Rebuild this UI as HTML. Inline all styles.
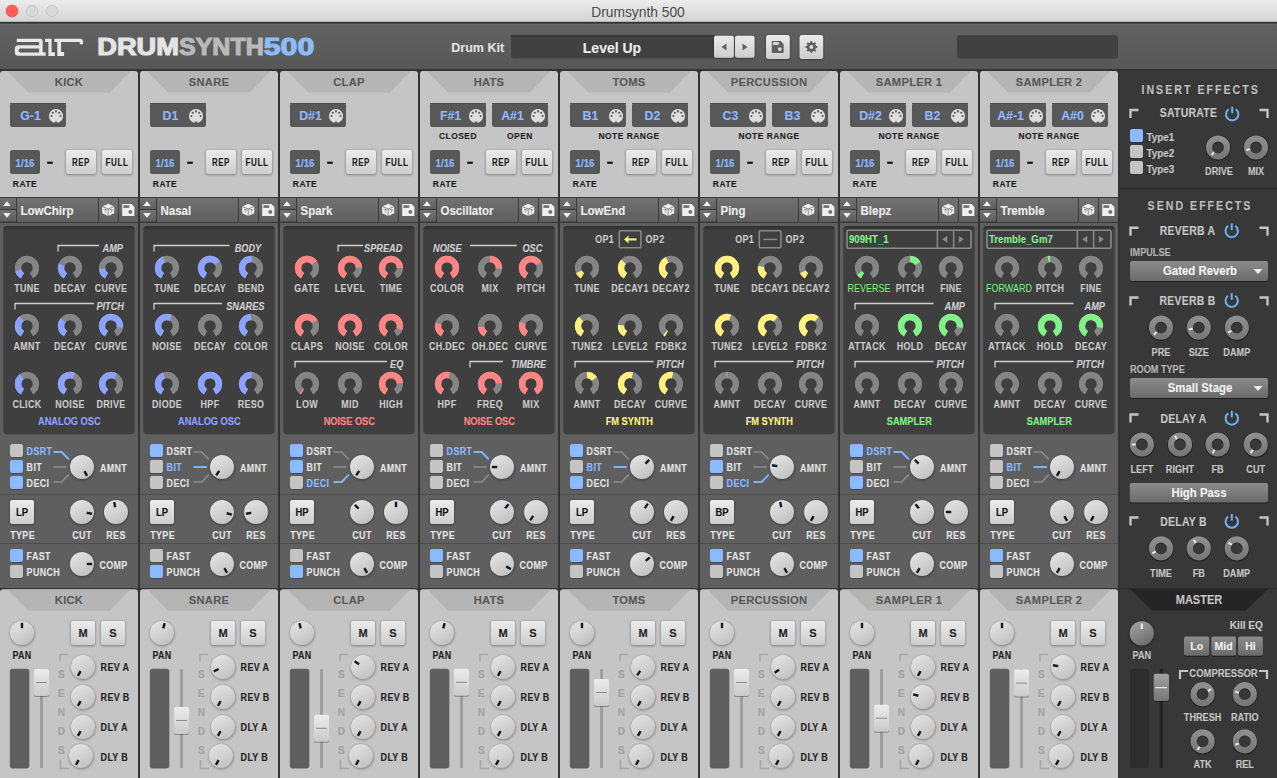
<!DOCTYPE html><html><head><meta charset="utf-8"><style>html,body{margin:0;padding:0;background:#333;overflow:hidden}svg{display:block}text{font-family:"Liberation Sans", sans-serif}</style></head><body>
<svg width="1277" height="778" viewBox="0 0 1277 778">
<defs>
<linearGradient id="title" x1="0" y1="0" x2="0" y2="1"><stop offset="0" stop-color="#ececec"/><stop offset="1" stop-color="#d4d4d4"/></linearGradient>
<linearGradient id="hdr" x1="0" y1="0" x2="0" y2="1"><stop offset="0" stop-color="#626262"/><stop offset="1" stop-color="#575757"/></linearGradient>
<linearGradient id="lbtn" x1="0" y1="0" x2="0" y2="1"><stop offset="0" stop-color="#ebebeb"/><stop offset="1" stop-color="#cdcdcd"/></linearGradient>
<linearGradient id="gbtn" x1="0" y1="0" x2="0" y2="1"><stop offset="0" stop-color="#8c8c8c"/><stop offset="1" stop-color="#6a6a6a"/></linearGradient>
<linearGradient id="pbar" x1="0" y1="0" x2="0" y2="1"><stop offset="0" stop-color="#727272"/><stop offset="1" stop-color="#5e5e5e"/></linearGradient>
<linearGradient id="wknob" x1="0.2" y1="0" x2="0.8" y2="1"><stop offset="0" stop-color="#e4e4e4"/><stop offset="1" stop-color="#c0c0c0"/></linearGradient>
<linearGradient id="dknob" x1="0" y1="0" x2="0" y2="1"><stop offset="0" stop-color="#8e8e8e"/><stop offset="1" stop-color="#787878"/></linearGradient>
<linearGradient id="gknob" x1="0.2" y1="0" x2="0.8" y2="1"><stop offset="0" stop-color="#a0a0a0"/><stop offset="1" stop-color="#6a6a6a"/></linearGradient>
<linearGradient id="fcap" x1="0" y1="0" x2="0" y2="1"><stop offset="0" stop-color="#ececec"/><stop offset="1" stop-color="#cacaca"/></linearGradient>
<linearGradient id="mcap" x1="0" y1="0" x2="0" y2="1"><stop offset="0" stop-color="#a2a2a2"/><stop offset="1" stop-color="#767676"/></linearGradient>
<linearGradient id="ishadow" x1="0" y1="0" x2="0" y2="1"><stop offset="0" stop-color="#000" stop-opacity="0.25"/><stop offset="1" stop-color="#000" stop-opacity="0"/></linearGradient>
<filter id="blur1" x="-50%" y="-50%" width="200%" height="200%"><feGaussianBlur stdDeviation="0.9"/></filter>
<filter id="blur05" x="-50%" y="-50%" width="200%" height="200%"><feGaussianBlur stdDeviation="0.6"/></filter>
</defs>
<rect x="0.00" y="0.00" width="1277.00" height="778.00" fill="#333"/>
<rect x="0.00" y="0.00" width="1277.00" height="22.00" fill="url(#title)"/>
<rect x="0.00" y="21.80" width="1277.00" height="2.00" fill="#333"/>
<circle cx="12" cy="11" r="6" fill="#fd5e56" stroke="#e2463f" stroke-width="0.6"/>
<circle cx="32" cy="11" r="5.7" fill="#d9d9d9" stroke="#c2c2c2" stroke-width="0.8"/>
<circle cx="52" cy="11" r="5.7" fill="#d9d9d9" stroke="#c2c2c2" stroke-width="0.8"/>
<text x="638.00" y="16.83" font-size="13.8" fill="#4b4b4b" font-weight="normal" text-anchor="middle">Drumsynth 500</text>
<rect x="0.00" y="23.80" width="1277.00" height="45.20" fill="url(#hdr)"/>
<rect x="0.00" y="23.80" width="1277.00" height="1.00" fill="#696969"/>
<rect x="0.00" y="69.00" width="1277.00" height="2.00" fill="#343434"/>
<path fill="#e8e8e8" fill-rule="evenodd" d="M16.7,38.7 H40.2 Q42.7,38.7 42.7,41.2 V52.2 H45.7 V55.7 H18.3 Q14.8,55.7 14.8,52.2 V48.7 Q14.8,45.2 18.3,45.2 H39.1 V42 H16.7 Z M20.5,48.4 H39.1 V52.5 H20.5 Q18.5,52.5 18.5,50.45 Q18.5,48.4 20.5,48.4 Z"/>
<path fill="#e8e8e8" d="M45.1,38.8 H51.6 V52.3 H54.9 V55.9 H48.4 V41.9 H45.1 Z"/>
<path fill="#e8e8e8" d="M54.4,38.8 H80 Q83,38.8 83,41.8 V44.2 H79.8 V42.1 H61.1 V51.9 H64.1 V55.9 H57.3 V42.1 H54.4 Z"/>
<text x="97.20" y="55.36" font-size="23.2" fill="#e4e4e4" font-weight="bold" text-anchor="start" stroke="#e4e4e4" stroke-width="1.1" textLength="81.8" lengthAdjust="spacingAndGlyphs">DRUM</text>
<text x="179.00" y="55.36" font-size="23.2" fill="#b9b9b9" font-weight="bold" text-anchor="start" stroke="#b9b9b9" stroke-width="1.1" textLength="84.8" lengthAdjust="spacingAndGlyphs">SYNTH</text>
<text x="263.80" y="55.36" font-size="23.2" fill="#8cbcfa" font-weight="bold" text-anchor="start" stroke="#8cbcfa" stroke-width="1.1" textLength="50.4" lengthAdjust="spacingAndGlyphs">500</text>
<text x="451.30" y="51.56" font-size="12.5" fill="#e2e2e2" font-weight="bold" text-anchor="start" stroke="#e2e2e2" stroke-width="0.12">Drum Kit</text>
<rect x="511.00" y="35.00" width="203.00" height="23.50" fill="#414141" rx="3"/>
<rect x="511.00" y="35.00" width="203.00" height="1.50" fill="#353535"/>
<text x="612.00" y="53.10" font-size="14" fill="#ececec" font-weight="bold" text-anchor="middle" stroke="#ececec" stroke-width="0.12">Level Up</text>
<rect x="713.70" y="36.10" width="20.60" height="22.60" fill="#000" rx="2" opacity="0.35" filter="url(#blur1)"/>
<rect x="714.00" y="35.80" width="20.00" height="22.00" fill="url(#lbtn)" rx="2"/>
<rect x="734.70" y="36.10" width="20.20" height="22.60" fill="#000" rx="2" opacity="0.35" filter="url(#blur1)"/>
<rect x="735.00" y="35.80" width="19.60" height="22.00" fill="url(#lbtn)" rx="2"/>
<path d="M721.5,47 L726.5,43.5 V50.5 Z" fill="#606060"/>
<path d="M747.5,47 L742.5,43.5 V50.5 Z" fill="#606060"/>
<rect x="765.70" y="35.30" width="24.40" height="24.50" fill="#000" rx="2.5" opacity="0.35" filter="url(#blur1)"/>
<rect x="766.00" y="35.00" width="23.80" height="23.90" fill="url(#lbtn)" rx="2.5"/>
<rect x="799.20" y="35.30" width="24.30" height="24.50" fill="#000" rx="2.5" opacity="0.35" filter="url(#blur1)"/>
<rect x="799.50" y="35.00" width="23.70" height="23.90" fill="url(#lbtn)" rx="2.5"/>
<path d="M771.8,41.6 Q771.8,41 772.4,41 H780.9 L783.7,44.4 V52.3 Q783.7,52.9 783.1,52.9 H772.4 Q771.8,52.9 771.8,52.3 Z" fill="#606060"/>
<rect x="772.90" y="42.10" width="5.90" height="2.80" fill="#dcdcdc"/>
<circle cx="779.8" cy="49.1" r="1.9" fill="#dcdcdc"/>
<polygon points="810.67,41.04 812.13,41.04 812.60,42.66 813.62,43.08 815.09,42.27 816.13,43.31 815.32,44.78 815.74,45.80 817.36,46.27 817.36,47.73 815.74,48.20 815.32,49.22 816.13,50.69 815.09,51.73 813.62,50.92 812.60,51.34 812.13,52.96 810.67,52.96 810.20,51.34 809.18,50.92 807.71,51.73 806.67,50.69 807.48,49.22 807.06,48.20 805.44,47.73 805.44,46.27 807.06,45.80 807.48,44.78 806.67,43.31 807.71,42.27 809.18,43.08 810.20,42.66" fill="#606060"/>
<circle cx="811.4" cy="47" r="1.9" fill="#dcdcdc"/>
<rect x="957.00" y="35.20" width="161.00" height="23.50" fill="#414141" rx="3"/>
<path d="M0,197 V74 Q0,71 3,71 H135 Q138,71 138,74 V197 Z" fill="#c5c5c5"/>
<polygon points="7,71 130.5,71 110,92.5 28.3,92.5" fill="#b5b5b5"/>
<text transform="translate(69.00,85.89) scale(0.97,1)" font-size="11.5" fill="#585858" font-weight="bold" text-anchor="middle" letter-spacing="0.3" stroke="#585858" stroke-width="0.12">KICK</text>
<rect x="10.00" y="103.00" width="56.00" height="24.00" fill="#585858" rx="2.5"/>
<rect x="10.00" y="103.00" width="56.00" height="1.00" fill="#4a4a4a"/>
<text transform="translate(30.50,119.94) scale(0.95,1)" font-size="13" fill="#8cb8ff" font-weight="bold" text-anchor="middle" stroke="#8cb8ff" stroke-width="0.12">G-1</text>
<circle cx="56" cy="116" r="7.1" fill="#dedede"/>
<rect x="54.8" cy="0" y="121.6" width="2.4" height="2" fill="#555"/>
<circle cx="51.40" cy="116.00" r="1.05" fill="#555"/>
<circle cx="52.75" cy="112.75" r="1.05" fill="#555"/>
<circle cx="56.00" cy="111.40" r="1.05" fill="#555"/>
<circle cx="59.25" cy="112.75" r="1.05" fill="#555"/>
<circle cx="60.60" cy="116.00" r="1.05" fill="#555"/>
<rect x="10.00" y="150.00" width="30.00" height="24.00" fill="#585858" rx="2.5"/>
<text transform="translate(25.00,167.22) scale(0.95,1)" font-size="10.2" fill="#8cb8ff" font-weight="bold" text-anchor="middle" stroke="#8cb8ff" stroke-width="0.12">1/16</text>
<rect x="47.20" y="161.60" width="5.60" height="2.40" fill="#202020"/>
<rect x="65.70" y="150.30" width="30.60" height="24.60" fill="#000" rx="2" opacity="0.35" filter="url(#blur1)"/>
<rect x="66.00" y="150.00" width="30.00" height="24.00" fill="url(#lbtn)" rx="2"/>
<rect x="101.70" y="150.30" width="30.60" height="24.60" fill="#000" rx="2" opacity="0.35" filter="url(#blur1)"/>
<rect x="102.00" y="150.00" width="30.00" height="24.00" fill="url(#lbtn)" rx="2"/>
<text transform="translate(81.00,165.65) scale(0.79,1)" font-size="10" fill="#1e1e1e" font-weight="bold" text-anchor="middle" letter-spacing="0.7" stroke="#1e1e1e" stroke-width="0.12">REP</text>
<text transform="translate(117.00,165.65) scale(0.81,1)" font-size="10" fill="#1e1e1e" font-weight="bold" text-anchor="middle" letter-spacing="0.7" stroke="#1e1e1e" stroke-width="0.12">FULL</text>
<text transform="translate(25.00,187.11) scale(0.85,1)" font-size="9.9" fill="#202020" font-weight="bold" text-anchor="middle" letter-spacing="0.6" stroke="#202020" stroke-width="0.12">RATE</text>
<rect x="0.00" y="197.00" width="138.00" height="26.00" fill="#3a3a3a"/>
<rect x="0.00" y="198.00" width="16.00" height="11.00" fill="url(#pbar)"/>
<rect x="0.00" y="210.00" width="16.00" height="11.50" fill="url(#pbar)"/>
<rect x="17.00" y="198.00" width="81.00" height="24.00" fill="url(#pbar)"/>
<rect x="99.00" y="198.00" width="19.00" height="24.00" fill="url(#pbar)"/>
<rect x="119.00" y="198.00" width="19.00" height="24.00" fill="url(#pbar)"/>
<polygon points="3.1,206 10.8,206 6.95,201.2" fill="#f0f0f0"/>
<polygon points="3.1,213 10.8,213 6.95,217.8" fill="#f0f0f0"/>
<text transform="translate(20.50,214.57) scale(0.96,1)" font-size="12" fill="#ececec" font-weight="bold" text-anchor="start" stroke="#ececec" stroke-width="0.12">LowChirp</text>
<path d="M102.2,206.5 L108.2,203.7 L114.2,206.5 V213.3 L108.2,216 L102.2,213.3 Z" fill="#f0f0f0"/>
<path d="M102.2,206.5 L108.2,209 L114.2,206.5 M108.2,209 V216" fill="none" stroke="#6a6a6a" stroke-width="0.8"/>
<text x="105.2" y="213.2" font-size="5.5" font-weight="bold" fill="#777" text-anchor="middle">?</text>
<text x="111.2" y="213.2" font-size="5.5" font-weight="bold" fill="#777" text-anchor="middle">?</text>
<path d="M122.2,204.6 Q122.2,204 122.8,204 H131.5 L134.4,207 V215.4 Q134.4,216 133.8,216 H122.8 Q122.2,216 122.2,215.4 Z" fill="#f0f0f0"/>
<rect x="123.40" y="205.30" width="5.80" height="2.60" fill="#6e6e6e"/>
<circle cx="130.3" cy="211.9" r="1.9" fill="#6e6e6e"/>
<rect x="0.00" y="223.00" width="138.00" height="365.00" fill="#5f5f5f"/>
<rect x="3.20" y="226.00" width="131.50" height="208.20" fill="#3f3f3f" rx="4"/>
<rect x="3.20" y="226.00" width="131.50" height="5.00" fill="url(#ishadow)" rx="4"/>
<circle cx="27.00" cy="268.00" r="12.4" fill="none" stroke="#2e2e2e" stroke-width="0.8" stroke-dasharray="64.93 100" transform="rotate(120 27.00 268.00)" opacity="0.6"/>
<path d="M22.50,275.79 A9,9 0 1 1 31.50,275.79" fill="none" stroke="#858585" stroke-width="6.4"/>
<path d="M22.50,275.79 A9,9 0 0 1 18.31,270.33" fill="none" stroke="#8ca2ff" stroke-width="6.4"/>
<text transform="translate(27.00,291.83) scale(0.85,1)" font-size="10.5" fill="#cacaca" font-weight="bold" text-anchor="middle" letter-spacing="0.4" stroke="#cacaca" stroke-width="0.12">TUNE</text>
<circle cx="70.00" cy="268.00" r="12.4" fill="none" stroke="#2e2e2e" stroke-width="0.8" stroke-dasharray="64.93 100" transform="rotate(120 70.00 268.00)" opacity="0.6"/>
<path d="M65.50,275.79 A9,9 0 1 1 74.50,275.79" fill="none" stroke="#858585" stroke-width="6.4"/>
<path d="M65.50,275.79 A9,9 0 0 1 61.54,264.92" fill="none" stroke="#8ca2ff" stroke-width="6.4"/>
<text transform="translate(70.00,291.83) scale(0.85,1)" font-size="10.5" fill="#cacaca" font-weight="bold" text-anchor="middle" letter-spacing="0.4" stroke="#cacaca" stroke-width="0.12">DECAY</text>
<circle cx="111.00" cy="268.00" r="12.4" fill="none" stroke="#2e2e2e" stroke-width="0.8" stroke-dasharray="64.93 100" transform="rotate(120 111.00 268.00)" opacity="0.6"/>
<path d="M106.50,275.79 A9,9 0 1 1 115.50,275.79" fill="none" stroke="#858585" stroke-width="6.4"/>
<path d="M106.50,275.79 A9,9 0 0 1 102.03,268.78" fill="none" stroke="#8ca2ff" stroke-width="6.4"/>
<text transform="translate(111.00,291.83) scale(0.85,1)" font-size="10.5" fill="#cacaca" font-weight="bold" text-anchor="middle" letter-spacing="0.4" stroke="#cacaca" stroke-width="0.12">CURVE</text>
<circle cx="27.00" cy="326.00" r="12.4" fill="none" stroke="#2e2e2e" stroke-width="0.8" stroke-dasharray="64.93 100" transform="rotate(120 27.00 326.00)" opacity="0.6"/>
<path d="M22.50,333.79 A9,9 0 1 1 31.50,333.79" fill="none" stroke="#858585" stroke-width="6.4"/>
<path d="M22.50,333.79 A9,9 0 0 1 21.84,318.63" fill="none" stroke="#8ca2ff" stroke-width="6.4"/>
<text transform="translate(27.00,349.83) scale(0.85,1)" font-size="10.5" fill="#cacaca" font-weight="bold" text-anchor="middle" letter-spacing="0.4" stroke="#cacaca" stroke-width="0.12">AMNT</text>
<circle cx="70.00" cy="326.00" r="12.4" fill="none" stroke="#2e2e2e" stroke-width="0.8" stroke-dasharray="64.93 100" transform="rotate(120 70.00 326.00)" opacity="0.6"/>
<path d="M65.50,333.79 A9,9 0 1 1 74.50,333.79" fill="none" stroke="#858585" stroke-width="6.4"/>
<path d="M65.50,333.79 A9,9 0 0 1 63.11,320.21" fill="none" stroke="#8ca2ff" stroke-width="6.4"/>
<text transform="translate(70.00,349.83) scale(0.85,1)" font-size="10.5" fill="#cacaca" font-weight="bold" text-anchor="middle" letter-spacing="0.4" stroke="#cacaca" stroke-width="0.12">DECAY</text>
<circle cx="111.00" cy="326.00" r="12.4" fill="none" stroke="#2e2e2e" stroke-width="0.8" stroke-dasharray="64.93 100" transform="rotate(120 111.00 326.00)" opacity="0.6"/>
<path d="M106.50,333.79 A9,9 0 1 1 115.50,333.79" fill="none" stroke="#858585" stroke-width="6.4"/>
<path d="M106.50,333.79 A9,9 0 1 1 119.86,327.56" fill="none" stroke="#8ca2ff" stroke-width="6.4"/>
<text transform="translate(111.00,349.83) scale(0.85,1)" font-size="10.5" fill="#cacaca" font-weight="bold" text-anchor="middle" letter-spacing="0.4" stroke="#cacaca" stroke-width="0.12">CURVE</text>
<circle cx="27.00" cy="384.00" r="12.4" fill="none" stroke="#2e2e2e" stroke-width="0.8" stroke-dasharray="64.93 100" transform="rotate(120 27.00 384.00)" opacity="0.6"/>
<path d="M22.50,391.79 A9,9 0 1 1 31.50,391.79" fill="none" stroke="#858585" stroke-width="6.4"/>
<path d="M22.50,391.79 A9,9 0 0 1 21.84,376.63" fill="none" stroke="#8ca2ff" stroke-width="6.4"/>
<text transform="translate(27.00,407.83) scale(0.85,1)" font-size="10.5" fill="#cacaca" font-weight="bold" text-anchor="middle" letter-spacing="0.4" stroke="#cacaca" stroke-width="0.12">CLICK</text>
<circle cx="70.00" cy="384.00" r="12.4" fill="none" stroke="#2e2e2e" stroke-width="0.8" stroke-dasharray="64.93 100" transform="rotate(120 70.00 384.00)" opacity="0.6"/>
<path d="M65.50,391.79 A9,9 0 1 1 74.50,391.79" fill="none" stroke="#858585" stroke-width="6.4"/>
<path d="M65.50,391.79 A9,9 0 0 1 73.80,375.84" fill="none" stroke="#8ca2ff" stroke-width="6.4"/>
<text transform="translate(70.00,407.83) scale(0.85,1)" font-size="10.5" fill="#cacaca" font-weight="bold" text-anchor="middle" letter-spacing="0.4" stroke="#cacaca" stroke-width="0.12">NOISE</text>
<circle cx="111.00" cy="384.00" r="12.4" fill="none" stroke="#2e2e2e" stroke-width="0.8" stroke-dasharray="64.93 100" transform="rotate(120 111.00 384.00)" opacity="0.6"/>
<path d="M106.50,391.79 A9,9 0 1 1 115.50,391.79" fill="none" stroke="#858585" stroke-width="6.4"/>
<path d="M106.50,391.79 A9,9 0 0 1 115.50,376.21" fill="none" stroke="#8ca2ff" stroke-width="6.4"/>
<text transform="translate(111.00,407.83) scale(0.85,1)" font-size="10.5" fill="#cacaca" font-weight="bold" text-anchor="middle" letter-spacing="0.4" stroke="#cacaca" stroke-width="0.12">DRIVE</text>
<path d="M58,251.5 V245.5 H99" fill="none" stroke="#cfcfcf" stroke-width="1.3"/>
<text transform="translate(123.00,251.95) scale(0.92,1)" font-size="10" fill="#cfcfcf" font-weight="bold" text-anchor="end" font-style="italic" stroke="#cfcfcf" stroke-width="0.12">AMP</text>
<path d="M15,309.5 V303.5 H94" fill="none" stroke="#cfcfcf" stroke-width="1.3"/>
<text transform="translate(124.00,309.94) scale(0.92,1)" font-size="10" fill="#cfcfcf" font-weight="bold" text-anchor="end" font-style="italic" stroke="#cfcfcf" stroke-width="0.12">PITCH</text>
<text transform="translate(69.30,424.83) scale(0.88,1)" font-size="10.5" fill="#8ca2ff" font-weight="bold" text-anchor="middle" stroke="#8ca2ff" stroke-width="0.12">ANALOG OSC</text>
<rect x="0.00" y="494.00" width="138.00" height="1.00" fill="#4d4d4d"/>
<rect x="0.00" y="543.00" width="138.00" height="1.00" fill="#4d4d4d"/>
<rect x="10.20" y="444.80" width="13.00" height="13.00" fill="#2a2a2a" rx="2" opacity="0.45" filter="url(#blur05)"/>
<rect x="10.00" y="444.00" width="13.00" height="13.00" fill="#c4c4c4" rx="2"/>
<text transform="translate(26.60,455.23) scale(0.85,1)" font-size="10.5" fill="#8cbaff" font-weight="bold" text-anchor="start" letter-spacing="0.4" stroke="#8cbaff" stroke-width="0.12">DSRT</text>
<rect x="10.20" y="460.80" width="13.00" height="13.00" fill="#2a2a2a" rx="2" opacity="0.45" filter="url(#blur05)"/>
<rect x="10.00" y="460.00" width="13.00" height="13.00" fill="#8cbaff" rx="2"/>
<text transform="translate(26.60,471.23) scale(0.85,1)" font-size="10.5" fill="#e2e2e2" font-weight="bold" text-anchor="start" letter-spacing="0.4" stroke="#e2e2e2" stroke-width="0.12">BIT</text>
<rect x="10.20" y="476.80" width="13.00" height="13.00" fill="#2a2a2a" rx="2" opacity="0.45" filter="url(#blur05)"/>
<rect x="10.00" y="476.00" width="13.00" height="13.00" fill="#8cbaff" rx="2"/>
<text transform="translate(26.60,487.23) scale(0.85,1)" font-size="10.5" fill="#e2e2e2" font-weight="bold" text-anchor="start" letter-spacing="0.4" stroke="#e2e2e2" stroke-width="0.12">DECI</text>
<path d="M53.5,467 H66.8" fill="none" stroke="#8c8c8c" stroke-width="1.6"/>
<path d="M53.5,482 H61.6 L68.8,474.6" fill="none" stroke="#8c8c8c" stroke-width="1.6"/>
<path d="M53.5,452 H61.6 L68.8,459.3" fill="none" stroke="#7fb4ff" stroke-width="2"/>
<circle cx="82.30" cy="467.80" r="12.6" fill="#000" opacity="0.28" filter="url(#blur1)"/>
<circle cx="82.00" cy="467.00" r="12" fill="url(#wknob)"/>
<line x1="84.40" y1="471.16" x2="87.10" y2="475.83" stroke="#0c1a2c" stroke-width="2.4"/>
<text transform="translate(99.90,471.83) scale(0.85,1)" font-size="10.5" fill="#e4e4e4" font-weight="bold" text-anchor="start" letter-spacing="0.4" stroke="#e4e4e4" stroke-width="0.12">AMNT</text>
<rect x="9.70" y="500.30" width="24.60" height="24.60" fill="#000" rx="2" opacity="0.35" filter="url(#blur1)"/>
<rect x="10.00" y="500.00" width="24.00" height="24.00" fill="url(#lbtn)" rx="2"/>
<text transform="translate(22.00,515.83) scale(0.9,1)" font-size="10.5" fill="#111" font-weight="bold" text-anchor="middle" stroke="#111" stroke-width="0.12">LP</text>
<circle cx="82.30" cy="512.80" r="12.6" fill="#000" opacity="0.28" filter="url(#blur1)"/>
<circle cx="82.00" cy="512.00" r="12" fill="url(#wknob)"/>
<line x1="86.73" y1="512.83" x2="92.05" y2="513.77" stroke="#0c1a2c" stroke-width="2.4"/>
<circle cx="116.30" cy="512.80" r="12.6" fill="#000" opacity="0.28" filter="url(#blur1)"/>
<circle cx="116.00" cy="512.00" r="12" fill="url(#wknob)"/>
<line x1="115.17" y1="507.27" x2="114.23" y2="501.95" stroke="#0c1a2c" stroke-width="2.4"/>
<text transform="translate(22.60,538.83) scale(0.85,1)" font-size="10.5" fill="#e4e4e4" font-weight="bold" text-anchor="middle" letter-spacing="0.4" stroke="#e4e4e4" stroke-width="0.12">TYPE</text>
<text transform="translate(82.00,538.83) scale(0.85,1)" font-size="10.5" fill="#e4e4e4" font-weight="bold" text-anchor="middle" letter-spacing="0.4" stroke="#e4e4e4" stroke-width="0.12">CUT</text>
<text transform="translate(116.00,538.83) scale(0.85,1)" font-size="10.5" fill="#e4e4e4" font-weight="bold" text-anchor="middle" letter-spacing="0.4" stroke="#e4e4e4" stroke-width="0.12">RES</text>
<rect x="10.20" y="549.80" width="13.00" height="13.00" fill="#2a2a2a" rx="2" opacity="0.45" filter="url(#blur05)"/>
<rect x="10.00" y="549.00" width="13.00" height="13.00" fill="#8cbaff" rx="2"/>
<rect x="10.20" y="565.80" width="13.00" height="13.00" fill="#2a2a2a" rx="2" opacity="0.45" filter="url(#blur05)"/>
<rect x="10.00" y="565.00" width="13.00" height="13.00" fill="#c4c4c4" rx="2"/>
<text transform="translate(26.60,560.43) scale(0.85,1)" font-size="10.5" fill="#e4e4e4" font-weight="bold" text-anchor="start" letter-spacing="0.4" stroke="#e4e4e4" stroke-width="0.12">FAST</text>
<text transform="translate(26.60,576.43) scale(0.85,1)" font-size="10.5" fill="#e4e4e4" font-weight="bold" text-anchor="start" letter-spacing="0.4" stroke="#e4e4e4" stroke-width="0.12">PUNCH</text>
<circle cx="82.30" cy="564.80" r="12.6" fill="#000" opacity="0.28" filter="url(#blur1)"/>
<circle cx="82.00" cy="564.00" r="12" fill="url(#wknob)"/>
<line x1="86.80" y1="564.00" x2="92.20" y2="564.00" stroke="#0c1a2c" stroke-width="2.4"/>
<text transform="translate(99.40,568.83) scale(0.85,1)" font-size="10.5" fill="#e4e4e4" font-weight="bold" text-anchor="start" letter-spacing="0.4" stroke="#e4e4e4" stroke-width="0.12">COMP</text>
<path d="M0,778 V592.3 Q0,589.3 3,589.3 H135 Q138,589.3 138,592.3 V778 Z" fill="#c5c5c5"/>
<polygon points="7,589.3 130.5,589.3 110,610.7 28.3,610.7" fill="#b5b5b5"/>
<text transform="translate(69.00,603.99) scale(0.97,1)" font-size="11.5" fill="#585858" font-weight="bold" text-anchor="middle" letter-spacing="0.3" stroke="#585858" stroke-width="0.12">KICK</text>
<circle cx="22.30" cy="633.80" r="12.6" fill="#000" opacity="0.28" filter="url(#blur1)"/>
<circle cx="22.00" cy="633.00" r="12" fill="url(#wknob)"/>
<line x1="22.00" y1="628.20" x2="22.00" y2="622.80" stroke="#0c1a2c" stroke-width="2.4"/>
<text transform="translate(22.00,658.83) scale(0.85,1)" font-size="10.5" fill="#1e1e1e" font-weight="bold" text-anchor="middle" letter-spacing="0.4" stroke="#1e1e1e" stroke-width="0.12">PAN</text>
<rect x="70.70" y="621.30" width="24.60" height="24.60" fill="#000" rx="2" opacity="0.35" filter="url(#blur1)"/>
<rect x="71.00" y="621.00" width="24.00" height="24.00" fill="url(#lbtn)" rx="2"/>
<rect x="100.70" y="621.30" width="24.60" height="24.60" fill="#000" rx="2" opacity="0.35" filter="url(#blur1)"/>
<rect x="101.00" y="621.00" width="24.00" height="24.00" fill="url(#lbtn)" rx="2"/>
<text x="83.00" y="637.01" font-size="11" fill="#222" font-weight="bold" text-anchor="middle" stroke="#222" stroke-width="0.12">M</text>
<text x="113.00" y="637.01" font-size="11" fill="#222" font-weight="bold" text-anchor="middle" stroke="#222" stroke-width="0.12">S</text>
<path d="M60,661.5 V654.5 H68" fill="none" stroke="#a8a8a8" stroke-width="1.6"/>
<path d="M60.5,760 V768.5 H69" fill="none" stroke="#a8a8a8" stroke-width="1.6"/>
<text x="61.30" y="678.04" font-size="10" fill="#a2a2a2" font-weight="bold" text-anchor="middle" stroke="#a2a2a2" stroke-width="0.12">S</text>
<text x="61.30" y="697.09" font-size="10" fill="#a2a2a2" font-weight="bold" text-anchor="middle" stroke="#a2a2a2" stroke-width="0.12">E</text>
<text x="61.30" y="716.14" font-size="10" fill="#a2a2a2" font-weight="bold" text-anchor="middle" stroke="#a2a2a2" stroke-width="0.12">N</text>
<text x="61.30" y="735.19" font-size="10" fill="#a2a2a2" font-weight="bold" text-anchor="middle" stroke="#a2a2a2" stroke-width="0.12">D</text>
<text x="61.30" y="754.25" font-size="10" fill="#a2a2a2" font-weight="bold" text-anchor="middle" stroke="#a2a2a2" stroke-width="0.12">S</text>
<circle cx="83.30" cy="667.80" r="12.6" fill="#000" opacity="0.28" filter="url(#blur1)"/>
<circle cx="83.00" cy="667.00" r="12" fill="url(#wknob)"/>
<line x1="80.60" y1="671.16" x2="77.90" y2="675.83" stroke="#0c1a2c" stroke-width="2.4"/>
<text transform="translate(100.60,670.83) scale(0.85,1)" font-size="10.5" fill="#1e1e1e" font-weight="bold" text-anchor="start" letter-spacing="0.4" stroke="#1e1e1e" stroke-width="0.12">REV A</text>
<circle cx="83.30" cy="697.80" r="12.6" fill="#000" opacity="0.28" filter="url(#blur1)"/>
<circle cx="83.00" cy="697.00" r="12" fill="url(#wknob)"/>
<line x1="80.60" y1="701.16" x2="77.90" y2="705.83" stroke="#0c1a2c" stroke-width="2.4"/>
<text transform="translate(100.60,700.83) scale(0.85,1)" font-size="10.5" fill="#1e1e1e" font-weight="bold" text-anchor="start" letter-spacing="0.4" stroke="#1e1e1e" stroke-width="0.12">REV B</text>
<circle cx="83.30" cy="727.80" r="12.6" fill="#000" opacity="0.28" filter="url(#blur1)"/>
<circle cx="83.00" cy="727.00" r="12" fill="url(#wknob)"/>
<line x1="80.60" y1="731.16" x2="77.90" y2="735.83" stroke="#0c1a2c" stroke-width="2.4"/>
<text transform="translate(100.60,730.83) scale(0.85,1)" font-size="10.5" fill="#1e1e1e" font-weight="bold" text-anchor="start" letter-spacing="0.4" stroke="#1e1e1e" stroke-width="0.12">DLY A</text>
<circle cx="81.30" cy="756.80" r="12.6" fill="#000" opacity="0.28" filter="url(#blur1)"/>
<circle cx="81.00" cy="756.00" r="12" fill="url(#wknob)"/>
<line x1="78.60" y1="760.16" x2="75.90" y2="764.83" stroke="#0c1a2c" stroke-width="2.4"/>
<text transform="translate(100.60,760.83) scale(0.85,1)" font-size="10.5" fill="#1e1e1e" font-weight="bold" text-anchor="start" letter-spacing="0.4" stroke="#1e1e1e" stroke-width="0.12">DLY B</text>
<rect x="10.30" y="669.20" width="18.60" height="98.80" fill="#5e5e5e" rx="2" stroke="#555" stroke-width="0.8"/>
<rect x="40.00" y="669.20" width="3.00" height="98.80" fill="#9e9e9e"/>
<rect x="34.00" y="670.00" width="15.00" height="27.00" fill="#000" rx="2" opacity="0.3" filter="url(#blur05)"/>
<rect x="34.00" y="669.00" width="15.00" height="27.00" fill="url(#fcap)" rx="2"/>
<rect x="36.00" y="682.00" width="11.00" height="1.00" fill="#8a8a8a"/>
<path d="M140,197 V74 Q140,71 143,71 H275 Q278,71 278,74 V197 Z" fill="#c5c5c5"/>
<polygon points="147,71 270.5,71 250,92.5 168.3,92.5" fill="#b5b5b5"/>
<text transform="translate(209.00,85.89) scale(0.97,1)" font-size="11.5" fill="#585858" font-weight="bold" text-anchor="middle" letter-spacing="0.3" stroke="#585858" stroke-width="0.12">SNARE</text>
<rect x="150.00" y="103.00" width="56.00" height="24.00" fill="#585858" rx="2.5"/>
<rect x="150.00" y="103.00" width="56.00" height="1.00" fill="#4a4a4a"/>
<text transform="translate(170.50,119.94) scale(0.95,1)" font-size="13" fill="#8cb8ff" font-weight="bold" text-anchor="middle" stroke="#8cb8ff" stroke-width="0.12">D1</text>
<circle cx="196" cy="116" r="7.1" fill="#dedede"/>
<rect x="194.8" cy="0" y="121.6" width="2.4" height="2" fill="#555"/>
<circle cx="191.40" cy="116.00" r="1.05" fill="#555"/>
<circle cx="192.75" cy="112.75" r="1.05" fill="#555"/>
<circle cx="196.00" cy="111.40" r="1.05" fill="#555"/>
<circle cx="199.25" cy="112.75" r="1.05" fill="#555"/>
<circle cx="200.60" cy="116.00" r="1.05" fill="#555"/>
<rect x="150.00" y="150.00" width="30.00" height="24.00" fill="#585858" rx="2.5"/>
<text transform="translate(165.00,167.22) scale(0.95,1)" font-size="10.2" fill="#8cb8ff" font-weight="bold" text-anchor="middle" stroke="#8cb8ff" stroke-width="0.12">1/16</text>
<rect x="187.20" y="161.60" width="5.60" height="2.40" fill="#202020"/>
<rect x="205.70" y="150.30" width="30.60" height="24.60" fill="#000" rx="2" opacity="0.35" filter="url(#blur1)"/>
<rect x="206.00" y="150.00" width="30.00" height="24.00" fill="url(#lbtn)" rx="2"/>
<rect x="241.70" y="150.30" width="30.60" height="24.60" fill="#000" rx="2" opacity="0.35" filter="url(#blur1)"/>
<rect x="242.00" y="150.00" width="30.00" height="24.00" fill="url(#lbtn)" rx="2"/>
<text transform="translate(221.00,165.65) scale(0.79,1)" font-size="10" fill="#1e1e1e" font-weight="bold" text-anchor="middle" letter-spacing="0.7" stroke="#1e1e1e" stroke-width="0.12">REP</text>
<text transform="translate(257.00,165.65) scale(0.81,1)" font-size="10" fill="#1e1e1e" font-weight="bold" text-anchor="middle" letter-spacing="0.7" stroke="#1e1e1e" stroke-width="0.12">FULL</text>
<text transform="translate(165.00,187.11) scale(0.85,1)" font-size="9.9" fill="#202020" font-weight="bold" text-anchor="middle" letter-spacing="0.6" stroke="#202020" stroke-width="0.12">RATE</text>
<rect x="140.00" y="197.00" width="138.00" height="26.00" fill="#3a3a3a"/>
<rect x="140.00" y="198.00" width="16.00" height="11.00" fill="url(#pbar)"/>
<rect x="140.00" y="210.00" width="16.00" height="11.50" fill="url(#pbar)"/>
<rect x="157.00" y="198.00" width="81.00" height="24.00" fill="url(#pbar)"/>
<rect x="239.00" y="198.00" width="19.00" height="24.00" fill="url(#pbar)"/>
<rect x="259.00" y="198.00" width="19.00" height="24.00" fill="url(#pbar)"/>
<polygon points="143.1,206 150.8,206 146.95,201.2" fill="#f0f0f0"/>
<polygon points="143.1,213 150.8,213 146.95,217.8" fill="#f0f0f0"/>
<text transform="translate(160.50,214.57) scale(0.96,1)" font-size="12" fill="#ececec" font-weight="bold" text-anchor="start" stroke="#ececec" stroke-width="0.12">Nasal</text>
<path d="M242.2,206.5 L248.2,203.7 L254.2,206.5 V213.3 L248.2,216 L242.2,213.3 Z" fill="#f0f0f0"/>
<path d="M242.2,206.5 L248.2,209 L254.2,206.5 M248.2,209 V216" fill="none" stroke="#6a6a6a" stroke-width="0.8"/>
<text x="245.2" y="213.2" font-size="5.5" font-weight="bold" fill="#777" text-anchor="middle">?</text>
<text x="251.2" y="213.2" font-size="5.5" font-weight="bold" fill="#777" text-anchor="middle">?</text>
<path d="M262.2,204.6 Q262.2,204 262.8,204 H271.5 L274.4,207 V215.4 Q274.4,216 273.8,216 H262.8 Q262.2,216 262.2,215.4 Z" fill="#f0f0f0"/>
<rect x="263.40" y="205.30" width="5.80" height="2.60" fill="#6e6e6e"/>
<circle cx="270.3" cy="211.9" r="1.9" fill="#6e6e6e"/>
<rect x="140.00" y="223.00" width="138.00" height="365.00" fill="#5f5f5f"/>
<rect x="143.20" y="226.00" width="131.50" height="208.20" fill="#3f3f3f" rx="4"/>
<rect x="143.20" y="226.00" width="131.50" height="5.00" fill="url(#ishadow)" rx="4"/>
<circle cx="167.00" cy="268.00" r="12.4" fill="none" stroke="#2e2e2e" stroke-width="0.8" stroke-dasharray="64.93 100" transform="rotate(120 167.00 268.00)" opacity="0.6"/>
<path d="M162.50,275.79 A9,9 0 1 1 171.50,275.79" fill="none" stroke="#858585" stroke-width="6.4"/>
<path d="M162.50,275.79 A9,9 0 0 1 163.92,259.54" fill="none" stroke="#8ca2ff" stroke-width="6.4"/>
<text transform="translate(167.00,291.83) scale(0.85,1)" font-size="10.5" fill="#cacaca" font-weight="bold" text-anchor="middle" letter-spacing="0.4" stroke="#cacaca" stroke-width="0.12">TUNE</text>
<circle cx="210.00" cy="268.00" r="12.4" fill="none" stroke="#2e2e2e" stroke-width="0.8" stroke-dasharray="64.93 100" transform="rotate(120 210.00 268.00)" opacity="0.6"/>
<path d="M205.50,275.79 A9,9 0 1 1 214.50,275.79" fill="none" stroke="#858585" stroke-width="6.4"/>
<path d="M205.50,275.79 A9,9 0 1 1 217.37,262.84" fill="none" stroke="#8ca2ff" stroke-width="6.4"/>
<text transform="translate(210.00,291.83) scale(0.85,1)" font-size="10.5" fill="#cacaca" font-weight="bold" text-anchor="middle" letter-spacing="0.4" stroke="#cacaca" stroke-width="0.12">DECAY</text>
<circle cx="251.00" cy="268.00" r="12.4" fill="none" stroke="#2e2e2e" stroke-width="0.8" stroke-dasharray="64.93 100" transform="rotate(120 251.00 268.00)" opacity="0.6"/>
<path d="M246.50,275.79 A9,9 0 1 1 255.50,275.79" fill="none" stroke="#858585" stroke-width="6.4"/>
<path d="M246.50,275.79 A9,9 0 0 1 251.78,259.03" fill="none" stroke="#8ca2ff" stroke-width="6.4"/>
<text transform="translate(251.00,291.83) scale(0.85,1)" font-size="10.5" fill="#cacaca" font-weight="bold" text-anchor="middle" letter-spacing="0.4" stroke="#cacaca" stroke-width="0.12">BEND</text>
<circle cx="167.00" cy="326.00" r="12.4" fill="none" stroke="#2e2e2e" stroke-width="0.8" stroke-dasharray="64.93 100" transform="rotate(120 167.00 326.00)" opacity="0.6"/>
<path d="M162.50,333.79 A9,9 0 1 1 171.50,333.79" fill="none" stroke="#858585" stroke-width="6.4"/>
<path d="M162.50,333.79 A9,9 0 0 1 170.80,317.84" fill="none" stroke="#8ca2ff" stroke-width="6.4"/>
<text transform="translate(167.00,349.83) scale(0.85,1)" font-size="10.5" fill="#cacaca" font-weight="bold" text-anchor="middle" letter-spacing="0.4" stroke="#cacaca" stroke-width="0.12">NOISE</text>
<circle cx="210.00" cy="326.00" r="12.4" fill="none" stroke="#2e2e2e" stroke-width="0.8" stroke-dasharray="64.93 100" transform="rotate(120 210.00 326.00)" opacity="0.6"/>
<path d="M205.50,333.79 A9,9 0 1 1 214.50,333.79" fill="none" stroke="#858585" stroke-width="6.4"/>
<path d="M205.50,333.79 A9,9 0 0 1 205.23,333.63" fill="none" stroke="#8ca2ff" stroke-width="6.4"/>
<text transform="translate(210.00,349.83) scale(0.85,1)" font-size="10.5" fill="#cacaca" font-weight="bold" text-anchor="middle" letter-spacing="0.4" stroke="#cacaca" stroke-width="0.12">DECAY</text>
<circle cx="251.00" cy="326.00" r="12.4" fill="none" stroke="#2e2e2e" stroke-width="0.8" stroke-dasharray="64.93 100" transform="rotate(120 251.00 326.00)" opacity="0.6"/>
<path d="M246.50,333.79 A9,9 0 1 1 255.50,333.79" fill="none" stroke="#858585" stroke-width="6.4"/>
<path d="M246.50,333.79 A9,9 0 0 1 251.00,317.00" fill="none" stroke="#8ca2ff" stroke-width="6.4"/>
<text transform="translate(251.00,349.83) scale(0.85,1)" font-size="10.5" fill="#cacaca" font-weight="bold" text-anchor="middle" letter-spacing="0.4" stroke="#cacaca" stroke-width="0.12">COLOR</text>
<circle cx="167.00" cy="384.00" r="12.4" fill="none" stroke="#2e2e2e" stroke-width="0.8" stroke-dasharray="64.93 100" transform="rotate(120 167.00 384.00)" opacity="0.6"/>
<path d="M162.50,391.79 A9,9 0 1 1 171.50,391.79" fill="none" stroke="#858585" stroke-width="6.4"/>
<path d="M162.50,391.79 A9,9 0 0 1 163.92,375.54" fill="none" stroke="#8ca2ff" stroke-width="6.4"/>
<text transform="translate(167.00,407.83) scale(0.85,1)" font-size="10.5" fill="#cacaca" font-weight="bold" text-anchor="middle" letter-spacing="0.4" stroke="#cacaca" stroke-width="0.12">DIODE</text>
<circle cx="210.00" cy="384.00" r="12.4" fill="none" stroke="#2e2e2e" stroke-width="0.8" stroke-dasharray="64.93 100" transform="rotate(120 210.00 384.00)" opacity="0.6"/>
<path d="M205.50,391.79 A9,9 0 1 1 214.50,391.79" fill="none" stroke="#858585" stroke-width="6.4"/>
<path d="M205.50,391.79 A9,9 0 1 1 214.50,391.79" fill="none" stroke="#8ca2ff" stroke-width="6.4"/>
<text transform="translate(210.00,407.83) scale(0.85,1)" font-size="10.5" fill="#cacaca" font-weight="bold" text-anchor="middle" letter-spacing="0.4" stroke="#cacaca" stroke-width="0.12">HPF</text>
<circle cx="251.00" cy="384.00" r="12.4" fill="none" stroke="#2e2e2e" stroke-width="0.8" stroke-dasharray="64.93 100" transform="rotate(120 251.00 384.00)" opacity="0.6"/>
<path d="M246.50,391.79 A9,9 0 1 1 255.50,391.79" fill="none" stroke="#858585" stroke-width="6.4"/>
<path d="M246.50,391.79 A9,9 0 0 1 251.78,375.03" fill="none" stroke="#8ca2ff" stroke-width="6.4"/>
<text transform="translate(251.00,407.83) scale(0.85,1)" font-size="10.5" fill="#cacaca" font-weight="bold" text-anchor="middle" letter-spacing="0.4" stroke="#cacaca" stroke-width="0.12">RESO</text>
<path d="M154,251.5 V245.5 H229.5" fill="none" stroke="#cfcfcf" stroke-width="1.3"/>
<text transform="translate(261.20,251.95) scale(0.92,1)" font-size="10" fill="#cfcfcf" font-weight="bold" text-anchor="end" font-style="italic" stroke="#cfcfcf" stroke-width="0.12">BODY</text>
<path d="M154,309.5 V303.5 H222" fill="none" stroke="#cfcfcf" stroke-width="1.3"/>
<text transform="translate(264.50,309.94) scale(0.92,1)" font-size="10" fill="#cfcfcf" font-weight="bold" text-anchor="end" font-style="italic" stroke="#cfcfcf" stroke-width="0.12">SNARES</text>
<text transform="translate(209.30,424.83) scale(0.88,1)" font-size="10.5" fill="#8ca2ff" font-weight="bold" text-anchor="middle" stroke="#8ca2ff" stroke-width="0.12">ANALOG OSC</text>
<rect x="140.00" y="494.00" width="138.00" height="1.00" fill="#4d4d4d"/>
<rect x="140.00" y="543.00" width="138.00" height="1.00" fill="#4d4d4d"/>
<rect x="150.20" y="444.80" width="13.00" height="13.00" fill="#2a2a2a" rx="2" opacity="0.45" filter="url(#blur05)"/>
<rect x="150.00" y="444.00" width="13.00" height="13.00" fill="#8cbaff" rx="2"/>
<text transform="translate(166.60,455.23) scale(0.85,1)" font-size="10.5" fill="#e2e2e2" font-weight="bold" text-anchor="start" letter-spacing="0.4" stroke="#e2e2e2" stroke-width="0.12">DSRT</text>
<rect x="150.20" y="460.80" width="13.00" height="13.00" fill="#2a2a2a" rx="2" opacity="0.45" filter="url(#blur05)"/>
<rect x="150.00" y="460.00" width="13.00" height="13.00" fill="#c4c4c4" rx="2"/>
<text transform="translate(166.60,471.23) scale(0.85,1)" font-size="10.5" fill="#8cbaff" font-weight="bold" text-anchor="start" letter-spacing="0.4" stroke="#8cbaff" stroke-width="0.12">BIT</text>
<rect x="150.20" y="476.80" width="13.00" height="13.00" fill="#2a2a2a" rx="2" opacity="0.45" filter="url(#blur05)"/>
<rect x="150.00" y="476.00" width="13.00" height="13.00" fill="#c4c4c4" rx="2"/>
<text transform="translate(166.60,487.23) scale(0.85,1)" font-size="10.5" fill="#e2e2e2" font-weight="bold" text-anchor="start" letter-spacing="0.4" stroke="#e2e2e2" stroke-width="0.12">DECI</text>
<path d="M193.5,452 H201.6 L208.8,459.3" fill="none" stroke="#8c8c8c" stroke-width="1.6"/>
<path d="M193.5,482 H201.6 L208.8,474.6" fill="none" stroke="#8c8c8c" stroke-width="1.6"/>
<path d="M193.5,467 H206.8" fill="none" stroke="#7fb4ff" stroke-width="2"/>
<circle cx="222.30" cy="467.80" r="12.6" fill="#000" opacity="0.28" filter="url(#blur1)"/>
<circle cx="222.00" cy="467.00" r="12" fill="url(#wknob)"/>
<line x1="219.25" y1="470.93" x2="216.15" y2="475.36" stroke="#0c1a2c" stroke-width="2.4"/>
<text transform="translate(239.90,471.83) scale(0.85,1)" font-size="10.5" fill="#e4e4e4" font-weight="bold" text-anchor="start" letter-spacing="0.4" stroke="#e4e4e4" stroke-width="0.12">AMNT</text>
<rect x="149.70" y="500.30" width="24.60" height="24.60" fill="#000" rx="2" opacity="0.35" filter="url(#blur1)"/>
<rect x="150.00" y="500.00" width="24.00" height="24.00" fill="url(#lbtn)" rx="2"/>
<text transform="translate(162.00,515.83) scale(0.9,1)" font-size="10.5" fill="#111" font-weight="bold" text-anchor="middle" stroke="#111" stroke-width="0.12">LP</text>
<circle cx="222.30" cy="512.80" r="12.6" fill="#000" opacity="0.28" filter="url(#blur1)"/>
<circle cx="222.00" cy="512.00" r="12" fill="url(#wknob)"/>
<line x1="226.64" y1="513.24" x2="231.85" y2="514.64" stroke="#0c1a2c" stroke-width="2.4"/>
<circle cx="256.30" cy="512.80" r="12.6" fill="#000" opacity="0.28" filter="url(#blur1)"/>
<circle cx="256.00" cy="512.00" r="12" fill="url(#wknob)"/>
<line x1="251.27" y1="512.83" x2="245.95" y2="513.77" stroke="#0c1a2c" stroke-width="2.4"/>
<text transform="translate(162.60,538.83) scale(0.85,1)" font-size="10.5" fill="#e4e4e4" font-weight="bold" text-anchor="middle" letter-spacing="0.4" stroke="#e4e4e4" stroke-width="0.12">TYPE</text>
<text transform="translate(222.00,538.83) scale(0.85,1)" font-size="10.5" fill="#e4e4e4" font-weight="bold" text-anchor="middle" letter-spacing="0.4" stroke="#e4e4e4" stroke-width="0.12">CUT</text>
<text transform="translate(256.00,538.83) scale(0.85,1)" font-size="10.5" fill="#e4e4e4" font-weight="bold" text-anchor="middle" letter-spacing="0.4" stroke="#e4e4e4" stroke-width="0.12">RES</text>
<rect x="150.20" y="549.80" width="13.00" height="13.00" fill="#2a2a2a" rx="2" opacity="0.45" filter="url(#blur05)"/>
<rect x="150.00" y="549.00" width="13.00" height="13.00" fill="#c4c4c4" rx="2"/>
<rect x="150.20" y="565.80" width="13.00" height="13.00" fill="#2a2a2a" rx="2" opacity="0.45" filter="url(#blur05)"/>
<rect x="150.00" y="565.00" width="13.00" height="13.00" fill="#8cbaff" rx="2"/>
<text transform="translate(166.60,560.43) scale(0.85,1)" font-size="10.5" fill="#e4e4e4" font-weight="bold" text-anchor="start" letter-spacing="0.4" stroke="#e4e4e4" stroke-width="0.12">FAST</text>
<text transform="translate(166.60,576.43) scale(0.85,1)" font-size="10.5" fill="#e4e4e4" font-weight="bold" text-anchor="start" letter-spacing="0.4" stroke="#e4e4e4" stroke-width="0.12">PUNCH</text>
<circle cx="222.30" cy="564.80" r="12.6" fill="#000" opacity="0.28" filter="url(#blur1)"/>
<circle cx="222.00" cy="564.00" r="12" fill="url(#wknob)"/>
<line x1="224.40" y1="568.16" x2="227.10" y2="572.83" stroke="#0c1a2c" stroke-width="2.4"/>
<text transform="translate(239.40,568.83) scale(0.85,1)" font-size="10.5" fill="#e4e4e4" font-weight="bold" text-anchor="start" letter-spacing="0.4" stroke="#e4e4e4" stroke-width="0.12">COMP</text>
<path d="M140,778 V592.3 Q140,589.3 143,589.3 H275 Q278,589.3 278,592.3 V778 Z" fill="#c5c5c5"/>
<polygon points="147,589.3 270.5,589.3 250,610.7 168.3,610.7" fill="#b5b5b5"/>
<text transform="translate(209.00,603.99) scale(0.97,1)" font-size="11.5" fill="#585858" font-weight="bold" text-anchor="middle" letter-spacing="0.3" stroke="#585858" stroke-width="0.12">SNARE</text>
<circle cx="162.30" cy="633.80" r="12.6" fill="#000" opacity="0.28" filter="url(#blur1)"/>
<circle cx="162.00" cy="633.00" r="12" fill="url(#wknob)"/>
<line x1="163.24" y1="628.36" x2="164.64" y2="623.15" stroke="#0c1a2c" stroke-width="2.4"/>
<text transform="translate(162.00,658.83) scale(0.85,1)" font-size="10.5" fill="#1e1e1e" font-weight="bold" text-anchor="middle" letter-spacing="0.4" stroke="#1e1e1e" stroke-width="0.12">PAN</text>
<rect x="210.70" y="621.30" width="24.60" height="24.60" fill="#000" rx="2" opacity="0.35" filter="url(#blur1)"/>
<rect x="211.00" y="621.00" width="24.00" height="24.00" fill="url(#lbtn)" rx="2"/>
<rect x="240.70" y="621.30" width="24.60" height="24.60" fill="#000" rx="2" opacity="0.35" filter="url(#blur1)"/>
<rect x="241.00" y="621.00" width="24.00" height="24.00" fill="url(#lbtn)" rx="2"/>
<text x="223.00" y="637.01" font-size="11" fill="#222" font-weight="bold" text-anchor="middle" stroke="#222" stroke-width="0.12">M</text>
<text x="253.00" y="637.01" font-size="11" fill="#222" font-weight="bold" text-anchor="middle" stroke="#222" stroke-width="0.12">S</text>
<path d="M200,661.5 V654.5 H208" fill="none" stroke="#a8a8a8" stroke-width="1.6"/>
<path d="M200.5,760 V768.5 H209" fill="none" stroke="#a8a8a8" stroke-width="1.6"/>
<text x="201.30" y="678.04" font-size="10" fill="#a2a2a2" font-weight="bold" text-anchor="middle" stroke="#a2a2a2" stroke-width="0.12">S</text>
<text x="201.30" y="697.09" font-size="10" fill="#a2a2a2" font-weight="bold" text-anchor="middle" stroke="#a2a2a2" stroke-width="0.12">E</text>
<text x="201.30" y="716.14" font-size="10" fill="#a2a2a2" font-weight="bold" text-anchor="middle" stroke="#a2a2a2" stroke-width="0.12">N</text>
<text x="201.30" y="735.19" font-size="10" fill="#a2a2a2" font-weight="bold" text-anchor="middle" stroke="#a2a2a2" stroke-width="0.12">D</text>
<text x="201.30" y="754.25" font-size="10" fill="#a2a2a2" font-weight="bold" text-anchor="middle" stroke="#a2a2a2" stroke-width="0.12">S</text>
<circle cx="223.30" cy="667.80" r="12.6" fill="#000" opacity="0.28" filter="url(#blur1)"/>
<circle cx="223.00" cy="667.00" r="12" fill="url(#wknob)"/>
<line x1="218.65" y1="669.03" x2="213.76" y2="671.31" stroke="#0c1a2c" stroke-width="2.4"/>
<text transform="translate(240.60,670.83) scale(0.85,1)" font-size="10.5" fill="#1e1e1e" font-weight="bold" text-anchor="start" letter-spacing="0.4" stroke="#1e1e1e" stroke-width="0.12">REV A</text>
<circle cx="223.30" cy="697.80" r="12.6" fill="#000" opacity="0.28" filter="url(#blur1)"/>
<circle cx="223.00" cy="697.00" r="12" fill="url(#wknob)"/>
<line x1="220.60" y1="701.16" x2="217.90" y2="705.83" stroke="#0c1a2c" stroke-width="2.4"/>
<text transform="translate(240.60,700.83) scale(0.85,1)" font-size="10.5" fill="#1e1e1e" font-weight="bold" text-anchor="start" letter-spacing="0.4" stroke="#1e1e1e" stroke-width="0.12">REV B</text>
<circle cx="223.30" cy="727.80" r="12.6" fill="#000" opacity="0.28" filter="url(#blur1)"/>
<circle cx="223.00" cy="727.00" r="12" fill="url(#wknob)"/>
<line x1="220.60" y1="731.16" x2="217.90" y2="735.83" stroke="#0c1a2c" stroke-width="2.4"/>
<text transform="translate(240.60,730.83) scale(0.85,1)" font-size="10.5" fill="#1e1e1e" font-weight="bold" text-anchor="start" letter-spacing="0.4" stroke="#1e1e1e" stroke-width="0.12">DLY A</text>
<circle cx="221.30" cy="756.80" r="12.6" fill="#000" opacity="0.28" filter="url(#blur1)"/>
<circle cx="221.00" cy="756.00" r="12" fill="url(#wknob)"/>
<line x1="218.60" y1="760.16" x2="215.90" y2="764.83" stroke="#0c1a2c" stroke-width="2.4"/>
<text transform="translate(240.60,760.83) scale(0.85,1)" font-size="10.5" fill="#1e1e1e" font-weight="bold" text-anchor="start" letter-spacing="0.4" stroke="#1e1e1e" stroke-width="0.12">DLY B</text>
<rect x="150.30" y="669.20" width="18.60" height="98.80" fill="#5e5e5e" rx="2" stroke="#555" stroke-width="0.8"/>
<rect x="180.00" y="669.20" width="3.00" height="98.80" fill="#9e9e9e"/>
<rect x="174.00" y="708.00" width="15.00" height="27.00" fill="#000" rx="2" opacity="0.3" filter="url(#blur05)"/>
<rect x="174.00" y="707.00" width="15.00" height="27.00" fill="url(#fcap)" rx="2"/>
<rect x="176.00" y="720.00" width="11.00" height="1.00" fill="#8a8a8a"/>
<path d="M280,197 V74 Q280,71 283,71 H415 Q418,71 418,74 V197 Z" fill="#c5c5c5"/>
<polygon points="287,71 410.5,71 390,92.5 308.3,92.5" fill="#b5b5b5"/>
<text transform="translate(349.00,85.89) scale(0.97,1)" font-size="11.5" fill="#585858" font-weight="bold" text-anchor="middle" letter-spacing="0.3" stroke="#585858" stroke-width="0.12">CLAP</text>
<rect x="290.00" y="103.00" width="56.00" height="24.00" fill="#585858" rx="2.5"/>
<rect x="290.00" y="103.00" width="56.00" height="1.00" fill="#4a4a4a"/>
<text transform="translate(310.50,119.94) scale(0.95,1)" font-size="13" fill="#8cb8ff" font-weight="bold" text-anchor="middle" stroke="#8cb8ff" stroke-width="0.12">D#1</text>
<circle cx="336" cy="116" r="7.1" fill="#dedede"/>
<rect x="334.8" cy="0" y="121.6" width="2.4" height="2" fill="#555"/>
<circle cx="331.40" cy="116.00" r="1.05" fill="#555"/>
<circle cx="332.75" cy="112.75" r="1.05" fill="#555"/>
<circle cx="336.00" cy="111.40" r="1.05" fill="#555"/>
<circle cx="339.25" cy="112.75" r="1.05" fill="#555"/>
<circle cx="340.60" cy="116.00" r="1.05" fill="#555"/>
<rect x="290.00" y="150.00" width="30.00" height="24.00" fill="#585858" rx="2.5"/>
<text transform="translate(305.00,167.22) scale(0.95,1)" font-size="10.2" fill="#8cb8ff" font-weight="bold" text-anchor="middle" stroke="#8cb8ff" stroke-width="0.12">1/16</text>
<rect x="327.20" y="161.60" width="5.60" height="2.40" fill="#202020"/>
<rect x="345.70" y="150.30" width="30.60" height="24.60" fill="#000" rx="2" opacity="0.35" filter="url(#blur1)"/>
<rect x="346.00" y="150.00" width="30.00" height="24.00" fill="url(#lbtn)" rx="2"/>
<rect x="381.70" y="150.30" width="30.60" height="24.60" fill="#000" rx="2" opacity="0.35" filter="url(#blur1)"/>
<rect x="382.00" y="150.00" width="30.00" height="24.00" fill="url(#lbtn)" rx="2"/>
<text transform="translate(361.00,165.65) scale(0.79,1)" font-size="10" fill="#1e1e1e" font-weight="bold" text-anchor="middle" letter-spacing="0.7" stroke="#1e1e1e" stroke-width="0.12">REP</text>
<text transform="translate(397.00,165.65) scale(0.81,1)" font-size="10" fill="#1e1e1e" font-weight="bold" text-anchor="middle" letter-spacing="0.7" stroke="#1e1e1e" stroke-width="0.12">FULL</text>
<text transform="translate(305.00,187.11) scale(0.85,1)" font-size="9.9" fill="#202020" font-weight="bold" text-anchor="middle" letter-spacing="0.6" stroke="#202020" stroke-width="0.12">RATE</text>
<rect x="280.00" y="197.00" width="138.00" height="26.00" fill="#3a3a3a"/>
<rect x="280.00" y="198.00" width="16.00" height="11.00" fill="url(#pbar)"/>
<rect x="280.00" y="210.00" width="16.00" height="11.50" fill="url(#pbar)"/>
<rect x="297.00" y="198.00" width="81.00" height="24.00" fill="url(#pbar)"/>
<rect x="379.00" y="198.00" width="19.00" height="24.00" fill="url(#pbar)"/>
<rect x="399.00" y="198.00" width="19.00" height="24.00" fill="url(#pbar)"/>
<polygon points="283.1,206 290.8,206 286.95,201.2" fill="#f0f0f0"/>
<polygon points="283.1,213 290.8,213 286.95,217.8" fill="#f0f0f0"/>
<text transform="translate(300.50,214.57) scale(0.96,1)" font-size="12" fill="#ececec" font-weight="bold" text-anchor="start" stroke="#ececec" stroke-width="0.12">Spark</text>
<path d="M382.2,206.5 L388.2,203.7 L394.2,206.5 V213.3 L388.2,216 L382.2,213.3 Z" fill="#f0f0f0"/>
<path d="M382.2,206.5 L388.2,209 L394.2,206.5 M388.2,209 V216" fill="none" stroke="#6a6a6a" stroke-width="0.8"/>
<text x="385.2" y="213.2" font-size="5.5" font-weight="bold" fill="#777" text-anchor="middle">?</text>
<text x="391.2" y="213.2" font-size="5.5" font-weight="bold" fill="#777" text-anchor="middle">?</text>
<path d="M402.2,204.6 Q402.2,204 402.8,204 H411.5 L414.4,207 V215.4 Q414.4,216 413.8,216 H402.8 Q402.2,216 402.2,215.4 Z" fill="#f0f0f0"/>
<rect x="403.40" y="205.30" width="5.80" height="2.60" fill="#6e6e6e"/>
<circle cx="410.3" cy="211.9" r="1.9" fill="#6e6e6e"/>
<rect x="280.00" y="223.00" width="138.00" height="365.00" fill="#5f5f5f"/>
<rect x="283.20" y="226.00" width="131.50" height="208.20" fill="#3f3f3f" rx="4"/>
<rect x="283.20" y="226.00" width="131.50" height="5.00" fill="url(#ishadow)" rx="4"/>
<circle cx="307.00" cy="268.00" r="12.4" fill="none" stroke="#2e2e2e" stroke-width="0.8" stroke-dasharray="64.93 100" transform="rotate(120 307.00 268.00)" opacity="0.6"/>
<path d="M302.50,275.79 A9,9 0 1 1 311.50,275.79" fill="none" stroke="#858585" stroke-width="6.4"/>
<path d="M302.50,275.79 A9,9 0 1 1 314.37,262.84" fill="none" stroke="#ff8484" stroke-width="6.4"/>
<text transform="translate(307.00,291.83) scale(0.85,1)" font-size="10.5" fill="#cacaca" font-weight="bold" text-anchor="middle" letter-spacing="0.4" stroke="#cacaca" stroke-width="0.12">GATE</text>
<circle cx="350.00" cy="268.00" r="12.4" fill="none" stroke="#2e2e2e" stroke-width="0.8" stroke-dasharray="64.93 100" transform="rotate(120 350.00 268.00)" opacity="0.6"/>
<path d="M345.50,275.79 A9,9 0 1 1 354.50,275.79" fill="none" stroke="#858585" stroke-width="6.4"/>
<path d="M345.50,275.79 A9,9 0 1 1 359.00,268.00" fill="none" stroke="#ff8484" stroke-width="6.4"/>
<text transform="translate(350.00,291.83) scale(0.85,1)" font-size="10.5" fill="#cacaca" font-weight="bold" text-anchor="middle" letter-spacing="0.4" stroke="#cacaca" stroke-width="0.12">LEVEL</text>
<circle cx="391.00" cy="268.00" r="12.4" fill="none" stroke="#2e2e2e" stroke-width="0.8" stroke-dasharray="64.93 100" transform="rotate(120 391.00 268.00)" opacity="0.6"/>
<path d="M386.50,275.79 A9,9 0 1 1 395.50,275.79" fill="none" stroke="#858585" stroke-width="6.4"/>
<path d="M386.50,275.79 A9,9 0 1 1 400.00,268.00" fill="none" stroke="#ff8484" stroke-width="6.4"/>
<text transform="translate(391.00,291.83) scale(0.85,1)" font-size="10.5" fill="#cacaca" font-weight="bold" text-anchor="middle" letter-spacing="0.4" stroke="#cacaca" stroke-width="0.12">TIME</text>
<circle cx="307.00" cy="326.00" r="12.4" fill="none" stroke="#2e2e2e" stroke-width="0.8" stroke-dasharray="64.93 100" transform="rotate(120 307.00 326.00)" opacity="0.6"/>
<path d="M302.50,333.79 A9,9 0 1 1 311.50,333.79" fill="none" stroke="#858585" stroke-width="6.4"/>
<path d="M302.50,333.79 A9,9 0 1 1 314.79,321.50" fill="none" stroke="#ff8484" stroke-width="6.4"/>
<text transform="translate(307.00,349.83) scale(0.85,1)" font-size="10.5" fill="#cacaca" font-weight="bold" text-anchor="middle" letter-spacing="0.4" stroke="#cacaca" stroke-width="0.12">CLAPS</text>
<circle cx="350.00" cy="326.00" r="12.4" fill="none" stroke="#2e2e2e" stroke-width="0.8" stroke-dasharray="64.93 100" transform="rotate(120 350.00 326.00)" opacity="0.6"/>
<path d="M345.50,333.79 A9,9 0 1 1 354.50,333.79" fill="none" stroke="#858585" stroke-width="6.4"/>
<path d="M345.50,333.79 A9,9 0 1 1 354.50,333.79" fill="none" stroke="#ff8484" stroke-width="6.4"/>
<text transform="translate(350.00,349.83) scale(0.85,1)" font-size="10.5" fill="#cacaca" font-weight="bold" text-anchor="middle" letter-spacing="0.4" stroke="#cacaca" stroke-width="0.12">NOISE</text>
<circle cx="391.00" cy="326.00" r="12.4" fill="none" stroke="#2e2e2e" stroke-width="0.8" stroke-dasharray="64.93 100" transform="rotate(120 391.00 326.00)" opacity="0.6"/>
<path d="M386.50,333.79 A9,9 0 1 1 395.50,333.79" fill="none" stroke="#858585" stroke-width="6.4"/>
<path d="M386.50,333.79 A9,9 0 1 1 399.46,329.08" fill="none" stroke="#ff8484" stroke-width="6.4"/>
<text transform="translate(391.00,349.83) scale(0.85,1)" font-size="10.5" fill="#cacaca" font-weight="bold" text-anchor="middle" letter-spacing="0.4" stroke="#cacaca" stroke-width="0.12">COLOR</text>
<circle cx="307.00" cy="384.00" r="12.4" fill="none" stroke="#2e2e2e" stroke-width="0.8" stroke-dasharray="64.93 100" transform="rotate(120 307.00 384.00)" opacity="0.6"/>
<path d="M302.50,391.79 A9,9 0 1 1 311.50,391.79" fill="none" stroke="#858585" stroke-width="6.4"/>
<path d="M302.50,391.79 A9,9 0 0 1 301.46,391.09" fill="none" stroke="#ff8484" stroke-width="6.4"/>
<text transform="translate(307.00,407.83) scale(0.85,1)" font-size="10.5" fill="#cacaca" font-weight="bold" text-anchor="middle" letter-spacing="0.4" stroke="#cacaca" stroke-width="0.12">LOW</text>
<circle cx="350.00" cy="384.00" r="12.4" fill="none" stroke="#2e2e2e" stroke-width="0.8" stroke-dasharray="64.93 100" transform="rotate(120 350.00 384.00)" opacity="0.6"/>
<path d="M345.50,391.79 A9,9 0 1 1 354.50,391.79" fill="none" stroke="#858585" stroke-width="6.4"/>
<text transform="translate(350.00,407.83) scale(0.85,1)" font-size="10.5" fill="#cacaca" font-weight="bold" text-anchor="middle" letter-spacing="0.4" stroke="#cacaca" stroke-width="0.12">MID</text>
<circle cx="391.00" cy="384.00" r="12.4" fill="none" stroke="#2e2e2e" stroke-width="0.8" stroke-dasharray="64.93 100" transform="rotate(120 391.00 384.00)" opacity="0.6"/>
<path d="M386.50,391.79 A9,9 0 1 1 395.50,391.79" fill="none" stroke="#858585" stroke-width="6.4"/>
<path d="M386.50,391.79 A9,9 0 1 1 399.97,383.22" fill="none" stroke="#ff8484" stroke-width="6.4"/>
<text transform="translate(391.00,407.83) scale(0.85,1)" font-size="10.5" fill="#cacaca" font-weight="bold" text-anchor="middle" letter-spacing="0.4" stroke="#cacaca" stroke-width="0.12">HIGH</text>
<path d="M338,251.5 V245.5 H363" fill="none" stroke="#cfcfcf" stroke-width="1.3"/>
<text transform="translate(402.30,251.95) scale(0.92,1)" font-size="10" fill="#cfcfcf" font-weight="bold" text-anchor="end" font-style="italic" stroke="#cfcfcf" stroke-width="0.12">SPREAD</text>
<path d="M295,367.5 V361.5 H387" fill="none" stroke="#cfcfcf" stroke-width="1.3"/>
<text transform="translate(403.40,367.94) scale(0.92,1)" font-size="10" fill="#cfcfcf" font-weight="bold" text-anchor="end" font-style="italic" stroke="#cfcfcf" stroke-width="0.12">EQ</text>
<text transform="translate(349.30,424.83) scale(0.88,1)" font-size="10.5" fill="#ff8484" font-weight="bold" text-anchor="middle" stroke="#ff8484" stroke-width="0.12">NOISE OSC</text>
<rect x="280.00" y="494.00" width="138.00" height="1.00" fill="#4d4d4d"/>
<rect x="280.00" y="543.00" width="138.00" height="1.00" fill="#4d4d4d"/>
<rect x="290.20" y="444.80" width="13.00" height="13.00" fill="#2a2a2a" rx="2" opacity="0.45" filter="url(#blur05)"/>
<rect x="290.00" y="444.00" width="13.00" height="13.00" fill="#8cbaff" rx="2"/>
<text transform="translate(306.60,455.23) scale(0.85,1)" font-size="10.5" fill="#e2e2e2" font-weight="bold" text-anchor="start" letter-spacing="0.4" stroke="#e2e2e2" stroke-width="0.12">DSRT</text>
<rect x="290.20" y="460.80" width="13.00" height="13.00" fill="#2a2a2a" rx="2" opacity="0.45" filter="url(#blur05)"/>
<rect x="290.00" y="460.00" width="13.00" height="13.00" fill="#8cbaff" rx="2"/>
<text transform="translate(306.60,471.23) scale(0.85,1)" font-size="10.5" fill="#e2e2e2" font-weight="bold" text-anchor="start" letter-spacing="0.4" stroke="#e2e2e2" stroke-width="0.12">BIT</text>
<rect x="290.20" y="476.80" width="13.00" height="13.00" fill="#2a2a2a" rx="2" opacity="0.45" filter="url(#blur05)"/>
<rect x="290.00" y="476.00" width="13.00" height="13.00" fill="#c4c4c4" rx="2"/>
<text transform="translate(306.60,487.23) scale(0.85,1)" font-size="10.5" fill="#8cbaff" font-weight="bold" text-anchor="start" letter-spacing="0.4" stroke="#8cbaff" stroke-width="0.12">DECI</text>
<path d="M333.5,452 H341.6 L348.8,459.3" fill="none" stroke="#8c8c8c" stroke-width="1.6"/>
<path d="M333.5,467 H346.8" fill="none" stroke="#8c8c8c" stroke-width="1.6"/>
<path d="M333.5,482 H341.6 L348.8,474.6" fill="none" stroke="#7fb4ff" stroke-width="2"/>
<circle cx="362.30" cy="467.80" r="12.6" fill="#000" opacity="0.28" filter="url(#blur1)"/>
<circle cx="362.00" cy="467.00" r="12" fill="url(#wknob)"/>
<line x1="359.25" y1="470.93" x2="356.15" y2="475.36" stroke="#0c1a2c" stroke-width="2.4"/>
<text transform="translate(379.90,471.83) scale(0.85,1)" font-size="10.5" fill="#e4e4e4" font-weight="bold" text-anchor="start" letter-spacing="0.4" stroke="#e4e4e4" stroke-width="0.12">AMNT</text>
<rect x="289.70" y="500.30" width="24.60" height="24.60" fill="#000" rx="2" opacity="0.35" filter="url(#blur1)"/>
<rect x="290.00" y="500.00" width="24.00" height="24.00" fill="url(#lbtn)" rx="2"/>
<text transform="translate(302.00,515.83) scale(0.9,1)" font-size="10.5" fill="#111" font-weight="bold" text-anchor="middle" stroke="#111" stroke-width="0.12">HP</text>
<circle cx="362.30" cy="512.80" r="12.6" fill="#000" opacity="0.28" filter="url(#blur1)"/>
<circle cx="362.00" cy="512.00" r="12" fill="url(#wknob)"/>
<line x1="358.61" y1="508.61" x2="354.79" y2="504.79" stroke="#0c1a2c" stroke-width="2.4"/>
<circle cx="396.30" cy="512.80" r="12.6" fill="#000" opacity="0.28" filter="url(#blur1)"/>
<circle cx="396.00" cy="512.00" r="12" fill="url(#wknob)"/>
<line x1="396.00" y1="507.20" x2="396.00" y2="501.80" stroke="#0c1a2c" stroke-width="2.4"/>
<text transform="translate(302.60,538.83) scale(0.85,1)" font-size="10.5" fill="#e4e4e4" font-weight="bold" text-anchor="middle" letter-spacing="0.4" stroke="#e4e4e4" stroke-width="0.12">TYPE</text>
<text transform="translate(362.00,538.83) scale(0.85,1)" font-size="10.5" fill="#e4e4e4" font-weight="bold" text-anchor="middle" letter-spacing="0.4" stroke="#e4e4e4" stroke-width="0.12">CUT</text>
<text transform="translate(396.00,538.83) scale(0.85,1)" font-size="10.5" fill="#e4e4e4" font-weight="bold" text-anchor="middle" letter-spacing="0.4" stroke="#e4e4e4" stroke-width="0.12">RES</text>
<rect x="290.20" y="549.80" width="13.00" height="13.00" fill="#2a2a2a" rx="2" opacity="0.45" filter="url(#blur05)"/>
<rect x="290.00" y="549.00" width="13.00" height="13.00" fill="#c4c4c4" rx="2"/>
<rect x="290.20" y="565.80" width="13.00" height="13.00" fill="#2a2a2a" rx="2" opacity="0.45" filter="url(#blur05)"/>
<rect x="290.00" y="565.00" width="13.00" height="13.00" fill="#8cbaff" rx="2"/>
<text transform="translate(306.60,560.43) scale(0.85,1)" font-size="10.5" fill="#e4e4e4" font-weight="bold" text-anchor="start" letter-spacing="0.4" stroke="#e4e4e4" stroke-width="0.12">FAST</text>
<text transform="translate(306.60,576.43) scale(0.85,1)" font-size="10.5" fill="#e4e4e4" font-weight="bold" text-anchor="start" letter-spacing="0.4" stroke="#e4e4e4" stroke-width="0.12">PUNCH</text>
<circle cx="362.30" cy="564.80" r="12.6" fill="#000" opacity="0.28" filter="url(#blur1)"/>
<circle cx="362.00" cy="564.00" r="12" fill="url(#wknob)"/>
<line x1="364.40" y1="568.16" x2="367.10" y2="572.83" stroke="#0c1a2c" stroke-width="2.4"/>
<text transform="translate(379.40,568.83) scale(0.85,1)" font-size="10.5" fill="#e4e4e4" font-weight="bold" text-anchor="start" letter-spacing="0.4" stroke="#e4e4e4" stroke-width="0.12">COMP</text>
<path d="M280,778 V592.3 Q280,589.3 283,589.3 H415 Q418,589.3 418,592.3 V778 Z" fill="#c5c5c5"/>
<polygon points="287,589.3 410.5,589.3 390,610.7 308.3,610.7" fill="#b5b5b5"/>
<text transform="translate(349.00,603.99) scale(0.97,1)" font-size="11.5" fill="#585858" font-weight="bold" text-anchor="middle" letter-spacing="0.3" stroke="#585858" stroke-width="0.12">CLAP</text>
<circle cx="302.30" cy="633.80" r="12.6" fill="#000" opacity="0.28" filter="url(#blur1)"/>
<circle cx="302.00" cy="633.00" r="12" fill="url(#wknob)"/>
<line x1="300.76" y1="628.36" x2="299.36" y2="623.15" stroke="#0c1a2c" stroke-width="2.4"/>
<text transform="translate(302.00,658.83) scale(0.85,1)" font-size="10.5" fill="#1e1e1e" font-weight="bold" text-anchor="middle" letter-spacing="0.4" stroke="#1e1e1e" stroke-width="0.12">PAN</text>
<rect x="350.70" y="621.30" width="24.60" height="24.60" fill="#000" rx="2" opacity="0.35" filter="url(#blur1)"/>
<rect x="351.00" y="621.00" width="24.00" height="24.00" fill="url(#lbtn)" rx="2"/>
<rect x="380.70" y="621.30" width="24.60" height="24.60" fill="#000" rx="2" opacity="0.35" filter="url(#blur1)"/>
<rect x="381.00" y="621.00" width="24.00" height="24.00" fill="url(#lbtn)" rx="2"/>
<text x="363.00" y="637.01" font-size="11" fill="#222" font-weight="bold" text-anchor="middle" stroke="#222" stroke-width="0.12">M</text>
<text x="393.00" y="637.01" font-size="11" fill="#222" font-weight="bold" text-anchor="middle" stroke="#222" stroke-width="0.12">S</text>
<path d="M340,661.5 V654.5 H348" fill="none" stroke="#a8a8a8" stroke-width="1.6"/>
<path d="M340.5,760 V768.5 H349" fill="none" stroke="#a8a8a8" stroke-width="1.6"/>
<text x="341.30" y="678.04" font-size="10" fill="#a2a2a2" font-weight="bold" text-anchor="middle" stroke="#a2a2a2" stroke-width="0.12">S</text>
<text x="341.30" y="697.09" font-size="10" fill="#a2a2a2" font-weight="bold" text-anchor="middle" stroke="#a2a2a2" stroke-width="0.12">E</text>
<text x="341.30" y="716.14" font-size="10" fill="#a2a2a2" font-weight="bold" text-anchor="middle" stroke="#a2a2a2" stroke-width="0.12">N</text>
<text x="341.30" y="735.19" font-size="10" fill="#a2a2a2" font-weight="bold" text-anchor="middle" stroke="#a2a2a2" stroke-width="0.12">D</text>
<text x="341.30" y="754.25" font-size="10" fill="#a2a2a2" font-weight="bold" text-anchor="middle" stroke="#a2a2a2" stroke-width="0.12">S</text>
<circle cx="363.30" cy="667.80" r="12.6" fill="#000" opacity="0.28" filter="url(#blur1)"/>
<circle cx="363.00" cy="667.00" r="12" fill="url(#wknob)"/>
<line x1="359.07" y1="664.25" x2="354.64" y2="661.15" stroke="#0c1a2c" stroke-width="2.4"/>
<text transform="translate(380.60,670.83) scale(0.85,1)" font-size="10.5" fill="#1e1e1e" font-weight="bold" text-anchor="start" letter-spacing="0.4" stroke="#1e1e1e" stroke-width="0.12">REV A</text>
<circle cx="363.30" cy="697.80" r="12.6" fill="#000" opacity="0.28" filter="url(#blur1)"/>
<circle cx="363.00" cy="697.00" r="12" fill="url(#wknob)"/>
<line x1="360.60" y1="701.16" x2="357.90" y2="705.83" stroke="#0c1a2c" stroke-width="2.4"/>
<text transform="translate(380.60,700.83) scale(0.85,1)" font-size="10.5" fill="#1e1e1e" font-weight="bold" text-anchor="start" letter-spacing="0.4" stroke="#1e1e1e" stroke-width="0.12">REV B</text>
<circle cx="363.30" cy="727.80" r="12.6" fill="#000" opacity="0.28" filter="url(#blur1)"/>
<circle cx="363.00" cy="727.00" r="12" fill="url(#wknob)"/>
<line x1="360.60" y1="731.16" x2="357.90" y2="735.83" stroke="#0c1a2c" stroke-width="2.4"/>
<text transform="translate(380.60,730.83) scale(0.85,1)" font-size="10.5" fill="#1e1e1e" font-weight="bold" text-anchor="start" letter-spacing="0.4" stroke="#1e1e1e" stroke-width="0.12">DLY A</text>
<circle cx="361.30" cy="756.80" r="12.6" fill="#000" opacity="0.28" filter="url(#blur1)"/>
<circle cx="361.00" cy="756.00" r="12" fill="url(#wknob)"/>
<line x1="358.60" y1="760.16" x2="355.90" y2="764.83" stroke="#0c1a2c" stroke-width="2.4"/>
<text transform="translate(380.60,760.83) scale(0.85,1)" font-size="10.5" fill="#1e1e1e" font-weight="bold" text-anchor="start" letter-spacing="0.4" stroke="#1e1e1e" stroke-width="0.12">DLY B</text>
<rect x="290.30" y="669.20" width="18.60" height="98.80" fill="#5e5e5e" rx="2" stroke="#555" stroke-width="0.8"/>
<rect x="320.00" y="669.20" width="3.00" height="98.80" fill="#9e9e9e"/>
<rect x="314.00" y="715.80" width="15.00" height="27.00" fill="#000" rx="2" opacity="0.3" filter="url(#blur05)"/>
<rect x="314.00" y="714.80" width="15.00" height="27.00" fill="url(#fcap)" rx="2"/>
<rect x="316.00" y="727.80" width="11.00" height="1.00" fill="#8a8a8a"/>
<path d="M420,197 V74 Q420,71 423,71 H555 Q558,71 558,74 V197 Z" fill="#c5c5c5"/>
<polygon points="427,71 550.5,71 530,92.5 448.3,92.5" fill="#b5b5b5"/>
<text transform="translate(489.00,85.89) scale(0.97,1)" font-size="11.5" fill="#585858" font-weight="bold" text-anchor="middle" letter-spacing="0.3" stroke="#585858" stroke-width="0.12">HATS</text>
<rect x="430.00" y="103.00" width="56.00" height="24.00" fill="#585858" rx="2.5"/>
<rect x="430.00" y="103.00" width="56.00" height="1.00" fill="#4a4a4a"/>
<text transform="translate(450.50,119.94) scale(0.95,1)" font-size="13" fill="#8cb8ff" font-weight="bold" text-anchor="middle" stroke="#8cb8ff" stroke-width="0.12">F#1</text>
<circle cx="476" cy="116" r="7.1" fill="#dedede"/>
<rect x="474.8" cy="0" y="121.6" width="2.4" height="2" fill="#555"/>
<circle cx="471.40" cy="116.00" r="1.05" fill="#555"/>
<circle cx="472.75" cy="112.75" r="1.05" fill="#555"/>
<circle cx="476.00" cy="111.40" r="1.05" fill="#555"/>
<circle cx="479.25" cy="112.75" r="1.05" fill="#555"/>
<circle cx="480.60" cy="116.00" r="1.05" fill="#555"/>
<rect x="492.00" y="103.00" width="56.00" height="24.00" fill="#585858" rx="2.5"/>
<rect x="492.00" y="103.00" width="56.00" height="1.00" fill="#4a4a4a"/>
<text transform="translate(512.50,119.94) scale(0.95,1)" font-size="13" fill="#8cb8ff" font-weight="bold" text-anchor="middle" stroke="#8cb8ff" stroke-width="0.12">A#1</text>
<circle cx="538" cy="116" r="7.1" fill="#dedede"/>
<rect x="536.8" cy="0" y="121.6" width="2.4" height="2" fill="#555"/>
<circle cx="533.40" cy="116.00" r="1.05" fill="#555"/>
<circle cx="534.75" cy="112.75" r="1.05" fill="#555"/>
<circle cx="538.00" cy="111.40" r="1.05" fill="#555"/>
<circle cx="541.25" cy="112.75" r="1.05" fill="#555"/>
<circle cx="542.60" cy="116.00" r="1.05" fill="#555"/>
<text transform="translate(458.00,139.01) scale(0.85,1)" font-size="9.9" fill="#202020" font-weight="bold" text-anchor="middle" letter-spacing="0.6" stroke="#202020" stroke-width="0.12">CLOSED</text>
<text transform="translate(520.00,139.01) scale(0.85,1)" font-size="9.9" fill="#202020" font-weight="bold" text-anchor="middle" letter-spacing="0.6" stroke="#202020" stroke-width="0.12">OPEN</text>
<rect x="430.00" y="150.00" width="30.00" height="24.00" fill="#585858" rx="2.5"/>
<text transform="translate(445.00,167.22) scale(0.95,1)" font-size="10.2" fill="#8cb8ff" font-weight="bold" text-anchor="middle" stroke="#8cb8ff" stroke-width="0.12">1/16</text>
<rect x="467.20" y="161.60" width="5.60" height="2.40" fill="#202020"/>
<rect x="485.70" y="150.30" width="30.60" height="24.60" fill="#000" rx="2" opacity="0.35" filter="url(#blur1)"/>
<rect x="486.00" y="150.00" width="30.00" height="24.00" fill="url(#lbtn)" rx="2"/>
<rect x="521.70" y="150.30" width="30.60" height="24.60" fill="#000" rx="2" opacity="0.35" filter="url(#blur1)"/>
<rect x="522.00" y="150.00" width="30.00" height="24.00" fill="url(#lbtn)" rx="2"/>
<text transform="translate(501.00,165.65) scale(0.79,1)" font-size="10" fill="#1e1e1e" font-weight="bold" text-anchor="middle" letter-spacing="0.7" stroke="#1e1e1e" stroke-width="0.12">REP</text>
<text transform="translate(537.00,165.65) scale(0.81,1)" font-size="10" fill="#1e1e1e" font-weight="bold" text-anchor="middle" letter-spacing="0.7" stroke="#1e1e1e" stroke-width="0.12">FULL</text>
<text transform="translate(445.00,187.11) scale(0.85,1)" font-size="9.9" fill="#202020" font-weight="bold" text-anchor="middle" letter-spacing="0.6" stroke="#202020" stroke-width="0.12">RATE</text>
<rect x="420.00" y="197.00" width="138.00" height="26.00" fill="#3a3a3a"/>
<rect x="420.00" y="198.00" width="16.00" height="11.00" fill="url(#pbar)"/>
<rect x="420.00" y="210.00" width="16.00" height="11.50" fill="url(#pbar)"/>
<rect x="437.00" y="198.00" width="81.00" height="24.00" fill="url(#pbar)"/>
<rect x="519.00" y="198.00" width="19.00" height="24.00" fill="url(#pbar)"/>
<rect x="539.00" y="198.00" width="19.00" height="24.00" fill="url(#pbar)"/>
<polygon points="423.1,206 430.8,206 426.95,201.2" fill="#f0f0f0"/>
<polygon points="423.1,213 430.8,213 426.95,217.8" fill="#f0f0f0"/>
<text transform="translate(440.50,214.57) scale(0.96,1)" font-size="12" fill="#ececec" font-weight="bold" text-anchor="start" stroke="#ececec" stroke-width="0.12">Oscillator</text>
<path d="M522.2,206.5 L528.2,203.7 L534.2,206.5 V213.3 L528.2,216 L522.2,213.3 Z" fill="#f0f0f0"/>
<path d="M522.2,206.5 L528.2,209 L534.2,206.5 M528.2,209 V216" fill="none" stroke="#6a6a6a" stroke-width="0.8"/>
<text x="525.2" y="213.2" font-size="5.5" font-weight="bold" fill="#777" text-anchor="middle">?</text>
<text x="531.2" y="213.2" font-size="5.5" font-weight="bold" fill="#777" text-anchor="middle">?</text>
<path d="M542.2,204.6 Q542.2,204 542.8000000000001,204 H551.5 L554.4000000000001,207 V215.4 Q554.4000000000001,216 553.8000000000001,216 H542.8000000000001 Q542.2,216 542.2,215.4 Z" fill="#f0f0f0"/>
<rect x="543.40" y="205.30" width="5.80" height="2.60" fill="#6e6e6e"/>
<circle cx="550.3000000000001" cy="211.9" r="1.9" fill="#6e6e6e"/>
<rect x="420.00" y="223.00" width="138.00" height="365.00" fill="#5f5f5f"/>
<rect x="423.20" y="226.00" width="131.50" height="208.20" fill="#3f3f3f" rx="4"/>
<rect x="423.20" y="226.00" width="131.50" height="5.00" fill="url(#ishadow)" rx="4"/>
<circle cx="447.00" cy="268.00" r="12.4" fill="none" stroke="#2e2e2e" stroke-width="0.8" stroke-dasharray="64.93 100" transform="rotate(120 447.00 268.00)" opacity="0.6"/>
<path d="M442.50,275.79 A9,9 0 1 1 451.50,275.79" fill="none" stroke="#858585" stroke-width="6.4"/>
<path d="M442.50,275.79 A9,9 0 1 1 451.50,275.79" fill="none" stroke="#ff8484" stroke-width="6.4"/>
<text transform="translate(447.00,291.83) scale(0.85,1)" font-size="10.5" fill="#cacaca" font-weight="bold" text-anchor="middle" letter-spacing="0.4" stroke="#cacaca" stroke-width="0.12">COLOR</text>
<circle cx="490.00" cy="268.00" r="12.4" fill="none" stroke="#2e2e2e" stroke-width="0.8" stroke-dasharray="64.93 100" transform="rotate(120 490.00 268.00)" opacity="0.6"/>
<path d="M485.50,275.79 A9,9 0 1 1 494.50,275.79" fill="none" stroke="#858585" stroke-width="6.4"/>
<path d="M490.00,259.00 A9,9 0 0 1 498.97,268.78" fill="none" stroke="#ff8484" stroke-width="6.4"/>
<text transform="translate(490.00,291.83) scale(0.85,1)" font-size="10.5" fill="#cacaca" font-weight="bold" text-anchor="middle" letter-spacing="0.4" stroke="#cacaca" stroke-width="0.12">MIX</text>
<circle cx="531.00" cy="268.00" r="12.4" fill="none" stroke="#2e2e2e" stroke-width="0.8" stroke-dasharray="64.93 100" transform="rotate(120 531.00 268.00)" opacity="0.6"/>
<path d="M526.50,275.79 A9,9 0 1 1 535.50,275.79" fill="none" stroke="#858585" stroke-width="6.4"/>
<path d="M526.50,275.79 A9,9 0 1 1 538.79,263.50" fill="none" stroke="#ff8484" stroke-width="6.4"/>
<text transform="translate(531.00,291.83) scale(0.85,1)" font-size="10.5" fill="#cacaca" font-weight="bold" text-anchor="middle" letter-spacing="0.4" stroke="#cacaca" stroke-width="0.12">PITCH</text>
<circle cx="447.00" cy="326.00" r="12.4" fill="none" stroke="#2e2e2e" stroke-width="0.8" stroke-dasharray="64.93 100" transform="rotate(120 447.00 326.00)" opacity="0.6"/>
<path d="M442.50,333.79 A9,9 0 1 1 451.50,333.79" fill="none" stroke="#858585" stroke-width="6.4"/>
<path d="M442.50,333.79 A9,9 0 0 1 438.31,323.67" fill="none" stroke="#ff8484" stroke-width="6.4"/>
<text transform="translate(447.00,349.83) scale(0.85,1)" font-size="10.5" fill="#cacaca" font-weight="bold" text-anchor="middle" letter-spacing="0.4" stroke="#cacaca" stroke-width="0.12">CH.DEC</text>
<circle cx="490.00" cy="326.00" r="12.4" fill="none" stroke="#2e2e2e" stroke-width="0.8" stroke-dasharray="64.93 100" transform="rotate(120 490.00 326.00)" opacity="0.6"/>
<path d="M485.50,333.79 A9,9 0 1 1 494.50,333.79" fill="none" stroke="#858585" stroke-width="6.4"/>
<path d="M485.50,333.79 A9,9 0 0 1 481.03,326.78" fill="none" stroke="#ff8484" stroke-width="6.4"/>
<text transform="translate(490.00,349.83) scale(0.85,1)" font-size="10.5" fill="#cacaca" font-weight="bold" text-anchor="middle" letter-spacing="0.4" stroke="#cacaca" stroke-width="0.12">OH.DEC</text>
<circle cx="531.00" cy="326.00" r="12.4" fill="none" stroke="#2e2e2e" stroke-width="0.8" stroke-dasharray="64.93 100" transform="rotate(120 531.00 326.00)" opacity="0.6"/>
<path d="M526.50,333.79 A9,9 0 1 1 535.50,333.79" fill="none" stroke="#858585" stroke-width="6.4"/>
<path d="M526.50,333.79 A9,9 0 0 1 522.54,322.92" fill="none" stroke="#ff8484" stroke-width="6.4"/>
<text transform="translate(531.00,349.83) scale(0.85,1)" font-size="10.5" fill="#cacaca" font-weight="bold" text-anchor="middle" letter-spacing="0.4" stroke="#cacaca" stroke-width="0.12">CURVE</text>
<circle cx="447.00" cy="384.00" r="12.4" fill="none" stroke="#2e2e2e" stroke-width="0.8" stroke-dasharray="64.93 100" transform="rotate(120 447.00 384.00)" opacity="0.6"/>
<path d="M442.50,391.79 A9,9 0 1 1 451.50,391.79" fill="none" stroke="#858585" stroke-width="6.4"/>
<path d="M442.50,391.79 A9,9 0 0 1 449.33,375.31" fill="none" stroke="#ff8484" stroke-width="6.4"/>
<text transform="translate(447.00,407.83) scale(0.85,1)" font-size="10.5" fill="#cacaca" font-weight="bold" text-anchor="middle" letter-spacing="0.4" stroke="#cacaca" stroke-width="0.12">HPF</text>
<circle cx="490.00" cy="384.00" r="12.4" fill="none" stroke="#2e2e2e" stroke-width="0.8" stroke-dasharray="64.93 100" transform="rotate(120 490.00 384.00)" opacity="0.6"/>
<path d="M485.50,391.79 A9,9 0 1 1 494.50,391.79" fill="none" stroke="#858585" stroke-width="6.4"/>
<path d="M485.50,391.79 A9,9 0 1 1 498.97,383.22" fill="none" stroke="#ff8484" stroke-width="6.4"/>
<text transform="translate(490.00,407.83) scale(0.85,1)" font-size="10.5" fill="#cacaca" font-weight="bold" text-anchor="middle" letter-spacing="0.4" stroke="#cacaca" stroke-width="0.12">FREQ</text>
<circle cx="531.00" cy="384.00" r="12.4" fill="none" stroke="#2e2e2e" stroke-width="0.8" stroke-dasharray="64.93 100" transform="rotate(120 531.00 384.00)" opacity="0.6"/>
<path d="M526.50,391.79 A9,9 0 1 1 535.50,391.79" fill="none" stroke="#858585" stroke-width="6.4"/>
<path d="M526.50,391.79 A9,9 0 1 1 535.50,391.79" fill="none" stroke="#ff8484" stroke-width="6.4"/>
<text transform="translate(531.00,407.83) scale(0.85,1)" font-size="10.5" fill="#cacaca" font-weight="bold" text-anchor="middle" letter-spacing="0.4" stroke="#cacaca" stroke-width="0.12">MIX</text>
<text transform="translate(433.00,251.95) scale(0.92,1)" font-size="10" fill="#cfcfcf" font-weight="bold" text-anchor="start" font-style="italic" stroke="#cfcfcf" stroke-width="0.12">NOISE</text>
<path d="M470,245.5 H516.7" fill="none" stroke="#cfcfcf" stroke-width="1.3"/>
<text transform="translate(542.30,251.95) scale(0.92,1)" font-size="10" fill="#cfcfcf" font-weight="bold" text-anchor="end" font-style="italic" stroke="#cfcfcf" stroke-width="0.12">OSC</text>
<path d="M470,367.5 V361.5 H503" fill="none" stroke="#cfcfcf" stroke-width="1.3"/>
<text transform="translate(546.20,367.94) scale(0.92,1)" font-size="10" fill="#cfcfcf" font-weight="bold" text-anchor="end" font-style="italic" stroke="#cfcfcf" stroke-width="0.12">TIMBRE</text>
<text transform="translate(489.30,424.83) scale(0.88,1)" font-size="10.5" fill="#ff8484" font-weight="bold" text-anchor="middle" stroke="#ff8484" stroke-width="0.12">NOISE OSC</text>
<rect x="420.00" y="494.00" width="138.00" height="1.00" fill="#4d4d4d"/>
<rect x="420.00" y="543.00" width="138.00" height="1.00" fill="#4d4d4d"/>
<rect x="430.20" y="444.80" width="13.00" height="13.00" fill="#2a2a2a" rx="2" opacity="0.45" filter="url(#blur05)"/>
<rect x="430.00" y="444.00" width="13.00" height="13.00" fill="#c4c4c4" rx="2"/>
<text transform="translate(446.60,455.23) scale(0.85,1)" font-size="10.5" fill="#8cbaff" font-weight="bold" text-anchor="start" letter-spacing="0.4" stroke="#8cbaff" stroke-width="0.12">DSRT</text>
<rect x="430.20" y="460.80" width="13.00" height="13.00" fill="#2a2a2a" rx="2" opacity="0.45" filter="url(#blur05)"/>
<rect x="430.00" y="460.00" width="13.00" height="13.00" fill="#c4c4c4" rx="2"/>
<text transform="translate(446.60,471.23) scale(0.85,1)" font-size="10.5" fill="#e2e2e2" font-weight="bold" text-anchor="start" letter-spacing="0.4" stroke="#e2e2e2" stroke-width="0.12">BIT</text>
<rect x="430.20" y="476.80" width="13.00" height="13.00" fill="#2a2a2a" rx="2" opacity="0.45" filter="url(#blur05)"/>
<rect x="430.00" y="476.00" width="13.00" height="13.00" fill="#c4c4c4" rx="2"/>
<text transform="translate(446.60,487.23) scale(0.85,1)" font-size="10.5" fill="#e2e2e2" font-weight="bold" text-anchor="start" letter-spacing="0.4" stroke="#e2e2e2" stroke-width="0.12">DECI</text>
<path d="M473.5,467 H486.8" fill="none" stroke="#8c8c8c" stroke-width="1.6"/>
<path d="M473.5,482 H481.6 L488.8,474.6" fill="none" stroke="#8c8c8c" stroke-width="1.6"/>
<path d="M473.5,452 H481.6 L488.8,459.3" fill="none" stroke="#7fb4ff" stroke-width="2"/>
<circle cx="502.30" cy="467.80" r="12.6" fill="#000" opacity="0.28" filter="url(#blur1)"/>
<circle cx="502.00" cy="467.00" r="12" fill="url(#wknob)"/>
<line x1="497.20" y1="467.00" x2="491.80" y2="467.00" stroke="#0c1a2c" stroke-width="2.4"/>
<text transform="translate(519.90,471.83) scale(0.85,1)" font-size="10.5" fill="#e4e4e4" font-weight="bold" text-anchor="start" letter-spacing="0.4" stroke="#e4e4e4" stroke-width="0.12">AMNT</text>
<rect x="429.70" y="500.30" width="24.60" height="24.60" fill="#000" rx="2" opacity="0.35" filter="url(#blur1)"/>
<rect x="430.00" y="500.00" width="24.00" height="24.00" fill="url(#lbtn)" rx="2"/>
<text transform="translate(442.00,515.83) scale(0.9,1)" font-size="10.5" fill="#111" font-weight="bold" text-anchor="middle" stroke="#111" stroke-width="0.12">HP</text>
<circle cx="502.30" cy="512.80" r="12.6" fill="#000" opacity="0.28" filter="url(#blur1)"/>
<circle cx="502.00" cy="512.00" r="12" fill="url(#wknob)"/>
<line x1="505.09" y1="508.32" x2="508.56" y2="504.19" stroke="#0c1a2c" stroke-width="2.4"/>
<circle cx="536.30" cy="512.80" r="12.6" fill="#000" opacity="0.28" filter="url(#blur1)"/>
<circle cx="536.00" cy="512.00" r="12" fill="url(#wknob)"/>
<line x1="533.25" y1="515.93" x2="530.15" y2="520.36" stroke="#0c1a2c" stroke-width="2.4"/>
<text transform="translate(442.60,538.83) scale(0.85,1)" font-size="10.5" fill="#e4e4e4" font-weight="bold" text-anchor="middle" letter-spacing="0.4" stroke="#e4e4e4" stroke-width="0.12">TYPE</text>
<text transform="translate(502.00,538.83) scale(0.85,1)" font-size="10.5" fill="#e4e4e4" font-weight="bold" text-anchor="middle" letter-spacing="0.4" stroke="#e4e4e4" stroke-width="0.12">CUT</text>
<text transform="translate(536.00,538.83) scale(0.85,1)" font-size="10.5" fill="#e4e4e4" font-weight="bold" text-anchor="middle" letter-spacing="0.4" stroke="#e4e4e4" stroke-width="0.12">RES</text>
<rect x="430.20" y="549.80" width="13.00" height="13.00" fill="#2a2a2a" rx="2" opacity="0.45" filter="url(#blur05)"/>
<rect x="430.00" y="549.00" width="13.00" height="13.00" fill="#8cbaff" rx="2"/>
<rect x="430.20" y="565.80" width="13.00" height="13.00" fill="#2a2a2a" rx="2" opacity="0.45" filter="url(#blur05)"/>
<rect x="430.00" y="565.00" width="13.00" height="13.00" fill="#c4c4c4" rx="2"/>
<text transform="translate(446.60,560.43) scale(0.85,1)" font-size="10.5" fill="#e4e4e4" font-weight="bold" text-anchor="start" letter-spacing="0.4" stroke="#e4e4e4" stroke-width="0.12">FAST</text>
<text transform="translate(446.60,576.43) scale(0.85,1)" font-size="10.5" fill="#e4e4e4" font-weight="bold" text-anchor="start" letter-spacing="0.4" stroke="#e4e4e4" stroke-width="0.12">PUNCH</text>
<circle cx="502.30" cy="564.80" r="12.6" fill="#000" opacity="0.28" filter="url(#blur1)"/>
<circle cx="502.00" cy="564.00" r="12" fill="url(#wknob)"/>
<line x1="506.16" y1="566.40" x2="510.83" y2="569.10" stroke="#0c1a2c" stroke-width="2.4"/>
<text transform="translate(519.40,568.83) scale(0.85,1)" font-size="10.5" fill="#e4e4e4" font-weight="bold" text-anchor="start" letter-spacing="0.4" stroke="#e4e4e4" stroke-width="0.12">COMP</text>
<path d="M420,778 V592.3 Q420,589.3 423,589.3 H555 Q558,589.3 558,592.3 V778 Z" fill="#c5c5c5"/>
<polygon points="427,589.3 550.5,589.3 530,610.7 448.3,610.7" fill="#b5b5b5"/>
<text transform="translate(489.00,603.99) scale(0.97,1)" font-size="11.5" fill="#585858" font-weight="bold" text-anchor="middle" letter-spacing="0.3" stroke="#585858" stroke-width="0.12">HATS</text>
<circle cx="442.30" cy="633.80" r="12.6" fill="#000" opacity="0.28" filter="url(#blur1)"/>
<circle cx="442.00" cy="633.00" r="12" fill="url(#wknob)"/>
<line x1="443.24" y1="628.36" x2="444.64" y2="623.15" stroke="#0c1a2c" stroke-width="2.4"/>
<text transform="translate(442.00,658.83) scale(0.85,1)" font-size="10.5" fill="#1e1e1e" font-weight="bold" text-anchor="middle" letter-spacing="0.4" stroke="#1e1e1e" stroke-width="0.12">PAN</text>
<rect x="490.70" y="621.30" width="24.60" height="24.60" fill="#000" rx="2" opacity="0.35" filter="url(#blur1)"/>
<rect x="491.00" y="621.00" width="24.00" height="24.00" fill="url(#lbtn)" rx="2"/>
<rect x="520.70" y="621.30" width="24.60" height="24.60" fill="#000" rx="2" opacity="0.35" filter="url(#blur1)"/>
<rect x="521.00" y="621.00" width="24.00" height="24.00" fill="url(#lbtn)" rx="2"/>
<text x="503.00" y="637.01" font-size="11" fill="#222" font-weight="bold" text-anchor="middle" stroke="#222" stroke-width="0.12">M</text>
<text x="533.00" y="637.01" font-size="11" fill="#222" font-weight="bold" text-anchor="middle" stroke="#222" stroke-width="0.12">S</text>
<path d="M480,661.5 V654.5 H488" fill="none" stroke="#a8a8a8" stroke-width="1.6"/>
<path d="M480.5,760 V768.5 H489" fill="none" stroke="#a8a8a8" stroke-width="1.6"/>
<text x="481.30" y="678.04" font-size="10" fill="#a2a2a2" font-weight="bold" text-anchor="middle" stroke="#a2a2a2" stroke-width="0.12">S</text>
<text x="481.30" y="697.09" font-size="10" fill="#a2a2a2" font-weight="bold" text-anchor="middle" stroke="#a2a2a2" stroke-width="0.12">E</text>
<text x="481.30" y="716.14" font-size="10" fill="#a2a2a2" font-weight="bold" text-anchor="middle" stroke="#a2a2a2" stroke-width="0.12">N</text>
<text x="481.30" y="735.19" font-size="10" fill="#a2a2a2" font-weight="bold" text-anchor="middle" stroke="#a2a2a2" stroke-width="0.12">D</text>
<text x="481.30" y="754.25" font-size="10" fill="#a2a2a2" font-weight="bold" text-anchor="middle" stroke="#a2a2a2" stroke-width="0.12">S</text>
<circle cx="503.30" cy="667.80" r="12.6" fill="#000" opacity="0.28" filter="url(#blur1)"/>
<circle cx="503.00" cy="667.00" r="12" fill="url(#wknob)"/>
<line x1="500.60" y1="671.16" x2="497.90" y2="675.83" stroke="#0c1a2c" stroke-width="2.4"/>
<text transform="translate(520.60,670.83) scale(0.85,1)" font-size="10.5" fill="#1e1e1e" font-weight="bold" text-anchor="start" letter-spacing="0.4" stroke="#1e1e1e" stroke-width="0.12">REV A</text>
<circle cx="503.30" cy="697.80" r="12.6" fill="#000" opacity="0.28" filter="url(#blur1)"/>
<circle cx="503.00" cy="697.00" r="12" fill="url(#wknob)"/>
<line x1="500.60" y1="701.16" x2="497.90" y2="705.83" stroke="#0c1a2c" stroke-width="2.4"/>
<text transform="translate(520.60,700.83) scale(0.85,1)" font-size="10.5" fill="#1e1e1e" font-weight="bold" text-anchor="start" letter-spacing="0.4" stroke="#1e1e1e" stroke-width="0.12">REV B</text>
<circle cx="503.30" cy="727.80" r="12.6" fill="#000" opacity="0.28" filter="url(#blur1)"/>
<circle cx="503.00" cy="727.00" r="12" fill="url(#wknob)"/>
<line x1="500.60" y1="731.16" x2="497.90" y2="735.83" stroke="#0c1a2c" stroke-width="2.4"/>
<text transform="translate(520.60,730.83) scale(0.85,1)" font-size="10.5" fill="#1e1e1e" font-weight="bold" text-anchor="start" letter-spacing="0.4" stroke="#1e1e1e" stroke-width="0.12">DLY A</text>
<circle cx="501.30" cy="756.80" r="12.6" fill="#000" opacity="0.28" filter="url(#blur1)"/>
<circle cx="501.00" cy="756.00" r="12" fill="url(#wknob)"/>
<line x1="498.60" y1="760.16" x2="495.90" y2="764.83" stroke="#0c1a2c" stroke-width="2.4"/>
<text transform="translate(520.60,760.83) scale(0.85,1)" font-size="10.5" fill="#1e1e1e" font-weight="bold" text-anchor="start" letter-spacing="0.4" stroke="#1e1e1e" stroke-width="0.12">DLY B</text>
<rect x="430.30" y="669.20" width="18.60" height="98.80" fill="#5e5e5e" rx="2" stroke="#555" stroke-width="0.8"/>
<rect x="460.00" y="669.20" width="3.00" height="98.80" fill="#9e9e9e"/>
<rect x="454.00" y="669.80" width="15.00" height="27.00" fill="#000" rx="2" opacity="0.3" filter="url(#blur05)"/>
<rect x="454.00" y="668.80" width="15.00" height="27.00" fill="url(#fcap)" rx="2"/>
<rect x="456.00" y="681.80" width="11.00" height="1.00" fill="#8a8a8a"/>
<path d="M560,197 V74 Q560,71 563,71 H695 Q698,71 698,74 V197 Z" fill="#c5c5c5"/>
<polygon points="567,71 690.5,71 670,92.5 588.3,92.5" fill="#b5b5b5"/>
<text transform="translate(629.00,85.89) scale(0.97,1)" font-size="11.5" fill="#585858" font-weight="bold" text-anchor="middle" letter-spacing="0.3" stroke="#585858" stroke-width="0.12">TOMS</text>
<rect x="570.00" y="103.00" width="56.00" height="24.00" fill="#585858" rx="2.5"/>
<rect x="570.00" y="103.00" width="56.00" height="1.00" fill="#4a4a4a"/>
<text transform="translate(590.50,119.94) scale(0.95,1)" font-size="13" fill="#8cb8ff" font-weight="bold" text-anchor="middle" stroke="#8cb8ff" stroke-width="0.12">B1</text>
<circle cx="616" cy="116" r="7.1" fill="#dedede"/>
<rect x="614.8" cy="0" y="121.6" width="2.4" height="2" fill="#555"/>
<circle cx="611.40" cy="116.00" r="1.05" fill="#555"/>
<circle cx="612.75" cy="112.75" r="1.05" fill="#555"/>
<circle cx="616.00" cy="111.40" r="1.05" fill="#555"/>
<circle cx="619.25" cy="112.75" r="1.05" fill="#555"/>
<circle cx="620.60" cy="116.00" r="1.05" fill="#555"/>
<rect x="632.00" y="103.00" width="56.00" height="24.00" fill="#585858" rx="2.5"/>
<rect x="632.00" y="103.00" width="56.00" height="1.00" fill="#4a4a4a"/>
<text transform="translate(652.50,119.94) scale(0.95,1)" font-size="13" fill="#8cb8ff" font-weight="bold" text-anchor="middle" stroke="#8cb8ff" stroke-width="0.12">D2</text>
<circle cx="678" cy="116" r="7.1" fill="#dedede"/>
<rect x="676.8" cy="0" y="121.6" width="2.4" height="2" fill="#555"/>
<circle cx="673.40" cy="116.00" r="1.05" fill="#555"/>
<circle cx="674.75" cy="112.75" r="1.05" fill="#555"/>
<circle cx="678.00" cy="111.40" r="1.05" fill="#555"/>
<circle cx="681.25" cy="112.75" r="1.05" fill="#555"/>
<circle cx="682.60" cy="116.00" r="1.05" fill="#555"/>
<text transform="translate(629.00,139.01) scale(0.85,1)" font-size="9.9" fill="#202020" font-weight="bold" text-anchor="middle" letter-spacing="0.6" stroke="#202020" stroke-width="0.12">NOTE RANGE</text>
<rect x="570.00" y="150.00" width="30.00" height="24.00" fill="#585858" rx="2.5"/>
<text transform="translate(585.00,167.22) scale(0.95,1)" font-size="10.2" fill="#8cb8ff" font-weight="bold" text-anchor="middle" stroke="#8cb8ff" stroke-width="0.12">1/16</text>
<rect x="607.20" y="161.60" width="5.60" height="2.40" fill="#202020"/>
<rect x="625.70" y="150.30" width="30.60" height="24.60" fill="#000" rx="2" opacity="0.35" filter="url(#blur1)"/>
<rect x="626.00" y="150.00" width="30.00" height="24.00" fill="url(#lbtn)" rx="2"/>
<rect x="661.70" y="150.30" width="30.60" height="24.60" fill="#000" rx="2" opacity="0.35" filter="url(#blur1)"/>
<rect x="662.00" y="150.00" width="30.00" height="24.00" fill="url(#lbtn)" rx="2"/>
<text transform="translate(641.00,165.65) scale(0.79,1)" font-size="10" fill="#1e1e1e" font-weight="bold" text-anchor="middle" letter-spacing="0.7" stroke="#1e1e1e" stroke-width="0.12">REP</text>
<text transform="translate(677.00,165.65) scale(0.81,1)" font-size="10" fill="#1e1e1e" font-weight="bold" text-anchor="middle" letter-spacing="0.7" stroke="#1e1e1e" stroke-width="0.12">FULL</text>
<text transform="translate(585.00,187.11) scale(0.85,1)" font-size="9.9" fill="#202020" font-weight="bold" text-anchor="middle" letter-spacing="0.6" stroke="#202020" stroke-width="0.12">RATE</text>
<rect x="560.00" y="197.00" width="138.00" height="26.00" fill="#3a3a3a"/>
<rect x="560.00" y="198.00" width="16.00" height="11.00" fill="url(#pbar)"/>
<rect x="560.00" y="210.00" width="16.00" height="11.50" fill="url(#pbar)"/>
<rect x="577.00" y="198.00" width="81.00" height="24.00" fill="url(#pbar)"/>
<rect x="659.00" y="198.00" width="19.00" height="24.00" fill="url(#pbar)"/>
<rect x="679.00" y="198.00" width="19.00" height="24.00" fill="url(#pbar)"/>
<polygon points="563.1,206 570.8,206 566.95,201.2" fill="#f0f0f0"/>
<polygon points="563.1,213 570.8,213 566.95,217.8" fill="#f0f0f0"/>
<text transform="translate(580.50,214.57) scale(0.96,1)" font-size="12" fill="#ececec" font-weight="bold" text-anchor="start" stroke="#ececec" stroke-width="0.12">LowEnd</text>
<path d="M662.2,206.5 L668.2,203.7 L674.2,206.5 V213.3 L668.2,216 L662.2,213.3 Z" fill="#f0f0f0"/>
<path d="M662.2,206.5 L668.2,209 L674.2,206.5 M668.2,209 V216" fill="none" stroke="#6a6a6a" stroke-width="0.8"/>
<text x="665.2" y="213.2" font-size="5.5" font-weight="bold" fill="#777" text-anchor="middle">?</text>
<text x="671.2" y="213.2" font-size="5.5" font-weight="bold" fill="#777" text-anchor="middle">?</text>
<path d="M682.2,204.6 Q682.2,204 682.8000000000001,204 H691.5 L694.4000000000001,207 V215.4 Q694.4000000000001,216 693.8000000000001,216 H682.8000000000001 Q682.2,216 682.2,215.4 Z" fill="#f0f0f0"/>
<rect x="683.40" y="205.30" width="5.80" height="2.60" fill="#6e6e6e"/>
<circle cx="690.3000000000001" cy="211.9" r="1.9" fill="#6e6e6e"/>
<rect x="560.00" y="223.00" width="138.00" height="365.00" fill="#5f5f5f"/>
<rect x="563.20" y="226.00" width="131.50" height="208.20" fill="#3f3f3f" rx="4"/>
<rect x="563.20" y="226.00" width="131.50" height="5.00" fill="url(#ishadow)" rx="4"/>
<circle cx="587.00" cy="268.00" r="12.4" fill="none" stroke="#2e2e2e" stroke-width="0.8" stroke-dasharray="64.93 100" transform="rotate(120 587.00 268.00)" opacity="0.6"/>
<path d="M582.50,275.79 A9,9 0 1 1 591.50,275.79" fill="none" stroke="#858585" stroke-width="6.4"/>
<path d="M582.50,275.79 A9,9 0 0 1 578.84,271.80" fill="none" stroke="#fff080" stroke-width="6.4"/>
<text transform="translate(587.00,291.83) scale(0.85,1)" font-size="10.5" fill="#cacaca" font-weight="bold" text-anchor="middle" letter-spacing="0.4" stroke="#cacaca" stroke-width="0.12">TUNE</text>
<circle cx="630.00" cy="268.00" r="12.4" fill="none" stroke="#2e2e2e" stroke-width="0.8" stroke-dasharray="64.93 100" transform="rotate(120 630.00 268.00)" opacity="0.6"/>
<path d="M625.50,275.79 A9,9 0 1 1 634.50,275.79" fill="none" stroke="#858585" stroke-width="6.4"/>
<path d="M625.50,275.79 A9,9 0 0 1 623.64,261.64" fill="none" stroke="#fff080" stroke-width="6.4"/>
<text transform="translate(630.00,291.83) scale(0.85,1)" font-size="10.5" fill="#cacaca" font-weight="bold" text-anchor="middle" letter-spacing="0.4" stroke="#cacaca" stroke-width="0.12">DECAY1</text>
<circle cx="671.00" cy="268.00" r="12.4" fill="none" stroke="#2e2e2e" stroke-width="0.8" stroke-dasharray="64.93 100" transform="rotate(120 671.00 268.00)" opacity="0.6"/>
<path d="M666.50,275.79 A9,9 0 1 1 675.50,275.79" fill="none" stroke="#858585" stroke-width="6.4"/>
<path d="M666.50,275.79 A9,9 0 0 1 667.20,259.84" fill="none" stroke="#fff080" stroke-width="6.4"/>
<text transform="translate(671.00,291.83) scale(0.85,1)" font-size="10.5" fill="#cacaca" font-weight="bold" text-anchor="middle" letter-spacing="0.4" stroke="#cacaca" stroke-width="0.12">DECAY2</text>
<circle cx="587.00" cy="326.00" r="12.4" fill="none" stroke="#2e2e2e" stroke-width="0.8" stroke-dasharray="64.93 100" transform="rotate(120 587.00 326.00)" opacity="0.6"/>
<path d="M582.50,333.79 A9,9 0 1 1 591.50,333.79" fill="none" stroke="#858585" stroke-width="6.4"/>
<path d="M582.50,333.79 A9,9 0 0 1 581.21,319.11" fill="none" stroke="#fff080" stroke-width="6.4"/>
<text transform="translate(587.00,349.83) scale(0.85,1)" font-size="10.5" fill="#cacaca" font-weight="bold" text-anchor="middle" letter-spacing="0.4" stroke="#cacaca" stroke-width="0.12">TUNE2</text>
<circle cx="630.00" cy="326.00" r="12.4" fill="none" stroke="#2e2e2e" stroke-width="0.8" stroke-dasharray="64.93 100" transform="rotate(120 630.00 326.00)" opacity="0.6"/>
<path d="M625.50,333.79 A9,9 0 1 1 634.50,333.79" fill="none" stroke="#858585" stroke-width="6.4"/>
<path d="M625.50,333.79 A9,9 0 0 1 621.03,325.22" fill="none" stroke="#fff080" stroke-width="6.4"/>
<text transform="translate(630.00,349.83) scale(0.85,1)" font-size="10.5" fill="#cacaca" font-weight="bold" text-anchor="middle" letter-spacing="0.4" stroke="#cacaca" stroke-width="0.12">LEVEL2</text>
<circle cx="671.00" cy="326.00" r="12.4" fill="none" stroke="#2e2e2e" stroke-width="0.8" stroke-dasharray="64.93 100" transform="rotate(120 671.00 326.00)" opacity="0.6"/>
<path d="M666.50,333.79 A9,9 0 1 1 675.50,333.79" fill="none" stroke="#858585" stroke-width="6.4"/>
<path d="M666.50,333.79 A9,9 0 0 1 665.21,332.89" fill="none" stroke="#fff080" stroke-width="6.4"/>
<text transform="translate(671.00,349.83) scale(0.85,1)" font-size="10.5" fill="#cacaca" font-weight="bold" text-anchor="middle" letter-spacing="0.4" stroke="#cacaca" stroke-width="0.12">FDBK2</text>
<circle cx="587.00" cy="384.00" r="12.4" fill="none" stroke="#2e2e2e" stroke-width="0.8" stroke-dasharray="64.93 100" transform="rotate(120 587.00 384.00)" opacity="0.6"/>
<path d="M582.50,391.79 A9,9 0 1 1 591.50,391.79" fill="none" stroke="#858585" stroke-width="6.4"/>
<path d="M587.00,375.00 A9,9 0 0 1 594.37,378.84" fill="none" stroke="#fff080" stroke-width="6.4"/>
<text transform="translate(587.00,407.83) scale(0.85,1)" font-size="10.5" fill="#cacaca" font-weight="bold" text-anchor="middle" letter-spacing="0.4" stroke="#cacaca" stroke-width="0.12">AMNT</text>
<circle cx="630.00" cy="384.00" r="12.4" fill="none" stroke="#2e2e2e" stroke-width="0.8" stroke-dasharray="64.93 100" transform="rotate(120 630.00 384.00)" opacity="0.6"/>
<path d="M625.50,391.79 A9,9 0 1 1 634.50,391.79" fill="none" stroke="#858585" stroke-width="6.4"/>
<path d="M625.50,391.79 A9,9 0 0 1 632.33,375.31" fill="none" stroke="#fff080" stroke-width="6.4"/>
<text transform="translate(630.00,407.83) scale(0.85,1)" font-size="10.5" fill="#cacaca" font-weight="bold" text-anchor="middle" letter-spacing="0.4" stroke="#cacaca" stroke-width="0.12">DECAY</text>
<circle cx="671.00" cy="384.00" r="12.4" fill="none" stroke="#2e2e2e" stroke-width="0.8" stroke-dasharray="64.93 100" transform="rotate(120 671.00 384.00)" opacity="0.6"/>
<path d="M666.50,391.79 A9,9 0 1 1 675.50,391.79" fill="none" stroke="#858585" stroke-width="6.4"/>
<path d="M666.50,391.79 A9,9 0 0 1 672.56,375.14" fill="none" stroke="#fff080" stroke-width="6.4"/>
<text transform="translate(671.00,407.83) scale(0.85,1)" font-size="10.5" fill="#cacaca" font-weight="bold" text-anchor="middle" letter-spacing="0.4" stroke="#cacaca" stroke-width="0.12">CURVE</text>
<path d="M575,367.5 V361.5 H653.5" fill="none" stroke="#cfcfcf" stroke-width="1.3"/>
<text transform="translate(684.00,367.94) scale(0.92,1)" font-size="10" fill="#cfcfcf" font-weight="bold" text-anchor="end" font-style="italic" stroke="#cfcfcf" stroke-width="0.12">PITCH</text>
<text transform="translate(604.70,243.23) scale(0.85,1)" font-size="10.5" fill="#cacaca" font-weight="bold" text-anchor="middle" letter-spacing="0.4" stroke="#cacaca" stroke-width="0.12">OP1</text>
<text transform="translate(655.00,243.23) scale(0.85,1)" font-size="10.5" fill="#cacaca" font-weight="bold" text-anchor="middle" letter-spacing="0.4" stroke="#cacaca" stroke-width="0.12">OP2</text>
<rect x="619.30" y="230.70" width="21.60" height="17.00" fill="none" rx="1" stroke="#8a8a8a" stroke-width="1.5"/>
<path d="M624,239.4 L628.5,235.5 V243.3 Z" fill="#fff080"/>
<rect x="627.50" y="238.40" width="9.00" height="2.10" fill="#fff080"/>
<text transform="translate(629.30,424.83) scale(0.88,1)" font-size="10.5" fill="#fff080" font-weight="bold" text-anchor="middle" stroke="#fff080" stroke-width="0.12">FM SYNTH</text>
<rect x="560.00" y="494.00" width="138.00" height="1.00" fill="#4d4d4d"/>
<rect x="560.00" y="543.00" width="138.00" height="1.00" fill="#4d4d4d"/>
<rect x="570.20" y="444.80" width="13.00" height="13.00" fill="#2a2a2a" rx="2" opacity="0.45" filter="url(#blur05)"/>
<rect x="570.00" y="444.00" width="13.00" height="13.00" fill="#8cbaff" rx="2"/>
<text transform="translate(586.60,455.23) scale(0.85,1)" font-size="10.5" fill="#e2e2e2" font-weight="bold" text-anchor="start" letter-spacing="0.4" stroke="#e2e2e2" stroke-width="0.12">DSRT</text>
<rect x="570.20" y="460.80" width="13.00" height="13.00" fill="#2a2a2a" rx="2" opacity="0.45" filter="url(#blur05)"/>
<rect x="570.00" y="460.00" width="13.00" height="13.00" fill="#c4c4c4" rx="2"/>
<text transform="translate(586.60,471.23) scale(0.85,1)" font-size="10.5" fill="#8cbaff" font-weight="bold" text-anchor="start" letter-spacing="0.4" stroke="#8cbaff" stroke-width="0.12">BIT</text>
<rect x="570.20" y="476.80" width="13.00" height="13.00" fill="#2a2a2a" rx="2" opacity="0.45" filter="url(#blur05)"/>
<rect x="570.00" y="476.00" width="13.00" height="13.00" fill="#8cbaff" rx="2"/>
<text transform="translate(586.60,487.23) scale(0.85,1)" font-size="10.5" fill="#e2e2e2" font-weight="bold" text-anchor="start" letter-spacing="0.4" stroke="#e2e2e2" stroke-width="0.12">DECI</text>
<path d="M613.5,452 H621.6 L628.8,459.3" fill="none" stroke="#8c8c8c" stroke-width="1.6"/>
<path d="M613.5,482 H621.6 L628.8,474.6" fill="none" stroke="#8c8c8c" stroke-width="1.6"/>
<path d="M613.5,467 H626.8" fill="none" stroke="#7fb4ff" stroke-width="2"/>
<circle cx="642.30" cy="467.80" r="12.6" fill="#000" opacity="0.28" filter="url(#blur1)"/>
<circle cx="642.00" cy="467.00" r="12" fill="url(#wknob)"/>
<line x1="645.39" y1="463.61" x2="649.21" y2="459.79" stroke="#0c1a2c" stroke-width="2.4"/>
<text transform="translate(659.90,471.83) scale(0.85,1)" font-size="10.5" fill="#e4e4e4" font-weight="bold" text-anchor="start" letter-spacing="0.4" stroke="#e4e4e4" stroke-width="0.12">AMNT</text>
<rect x="569.70" y="500.30" width="24.60" height="24.60" fill="#000" rx="2" opacity="0.35" filter="url(#blur1)"/>
<rect x="570.00" y="500.00" width="24.00" height="24.00" fill="url(#lbtn)" rx="2"/>
<text transform="translate(582.00,515.83) scale(0.9,1)" font-size="10.5" fill="#111" font-weight="bold" text-anchor="middle" stroke="#111" stroke-width="0.12">LP</text>
<circle cx="642.30" cy="512.80" r="12.6" fill="#000" opacity="0.28" filter="url(#blur1)"/>
<circle cx="642.00" cy="512.00" r="12" fill="url(#wknob)"/>
<line x1="644.75" y1="508.07" x2="647.85" y2="503.64" stroke="#0c1a2c" stroke-width="2.4"/>
<circle cx="676.30" cy="512.80" r="12.6" fill="#000" opacity="0.28" filter="url(#blur1)"/>
<circle cx="676.00" cy="512.00" r="12" fill="url(#wknob)"/>
<line x1="673.60" y1="516.16" x2="670.90" y2="520.83" stroke="#0c1a2c" stroke-width="2.4"/>
<text transform="translate(582.60,538.83) scale(0.85,1)" font-size="10.5" fill="#e4e4e4" font-weight="bold" text-anchor="middle" letter-spacing="0.4" stroke="#e4e4e4" stroke-width="0.12">TYPE</text>
<text transform="translate(642.00,538.83) scale(0.85,1)" font-size="10.5" fill="#e4e4e4" font-weight="bold" text-anchor="middle" letter-spacing="0.4" stroke="#e4e4e4" stroke-width="0.12">CUT</text>
<text transform="translate(676.00,538.83) scale(0.85,1)" font-size="10.5" fill="#e4e4e4" font-weight="bold" text-anchor="middle" letter-spacing="0.4" stroke="#e4e4e4" stroke-width="0.12">RES</text>
<rect x="570.20" y="549.80" width="13.00" height="13.00" fill="#2a2a2a" rx="2" opacity="0.45" filter="url(#blur05)"/>
<rect x="570.00" y="549.00" width="13.00" height="13.00" fill="#8cbaff" rx="2"/>
<rect x="570.20" y="565.80" width="13.00" height="13.00" fill="#2a2a2a" rx="2" opacity="0.45" filter="url(#blur05)"/>
<rect x="570.00" y="565.00" width="13.00" height="13.00" fill="#c4c4c4" rx="2"/>
<text transform="translate(586.60,560.43) scale(0.85,1)" font-size="10.5" fill="#e4e4e4" font-weight="bold" text-anchor="start" letter-spacing="0.4" stroke="#e4e4e4" stroke-width="0.12">FAST</text>
<text transform="translate(586.60,576.43) scale(0.85,1)" font-size="10.5" fill="#e4e4e4" font-weight="bold" text-anchor="start" letter-spacing="0.4" stroke="#e4e4e4" stroke-width="0.12">PUNCH</text>
<circle cx="642.30" cy="564.80" r="12.6" fill="#000" opacity="0.28" filter="url(#blur1)"/>
<circle cx="642.00" cy="564.00" r="12" fill="url(#wknob)"/>
<line x1="645.68" y1="560.91" x2="649.81" y2="557.44" stroke="#0c1a2c" stroke-width="2.4"/>
<text transform="translate(659.40,568.83) scale(0.85,1)" font-size="10.5" fill="#e4e4e4" font-weight="bold" text-anchor="start" letter-spacing="0.4" stroke="#e4e4e4" stroke-width="0.12">COMP</text>
<path d="M560,778 V592.3 Q560,589.3 563,589.3 H695 Q698,589.3 698,592.3 V778 Z" fill="#c5c5c5"/>
<polygon points="567,589.3 690.5,589.3 670,610.7 588.3,610.7" fill="#b5b5b5"/>
<text transform="translate(629.00,603.99) scale(0.97,1)" font-size="11.5" fill="#585858" font-weight="bold" text-anchor="middle" letter-spacing="0.3" stroke="#585858" stroke-width="0.12">TOMS</text>
<circle cx="582.30" cy="633.80" r="12.6" fill="#000" opacity="0.28" filter="url(#blur1)"/>
<circle cx="582.00" cy="633.00" r="12" fill="url(#wknob)"/>
<line x1="582.00" y1="628.20" x2="582.00" y2="622.80" stroke="#0c1a2c" stroke-width="2.4"/>
<text transform="translate(582.00,658.83) scale(0.85,1)" font-size="10.5" fill="#1e1e1e" font-weight="bold" text-anchor="middle" letter-spacing="0.4" stroke="#1e1e1e" stroke-width="0.12">PAN</text>
<rect x="630.70" y="621.30" width="24.60" height="24.60" fill="#000" rx="2" opacity="0.35" filter="url(#blur1)"/>
<rect x="631.00" y="621.00" width="24.00" height="24.00" fill="url(#lbtn)" rx="2"/>
<rect x="660.70" y="621.30" width="24.60" height="24.60" fill="#000" rx="2" opacity="0.35" filter="url(#blur1)"/>
<rect x="661.00" y="621.00" width="24.00" height="24.00" fill="url(#lbtn)" rx="2"/>
<text x="643.00" y="637.01" font-size="11" fill="#222" font-weight="bold" text-anchor="middle" stroke="#222" stroke-width="0.12">M</text>
<text x="673.00" y="637.01" font-size="11" fill="#222" font-weight="bold" text-anchor="middle" stroke="#222" stroke-width="0.12">S</text>
<path d="M620,661.5 V654.5 H628" fill="none" stroke="#a8a8a8" stroke-width="1.6"/>
<path d="M620.5,760 V768.5 H629" fill="none" stroke="#a8a8a8" stroke-width="1.6"/>
<text x="621.30" y="678.04" font-size="10" fill="#a2a2a2" font-weight="bold" text-anchor="middle" stroke="#a2a2a2" stroke-width="0.12">S</text>
<text x="621.30" y="697.09" font-size="10" fill="#a2a2a2" font-weight="bold" text-anchor="middle" stroke="#a2a2a2" stroke-width="0.12">E</text>
<text x="621.30" y="716.14" font-size="10" fill="#a2a2a2" font-weight="bold" text-anchor="middle" stroke="#a2a2a2" stroke-width="0.12">N</text>
<text x="621.30" y="735.19" font-size="10" fill="#a2a2a2" font-weight="bold" text-anchor="middle" stroke="#a2a2a2" stroke-width="0.12">D</text>
<text x="621.30" y="754.25" font-size="10" fill="#a2a2a2" font-weight="bold" text-anchor="middle" stroke="#a2a2a2" stroke-width="0.12">S</text>
<circle cx="643.30" cy="667.80" r="12.6" fill="#000" opacity="0.28" filter="url(#blur1)"/>
<circle cx="643.00" cy="667.00" r="12" fill="url(#wknob)"/>
<line x1="640.25" y1="670.93" x2="637.15" y2="675.36" stroke="#0c1a2c" stroke-width="2.4"/>
<text transform="translate(660.60,670.83) scale(0.85,1)" font-size="10.5" fill="#1e1e1e" font-weight="bold" text-anchor="start" letter-spacing="0.4" stroke="#1e1e1e" stroke-width="0.12">REV A</text>
<circle cx="643.30" cy="697.80" r="12.6" fill="#000" opacity="0.28" filter="url(#blur1)"/>
<circle cx="643.00" cy="697.00" r="12" fill="url(#wknob)"/>
<line x1="640.60" y1="701.16" x2="637.90" y2="705.83" stroke="#0c1a2c" stroke-width="2.4"/>
<text transform="translate(660.60,700.83) scale(0.85,1)" font-size="10.5" fill="#1e1e1e" font-weight="bold" text-anchor="start" letter-spacing="0.4" stroke="#1e1e1e" stroke-width="0.12">REV B</text>
<circle cx="643.30" cy="727.80" r="12.6" fill="#000" opacity="0.28" filter="url(#blur1)"/>
<circle cx="643.00" cy="727.00" r="12" fill="url(#wknob)"/>
<line x1="640.60" y1="731.16" x2="637.90" y2="735.83" stroke="#0c1a2c" stroke-width="2.4"/>
<text transform="translate(660.60,730.83) scale(0.85,1)" font-size="10.5" fill="#1e1e1e" font-weight="bold" text-anchor="start" letter-spacing="0.4" stroke="#1e1e1e" stroke-width="0.12">DLY A</text>
<circle cx="641.30" cy="756.80" r="12.6" fill="#000" opacity="0.28" filter="url(#blur1)"/>
<circle cx="641.00" cy="756.00" r="12" fill="url(#wknob)"/>
<line x1="638.60" y1="760.16" x2="635.90" y2="764.83" stroke="#0c1a2c" stroke-width="2.4"/>
<text transform="translate(660.60,760.83) scale(0.85,1)" font-size="10.5" fill="#1e1e1e" font-weight="bold" text-anchor="start" letter-spacing="0.4" stroke="#1e1e1e" stroke-width="0.12">DLY B</text>
<rect x="570.30" y="669.20" width="18.60" height="98.80" fill="#5e5e5e" rx="2" stroke="#555" stroke-width="0.8"/>
<rect x="600.00" y="669.20" width="3.00" height="98.80" fill="#9e9e9e"/>
<rect x="594.00" y="680.00" width="15.00" height="27.00" fill="#000" rx="2" opacity="0.3" filter="url(#blur05)"/>
<rect x="594.00" y="679.00" width="15.00" height="27.00" fill="url(#fcap)" rx="2"/>
<rect x="596.00" y="692.00" width="11.00" height="1.00" fill="#8a8a8a"/>
<path d="M700,197 V74 Q700,71 703,71 H835 Q838,71 838,74 V197 Z" fill="#c5c5c5"/>
<polygon points="707,71 830.5,71 810,92.5 728.3,92.5" fill="#b5b5b5"/>
<text transform="translate(769.00,85.89) scale(0.97,1)" font-size="11.5" fill="#585858" font-weight="bold" text-anchor="middle" letter-spacing="0.3" stroke="#585858" stroke-width="0.12">PERCUSSION</text>
<rect x="710.00" y="103.00" width="56.00" height="24.00" fill="#585858" rx="2.5"/>
<rect x="710.00" y="103.00" width="56.00" height="1.00" fill="#4a4a4a"/>
<text transform="translate(730.50,119.94) scale(0.95,1)" font-size="13" fill="#8cb8ff" font-weight="bold" text-anchor="middle" stroke="#8cb8ff" stroke-width="0.12">C3</text>
<circle cx="756" cy="116" r="7.1" fill="#dedede"/>
<rect x="754.8" cy="0" y="121.6" width="2.4" height="2" fill="#555"/>
<circle cx="751.40" cy="116.00" r="1.05" fill="#555"/>
<circle cx="752.75" cy="112.75" r="1.05" fill="#555"/>
<circle cx="756.00" cy="111.40" r="1.05" fill="#555"/>
<circle cx="759.25" cy="112.75" r="1.05" fill="#555"/>
<circle cx="760.60" cy="116.00" r="1.05" fill="#555"/>
<rect x="772.00" y="103.00" width="56.00" height="24.00" fill="#585858" rx="2.5"/>
<rect x="772.00" y="103.00" width="56.00" height="1.00" fill="#4a4a4a"/>
<text transform="translate(792.50,119.94) scale(0.95,1)" font-size="13" fill="#8cb8ff" font-weight="bold" text-anchor="middle" stroke="#8cb8ff" stroke-width="0.12">B3</text>
<circle cx="818" cy="116" r="7.1" fill="#dedede"/>
<rect x="816.8" cy="0" y="121.6" width="2.4" height="2" fill="#555"/>
<circle cx="813.40" cy="116.00" r="1.05" fill="#555"/>
<circle cx="814.75" cy="112.75" r="1.05" fill="#555"/>
<circle cx="818.00" cy="111.40" r="1.05" fill="#555"/>
<circle cx="821.25" cy="112.75" r="1.05" fill="#555"/>
<circle cx="822.60" cy="116.00" r="1.05" fill="#555"/>
<text transform="translate(769.00,139.01) scale(0.85,1)" font-size="9.9" fill="#202020" font-weight="bold" text-anchor="middle" letter-spacing="0.6" stroke="#202020" stroke-width="0.12">NOTE RANGE</text>
<rect x="710.00" y="150.00" width="30.00" height="24.00" fill="#585858" rx="2.5"/>
<text transform="translate(725.00,167.22) scale(0.95,1)" font-size="10.2" fill="#8cb8ff" font-weight="bold" text-anchor="middle" stroke="#8cb8ff" stroke-width="0.12">1/16</text>
<rect x="747.20" y="161.60" width="5.60" height="2.40" fill="#202020"/>
<rect x="765.70" y="150.30" width="30.60" height="24.60" fill="#000" rx="2" opacity="0.35" filter="url(#blur1)"/>
<rect x="766.00" y="150.00" width="30.00" height="24.00" fill="url(#lbtn)" rx="2"/>
<rect x="801.70" y="150.30" width="30.60" height="24.60" fill="#000" rx="2" opacity="0.35" filter="url(#blur1)"/>
<rect x="802.00" y="150.00" width="30.00" height="24.00" fill="url(#lbtn)" rx="2"/>
<text transform="translate(781.00,165.65) scale(0.79,1)" font-size="10" fill="#1e1e1e" font-weight="bold" text-anchor="middle" letter-spacing="0.7" stroke="#1e1e1e" stroke-width="0.12">REP</text>
<text transform="translate(817.00,165.65) scale(0.81,1)" font-size="10" fill="#1e1e1e" font-weight="bold" text-anchor="middle" letter-spacing="0.7" stroke="#1e1e1e" stroke-width="0.12">FULL</text>
<text transform="translate(725.00,187.11) scale(0.85,1)" font-size="9.9" fill="#202020" font-weight="bold" text-anchor="middle" letter-spacing="0.6" stroke="#202020" stroke-width="0.12">RATE</text>
<rect x="700.00" y="197.00" width="138.00" height="26.00" fill="#3a3a3a"/>
<rect x="700.00" y="198.00" width="16.00" height="11.00" fill="url(#pbar)"/>
<rect x="700.00" y="210.00" width="16.00" height="11.50" fill="url(#pbar)"/>
<rect x="717.00" y="198.00" width="81.00" height="24.00" fill="url(#pbar)"/>
<rect x="799.00" y="198.00" width="19.00" height="24.00" fill="url(#pbar)"/>
<rect x="819.00" y="198.00" width="19.00" height="24.00" fill="url(#pbar)"/>
<polygon points="703.1,206 710.8,206 706.95,201.2" fill="#f0f0f0"/>
<polygon points="703.1,213 710.8,213 706.95,217.8" fill="#f0f0f0"/>
<text transform="translate(720.50,214.57) scale(0.96,1)" font-size="12" fill="#ececec" font-weight="bold" text-anchor="start" stroke="#ececec" stroke-width="0.12">Ping</text>
<path d="M802.2,206.5 L808.2,203.7 L814.2,206.5 V213.3 L808.2,216 L802.2,213.3 Z" fill="#f0f0f0"/>
<path d="M802.2,206.5 L808.2,209 L814.2,206.5 M808.2,209 V216" fill="none" stroke="#6a6a6a" stroke-width="0.8"/>
<text x="805.2" y="213.2" font-size="5.5" font-weight="bold" fill="#777" text-anchor="middle">?</text>
<text x="811.2" y="213.2" font-size="5.5" font-weight="bold" fill="#777" text-anchor="middle">?</text>
<path d="M822.2,204.6 Q822.2,204 822.8000000000001,204 H831.5 L834.4000000000001,207 V215.4 Q834.4000000000001,216 833.8000000000001,216 H822.8000000000001 Q822.2,216 822.2,215.4 Z" fill="#f0f0f0"/>
<rect x="823.40" y="205.30" width="5.80" height="2.60" fill="#6e6e6e"/>
<circle cx="830.3000000000001" cy="211.9" r="1.9" fill="#6e6e6e"/>
<rect x="700.00" y="223.00" width="138.00" height="365.00" fill="#5f5f5f"/>
<rect x="703.20" y="226.00" width="131.50" height="208.20" fill="#3f3f3f" rx="4"/>
<rect x="703.20" y="226.00" width="131.50" height="5.00" fill="url(#ishadow)" rx="4"/>
<circle cx="727.00" cy="268.00" r="12.4" fill="none" stroke="#2e2e2e" stroke-width="0.8" stroke-dasharray="64.93 100" transform="rotate(120 727.00 268.00)" opacity="0.6"/>
<path d="M722.50,275.79 A9,9 0 1 1 731.50,275.79" fill="none" stroke="#858585" stroke-width="6.4"/>
<path d="M722.50,275.79 A9,9 0 1 1 731.50,275.79" fill="none" stroke="#fff080" stroke-width="6.4"/>
<text transform="translate(727.00,291.83) scale(0.85,1)" font-size="10.5" fill="#cacaca" font-weight="bold" text-anchor="middle" letter-spacing="0.4" stroke="#cacaca" stroke-width="0.12">TUNE</text>
<circle cx="770.00" cy="268.00" r="12.4" fill="none" stroke="#2e2e2e" stroke-width="0.8" stroke-dasharray="64.93 100" transform="rotate(120 770.00 268.00)" opacity="0.6"/>
<path d="M765.50,275.79 A9,9 0 1 1 774.50,275.79" fill="none" stroke="#858585" stroke-width="6.4"/>
<path d="M765.50,275.79 A9,9 0 0 1 761.14,266.44" fill="none" stroke="#fff080" stroke-width="6.4"/>
<text transform="translate(770.00,291.83) scale(0.85,1)" font-size="10.5" fill="#cacaca" font-weight="bold" text-anchor="middle" letter-spacing="0.4" stroke="#cacaca" stroke-width="0.12">DECAY1</text>
<circle cx="811.00" cy="268.00" r="12.4" fill="none" stroke="#2e2e2e" stroke-width="0.8" stroke-dasharray="64.93 100" transform="rotate(120 811.00 268.00)" opacity="0.6"/>
<path d="M806.50,275.79 A9,9 0 1 1 815.50,275.79" fill="none" stroke="#858585" stroke-width="6.4"/>
<path d="M806.50,275.79 A9,9 0 0 1 802.84,271.80" fill="none" stroke="#fff080" stroke-width="6.4"/>
<text transform="translate(811.00,291.83) scale(0.85,1)" font-size="10.5" fill="#cacaca" font-weight="bold" text-anchor="middle" letter-spacing="0.4" stroke="#cacaca" stroke-width="0.12">DECAY2</text>
<circle cx="727.00" cy="326.00" r="12.4" fill="none" stroke="#2e2e2e" stroke-width="0.8" stroke-dasharray="64.93 100" transform="rotate(120 727.00 326.00)" opacity="0.6"/>
<path d="M722.50,333.79 A9,9 0 1 1 731.50,333.79" fill="none" stroke="#858585" stroke-width="6.4"/>
<path d="M722.50,333.79 A9,9 0 0 1 730.08,317.54" fill="none" stroke="#fff080" stroke-width="6.4"/>
<text transform="translate(727.00,349.83) scale(0.85,1)" font-size="10.5" fill="#cacaca" font-weight="bold" text-anchor="middle" letter-spacing="0.4" stroke="#cacaca" stroke-width="0.12">TUNE2</text>
<circle cx="770.00" cy="326.00" r="12.4" fill="none" stroke="#2e2e2e" stroke-width="0.8" stroke-dasharray="64.93 100" transform="rotate(120 770.00 326.00)" opacity="0.6"/>
<path d="M765.50,333.79 A9,9 0 1 1 774.50,333.79" fill="none" stroke="#858585" stroke-width="6.4"/>
<path d="M765.50,333.79 A9,9 0 1 1 775.79,319.11" fill="none" stroke="#fff080" stroke-width="6.4"/>
<text transform="translate(770.00,349.83) scale(0.85,1)" font-size="10.5" fill="#cacaca" font-weight="bold" text-anchor="middle" letter-spacing="0.4" stroke="#cacaca" stroke-width="0.12">LEVEL2</text>
<circle cx="811.00" cy="326.00" r="12.4" fill="none" stroke="#2e2e2e" stroke-width="0.8" stroke-dasharray="64.93 100" transform="rotate(120 811.00 326.00)" opacity="0.6"/>
<path d="M806.50,333.79 A9,9 0 1 1 815.50,333.79" fill="none" stroke="#858585" stroke-width="6.4"/>
<path d="M806.50,333.79 A9,9 0 1 1 816.79,319.11" fill="none" stroke="#fff080" stroke-width="6.4"/>
<text transform="translate(811.00,349.83) scale(0.85,1)" font-size="10.5" fill="#cacaca" font-weight="bold" text-anchor="middle" letter-spacing="0.4" stroke="#cacaca" stroke-width="0.12">FDBK2</text>
<circle cx="727.00" cy="384.00" r="12.4" fill="none" stroke="#2e2e2e" stroke-width="0.8" stroke-dasharray="64.93 100" transform="rotate(120 727.00 384.00)" opacity="0.6"/>
<path d="M722.50,391.79 A9,9 0 1 1 731.50,391.79" fill="none" stroke="#858585" stroke-width="6.4"/>
<path d="M726.84,375.00 A9,9 0 0 1 727.16,375.00" fill="none" stroke="#fff080" stroke-width="6.4"/>
<text transform="translate(727.00,407.83) scale(0.85,1)" font-size="10.5" fill="#cacaca" font-weight="bold" text-anchor="middle" letter-spacing="0.4" stroke="#cacaca" stroke-width="0.12">AMNT</text>
<circle cx="770.00" cy="384.00" r="12.4" fill="none" stroke="#2e2e2e" stroke-width="0.8" stroke-dasharray="64.93 100" transform="rotate(120 770.00 384.00)" opacity="0.6"/>
<path d="M765.50,391.79 A9,9 0 1 1 774.50,391.79" fill="none" stroke="#858585" stroke-width="6.4"/>
<text transform="translate(770.00,407.83) scale(0.85,1)" font-size="10.5" fill="#cacaca" font-weight="bold" text-anchor="middle" letter-spacing="0.4" stroke="#cacaca" stroke-width="0.12">DECAY</text>
<circle cx="811.00" cy="384.00" r="12.4" fill="none" stroke="#2e2e2e" stroke-width="0.8" stroke-dasharray="64.93 100" transform="rotate(120 811.00 384.00)" opacity="0.6"/>
<path d="M806.50,391.79 A9,9 0 1 1 815.50,391.79" fill="none" stroke="#858585" stroke-width="6.4"/>
<text transform="translate(811.00,407.83) scale(0.85,1)" font-size="10.5" fill="#cacaca" font-weight="bold" text-anchor="middle" letter-spacing="0.4" stroke="#cacaca" stroke-width="0.12">CURVE</text>
<path d="M715,367.5 V361.5 H793.5" fill="none" stroke="#cfcfcf" stroke-width="1.3"/>
<text transform="translate(824.00,367.94) scale(0.92,1)" font-size="10" fill="#cfcfcf" font-weight="bold" text-anchor="end" font-style="italic" stroke="#cfcfcf" stroke-width="0.12">PITCH</text>
<text transform="translate(744.70,243.23) scale(0.85,1)" font-size="10.5" fill="#cacaca" font-weight="bold" text-anchor="middle" letter-spacing="0.4" stroke="#cacaca" stroke-width="0.12">OP1</text>
<text transform="translate(795.00,243.23) scale(0.85,1)" font-size="10.5" fill="#cacaca" font-weight="bold" text-anchor="middle" letter-spacing="0.4" stroke="#cacaca" stroke-width="0.12">OP2</text>
<rect x="759.30" y="230.70" width="21.60" height="17.00" fill="none" rx="1" stroke="#8a8a8a" stroke-width="1.5"/>
<rect x="763.50" y="238.70" width="13.40" height="1.50" fill="#8a8a8a"/>
<text transform="translate(769.30,424.83) scale(0.88,1)" font-size="10.5" fill="#fff080" font-weight="bold" text-anchor="middle" stroke="#fff080" stroke-width="0.12">FM SYNTH</text>
<rect x="700.00" y="494.00" width="138.00" height="1.00" fill="#4d4d4d"/>
<rect x="700.00" y="543.00" width="138.00" height="1.00" fill="#4d4d4d"/>
<rect x="710.20" y="444.80" width="13.00" height="13.00" fill="#2a2a2a" rx="2" opacity="0.45" filter="url(#blur05)"/>
<rect x="710.00" y="444.00" width="13.00" height="13.00" fill="#c4c4c4" rx="2"/>
<text transform="translate(726.60,455.23) scale(0.85,1)" font-size="10.5" fill="#e2e2e2" font-weight="bold" text-anchor="start" letter-spacing="0.4" stroke="#e2e2e2" stroke-width="0.12">DSRT</text>
<rect x="710.20" y="460.80" width="13.00" height="13.00" fill="#2a2a2a" rx="2" opacity="0.45" filter="url(#blur05)"/>
<rect x="710.00" y="460.00" width="13.00" height="13.00" fill="#8cbaff" rx="2"/>
<text transform="translate(726.60,471.23) scale(0.85,1)" font-size="10.5" fill="#e2e2e2" font-weight="bold" text-anchor="start" letter-spacing="0.4" stroke="#e2e2e2" stroke-width="0.12">BIT</text>
<rect x="710.20" y="476.80" width="13.00" height="13.00" fill="#2a2a2a" rx="2" opacity="0.45" filter="url(#blur05)"/>
<rect x="710.00" y="476.00" width="13.00" height="13.00" fill="#c4c4c4" rx="2"/>
<text transform="translate(726.60,487.23) scale(0.85,1)" font-size="10.5" fill="#8cbaff" font-weight="bold" text-anchor="start" letter-spacing="0.4" stroke="#8cbaff" stroke-width="0.12">DECI</text>
<path d="M753.5,452 H761.6 L768.8,459.3" fill="none" stroke="#8c8c8c" stroke-width="1.6"/>
<path d="M753.5,467 H766.8" fill="none" stroke="#8c8c8c" stroke-width="1.6"/>
<path d="M753.5,482 H761.6 L768.8,474.6" fill="none" stroke="#7fb4ff" stroke-width="2"/>
<circle cx="782.30" cy="467.80" r="12.6" fill="#000" opacity="0.28" filter="url(#blur1)"/>
<circle cx="782.00" cy="467.00" r="12" fill="url(#wknob)"/>
<line x1="777.27" y1="466.17" x2="771.95" y2="465.23" stroke="#0c1a2c" stroke-width="2.4"/>
<text transform="translate(799.90,471.83) scale(0.85,1)" font-size="10.5" fill="#e4e4e4" font-weight="bold" text-anchor="start" letter-spacing="0.4" stroke="#e4e4e4" stroke-width="0.12">AMNT</text>
<rect x="709.70" y="500.30" width="24.60" height="24.60" fill="#000" rx="2" opacity="0.35" filter="url(#blur1)"/>
<rect x="710.00" y="500.00" width="24.00" height="24.00" fill="url(#lbtn)" rx="2"/>
<text transform="translate(722.00,515.83) scale(0.9,1)" font-size="10.5" fill="#111" font-weight="bold" text-anchor="middle" stroke="#111" stroke-width="0.12">BP</text>
<circle cx="782.30" cy="512.80" r="12.6" fill="#000" opacity="0.28" filter="url(#blur1)"/>
<circle cx="782.00" cy="512.00" r="12" fill="url(#wknob)"/>
<line x1="781.17" y1="507.27" x2="780.23" y2="501.95" stroke="#0c1a2c" stroke-width="2.4"/>
<circle cx="816.30" cy="512.80" r="12.6" fill="#000" opacity="0.28" filter="url(#blur1)"/>
<circle cx="816.00" cy="512.00" r="12" fill="url(#wknob)"/>
<line x1="813.60" y1="516.16" x2="810.90" y2="520.83" stroke="#0c1a2c" stroke-width="2.4"/>
<text transform="translate(722.60,538.83) scale(0.85,1)" font-size="10.5" fill="#e4e4e4" font-weight="bold" text-anchor="middle" letter-spacing="0.4" stroke="#e4e4e4" stroke-width="0.12">TYPE</text>
<text transform="translate(782.00,538.83) scale(0.85,1)" font-size="10.5" fill="#e4e4e4" font-weight="bold" text-anchor="middle" letter-spacing="0.4" stroke="#e4e4e4" stroke-width="0.12">CUT</text>
<text transform="translate(816.00,538.83) scale(0.85,1)" font-size="10.5" fill="#e4e4e4" font-weight="bold" text-anchor="middle" letter-spacing="0.4" stroke="#e4e4e4" stroke-width="0.12">RES</text>
<rect x="710.20" y="549.80" width="13.00" height="13.00" fill="#2a2a2a" rx="2" opacity="0.45" filter="url(#blur05)"/>
<rect x="710.00" y="549.00" width="13.00" height="13.00" fill="#8cbaff" rx="2"/>
<rect x="710.20" y="565.80" width="13.00" height="13.00" fill="#2a2a2a" rx="2" opacity="0.45" filter="url(#blur05)"/>
<rect x="710.00" y="565.00" width="13.00" height="13.00" fill="#c4c4c4" rx="2"/>
<text transform="translate(726.60,560.43) scale(0.85,1)" font-size="10.5" fill="#e4e4e4" font-weight="bold" text-anchor="start" letter-spacing="0.4" stroke="#e4e4e4" stroke-width="0.12">FAST</text>
<text transform="translate(726.60,576.43) scale(0.85,1)" font-size="10.5" fill="#e4e4e4" font-weight="bold" text-anchor="start" letter-spacing="0.4" stroke="#e4e4e4" stroke-width="0.12">PUNCH</text>
<circle cx="782.30" cy="564.80" r="12.6" fill="#000" opacity="0.28" filter="url(#blur1)"/>
<circle cx="782.00" cy="564.00" r="12" fill="url(#wknob)"/>
<line x1="784.40" y1="568.16" x2="787.10" y2="572.83" stroke="#0c1a2c" stroke-width="2.4"/>
<text transform="translate(799.40,568.83) scale(0.85,1)" font-size="10.5" fill="#e4e4e4" font-weight="bold" text-anchor="start" letter-spacing="0.4" stroke="#e4e4e4" stroke-width="0.12">COMP</text>
<path d="M700,778 V592.3 Q700,589.3 703,589.3 H835 Q838,589.3 838,592.3 V778 Z" fill="#c5c5c5"/>
<polygon points="707,589.3 830.5,589.3 810,610.7 728.3,610.7" fill="#b5b5b5"/>
<text transform="translate(769.00,603.99) scale(0.97,1)" font-size="11.5" fill="#585858" font-weight="bold" text-anchor="middle" letter-spacing="0.3" stroke="#585858" stroke-width="0.12">PERCUSSION</text>
<circle cx="722.30" cy="633.80" r="12.6" fill="#000" opacity="0.28" filter="url(#blur1)"/>
<circle cx="722.00" cy="633.00" r="12" fill="url(#wknob)"/>
<line x1="722.00" y1="628.20" x2="722.00" y2="622.80" stroke="#0c1a2c" stroke-width="2.4"/>
<text transform="translate(722.00,658.83) scale(0.85,1)" font-size="10.5" fill="#1e1e1e" font-weight="bold" text-anchor="middle" letter-spacing="0.4" stroke="#1e1e1e" stroke-width="0.12">PAN</text>
<rect x="770.70" y="621.30" width="24.60" height="24.60" fill="#000" rx="2" opacity="0.35" filter="url(#blur1)"/>
<rect x="771.00" y="621.00" width="24.00" height="24.00" fill="url(#lbtn)" rx="2"/>
<rect x="800.70" y="621.30" width="24.60" height="24.60" fill="#000" rx="2" opacity="0.35" filter="url(#blur1)"/>
<rect x="801.00" y="621.00" width="24.00" height="24.00" fill="url(#lbtn)" rx="2"/>
<text x="783.00" y="637.01" font-size="11" fill="#222" font-weight="bold" text-anchor="middle" stroke="#222" stroke-width="0.12">M</text>
<text x="813.00" y="637.01" font-size="11" fill="#222" font-weight="bold" text-anchor="middle" stroke="#222" stroke-width="0.12">S</text>
<path d="M760,661.5 V654.5 H768" fill="none" stroke="#a8a8a8" stroke-width="1.6"/>
<path d="M760.5,760 V768.5 H769" fill="none" stroke="#a8a8a8" stroke-width="1.6"/>
<text x="761.30" y="678.04" font-size="10" fill="#a2a2a2" font-weight="bold" text-anchor="middle" stroke="#a2a2a2" stroke-width="0.12">S</text>
<text x="761.30" y="697.09" font-size="10" fill="#a2a2a2" font-weight="bold" text-anchor="middle" stroke="#a2a2a2" stroke-width="0.12">E</text>
<text x="761.30" y="716.14" font-size="10" fill="#a2a2a2" font-weight="bold" text-anchor="middle" stroke="#a2a2a2" stroke-width="0.12">N</text>
<text x="761.30" y="735.19" font-size="10" fill="#a2a2a2" font-weight="bold" text-anchor="middle" stroke="#a2a2a2" stroke-width="0.12">D</text>
<text x="761.30" y="754.25" font-size="10" fill="#a2a2a2" font-weight="bold" text-anchor="middle" stroke="#a2a2a2" stroke-width="0.12">S</text>
<circle cx="783.30" cy="667.80" r="12.6" fill="#000" opacity="0.28" filter="url(#blur1)"/>
<circle cx="783.00" cy="667.00" r="12" fill="url(#wknob)"/>
<line x1="779.07" y1="669.75" x2="774.64" y2="672.85" stroke="#0c1a2c" stroke-width="2.4"/>
<text transform="translate(800.60,670.83) scale(0.85,1)" font-size="10.5" fill="#1e1e1e" font-weight="bold" text-anchor="start" letter-spacing="0.4" stroke="#1e1e1e" stroke-width="0.12">REV A</text>
<circle cx="783.30" cy="697.80" r="12.6" fill="#000" opacity="0.28" filter="url(#blur1)"/>
<circle cx="783.00" cy="697.00" r="12" fill="url(#wknob)"/>
<line x1="780.60" y1="701.16" x2="777.90" y2="705.83" stroke="#0c1a2c" stroke-width="2.4"/>
<text transform="translate(800.60,700.83) scale(0.85,1)" font-size="10.5" fill="#1e1e1e" font-weight="bold" text-anchor="start" letter-spacing="0.4" stroke="#1e1e1e" stroke-width="0.12">REV B</text>
<circle cx="783.30" cy="727.80" r="12.6" fill="#000" opacity="0.28" filter="url(#blur1)"/>
<circle cx="783.00" cy="727.00" r="12" fill="url(#wknob)"/>
<line x1="780.60" y1="731.16" x2="777.90" y2="735.83" stroke="#0c1a2c" stroke-width="2.4"/>
<text transform="translate(800.60,730.83) scale(0.85,1)" font-size="10.5" fill="#1e1e1e" font-weight="bold" text-anchor="start" letter-spacing="0.4" stroke="#1e1e1e" stroke-width="0.12">DLY A</text>
<circle cx="781.30" cy="756.80" r="12.6" fill="#000" opacity="0.28" filter="url(#blur1)"/>
<circle cx="781.00" cy="756.00" r="12" fill="url(#wknob)"/>
<line x1="778.60" y1="760.16" x2="775.90" y2="764.83" stroke="#0c1a2c" stroke-width="2.4"/>
<text transform="translate(800.60,760.83) scale(0.85,1)" font-size="10.5" fill="#1e1e1e" font-weight="bold" text-anchor="start" letter-spacing="0.4" stroke="#1e1e1e" stroke-width="0.12">DLY B</text>
<rect x="710.30" y="669.20" width="18.60" height="98.80" fill="#5e5e5e" rx="2" stroke="#555" stroke-width="0.8"/>
<rect x="740.00" y="669.20" width="3.00" height="98.80" fill="#9e9e9e"/>
<rect x="734.00" y="670.00" width="15.00" height="27.00" fill="#000" rx="2" opacity="0.3" filter="url(#blur05)"/>
<rect x="734.00" y="669.00" width="15.00" height="27.00" fill="url(#fcap)" rx="2"/>
<rect x="736.00" y="682.00" width="11.00" height="1.00" fill="#8a8a8a"/>
<path d="M840,197 V74 Q840,71 843,71 H975 Q978,71 978,74 V197 Z" fill="#c5c5c5"/>
<polygon points="847,71 970.5,71 950,92.5 868.3,92.5" fill="#b5b5b5"/>
<text transform="translate(909.00,85.89) scale(0.97,1)" font-size="11.5" fill="#585858" font-weight="bold" text-anchor="middle" letter-spacing="0.3" stroke="#585858" stroke-width="0.12">SAMPLER 1</text>
<rect x="850.00" y="103.00" width="56.00" height="24.00" fill="#585858" rx="2.5"/>
<rect x="850.00" y="103.00" width="56.00" height="1.00" fill="#4a4a4a"/>
<text transform="translate(870.50,119.94) scale(0.95,1)" font-size="13" fill="#8cb8ff" font-weight="bold" text-anchor="middle" stroke="#8cb8ff" stroke-width="0.12">D#2</text>
<circle cx="896" cy="116" r="7.1" fill="#dedede"/>
<rect x="894.8" cy="0" y="121.6" width="2.4" height="2" fill="#555"/>
<circle cx="891.40" cy="116.00" r="1.05" fill="#555"/>
<circle cx="892.75" cy="112.75" r="1.05" fill="#555"/>
<circle cx="896.00" cy="111.40" r="1.05" fill="#555"/>
<circle cx="899.25" cy="112.75" r="1.05" fill="#555"/>
<circle cx="900.60" cy="116.00" r="1.05" fill="#555"/>
<rect x="912.00" y="103.00" width="56.00" height="24.00" fill="#585858" rx="2.5"/>
<rect x="912.00" y="103.00" width="56.00" height="1.00" fill="#4a4a4a"/>
<text transform="translate(932.50,119.94) scale(0.95,1)" font-size="13" fill="#8cb8ff" font-weight="bold" text-anchor="middle" stroke="#8cb8ff" stroke-width="0.12">B2</text>
<circle cx="958" cy="116" r="7.1" fill="#dedede"/>
<rect x="956.8" cy="0" y="121.6" width="2.4" height="2" fill="#555"/>
<circle cx="953.40" cy="116.00" r="1.05" fill="#555"/>
<circle cx="954.75" cy="112.75" r="1.05" fill="#555"/>
<circle cx="958.00" cy="111.40" r="1.05" fill="#555"/>
<circle cx="961.25" cy="112.75" r="1.05" fill="#555"/>
<circle cx="962.60" cy="116.00" r="1.05" fill="#555"/>
<text transform="translate(909.00,139.01) scale(0.85,1)" font-size="9.9" fill="#202020" font-weight="bold" text-anchor="middle" letter-spacing="0.6" stroke="#202020" stroke-width="0.12">NOTE RANGE</text>
<rect x="850.00" y="150.00" width="30.00" height="24.00" fill="#585858" rx="2.5"/>
<text transform="translate(865.00,167.22) scale(0.95,1)" font-size="10.2" fill="#8cb8ff" font-weight="bold" text-anchor="middle" stroke="#8cb8ff" stroke-width="0.12">1/16</text>
<rect x="887.20" y="161.60" width="5.60" height="2.40" fill="#202020"/>
<rect x="905.70" y="150.30" width="30.60" height="24.60" fill="#000" rx="2" opacity="0.35" filter="url(#blur1)"/>
<rect x="906.00" y="150.00" width="30.00" height="24.00" fill="url(#lbtn)" rx="2"/>
<rect x="941.70" y="150.30" width="30.60" height="24.60" fill="#000" rx="2" opacity="0.35" filter="url(#blur1)"/>
<rect x="942.00" y="150.00" width="30.00" height="24.00" fill="url(#lbtn)" rx="2"/>
<text transform="translate(921.00,165.65) scale(0.79,1)" font-size="10" fill="#1e1e1e" font-weight="bold" text-anchor="middle" letter-spacing="0.7" stroke="#1e1e1e" stroke-width="0.12">REP</text>
<text transform="translate(957.00,165.65) scale(0.81,1)" font-size="10" fill="#1e1e1e" font-weight="bold" text-anchor="middle" letter-spacing="0.7" stroke="#1e1e1e" stroke-width="0.12">FULL</text>
<text transform="translate(865.00,187.11) scale(0.85,1)" font-size="9.9" fill="#202020" font-weight="bold" text-anchor="middle" letter-spacing="0.6" stroke="#202020" stroke-width="0.12">RATE</text>
<rect x="840.00" y="197.00" width="138.00" height="26.00" fill="#3a3a3a"/>
<rect x="840.00" y="198.00" width="16.00" height="11.00" fill="url(#pbar)"/>
<rect x="840.00" y="210.00" width="16.00" height="11.50" fill="url(#pbar)"/>
<rect x="857.00" y="198.00" width="81.00" height="24.00" fill="url(#pbar)"/>
<rect x="939.00" y="198.00" width="19.00" height="24.00" fill="url(#pbar)"/>
<rect x="959.00" y="198.00" width="19.00" height="24.00" fill="url(#pbar)"/>
<polygon points="843.1,206 850.8,206 846.95,201.2" fill="#f0f0f0"/>
<polygon points="843.1,213 850.8,213 846.95,217.8" fill="#f0f0f0"/>
<text transform="translate(860.50,214.57) scale(0.96,1)" font-size="12" fill="#ececec" font-weight="bold" text-anchor="start" stroke="#ececec" stroke-width="0.12">Blepz</text>
<path d="M942.2,206.5 L948.2,203.7 L954.2,206.5 V213.3 L948.2,216 L942.2,213.3 Z" fill="#f0f0f0"/>
<path d="M942.2,206.5 L948.2,209 L954.2,206.5 M948.2,209 V216" fill="none" stroke="#6a6a6a" stroke-width="0.8"/>
<text x="945.2" y="213.2" font-size="5.5" font-weight="bold" fill="#777" text-anchor="middle">?</text>
<text x="951.2" y="213.2" font-size="5.5" font-weight="bold" fill="#777" text-anchor="middle">?</text>
<path d="M962.2,204.6 Q962.2,204 962.8000000000001,204 H971.5 L974.4000000000001,207 V215.4 Q974.4000000000001,216 973.8000000000001,216 H962.8000000000001 Q962.2,216 962.2,215.4 Z" fill="#f0f0f0"/>
<rect x="963.40" y="205.30" width="5.80" height="2.60" fill="#6e6e6e"/>
<circle cx="970.3000000000001" cy="211.9" r="1.9" fill="#6e6e6e"/>
<rect x="840.00" y="223.00" width="138.00" height="365.00" fill="#5f5f5f"/>
<rect x="843.20" y="226.00" width="131.50" height="208.20" fill="#3f3f3f" rx="4"/>
<rect x="843.20" y="226.00" width="131.50" height="5.00" fill="url(#ishadow)" rx="4"/>
<circle cx="867.00" cy="268.00" r="12.4" fill="none" stroke="#2e2e2e" stroke-width="0.8" stroke-dasharray="64.93 100" transform="rotate(120 867.00 268.00)" opacity="0.6"/>
<path d="M862.50,275.79 A9,9 0 1 1 871.50,275.79" fill="none" stroke="#858585" stroke-width="6.4"/>
<path d="M862.50,275.79 A9,9 0 0 1 859.54,273.03" fill="none" stroke="#80f288" stroke-width="6.4"/>
<text transform="translate(869.00,291.83) scale(0.86,1)" font-size="10.5" fill="#80f288" font-weight="normal" text-anchor="middle">REVERSE</text>
<circle cx="910.00" cy="268.00" r="12.4" fill="none" stroke="#2e2e2e" stroke-width="0.8" stroke-dasharray="64.93 100" transform="rotate(120 910.00 268.00)" opacity="0.6"/>
<path d="M905.50,275.79 A9,9 0 1 1 914.50,275.79" fill="none" stroke="#858585" stroke-width="6.4"/>
<path d="M910.00,259.00 A9,9 0 0 1 917.79,263.50" fill="none" stroke="#80f288" stroke-width="6.4"/>
<text transform="translate(910.00,291.83) scale(0.85,1)" font-size="10.5" fill="#cacaca" font-weight="bold" text-anchor="middle" letter-spacing="0.4" stroke="#cacaca" stroke-width="0.12">PITCH</text>
<circle cx="951.00" cy="268.00" r="12.4" fill="none" stroke="#2e2e2e" stroke-width="0.8" stroke-dasharray="64.93 100" transform="rotate(120 951.00 268.00)" opacity="0.6"/>
<path d="M946.50,275.79 A9,9 0 1 1 955.50,275.79" fill="none" stroke="#858585" stroke-width="6.4"/>
<text transform="translate(951.00,291.83) scale(0.85,1)" font-size="10.5" fill="#cacaca" font-weight="bold" text-anchor="middle" letter-spacing="0.4" stroke="#cacaca" stroke-width="0.12">FINE</text>
<circle cx="867.00" cy="326.00" r="12.4" fill="none" stroke="#2e2e2e" stroke-width="0.8" stroke-dasharray="64.93 100" transform="rotate(120 867.00 326.00)" opacity="0.6"/>
<path d="M862.50,333.79 A9,9 0 1 1 871.50,333.79" fill="none" stroke="#858585" stroke-width="6.4"/>
<text transform="translate(867.00,349.83) scale(0.85,1)" font-size="10.5" fill="#cacaca" font-weight="bold" text-anchor="middle" letter-spacing="0.4" stroke="#cacaca" stroke-width="0.12">ATTACK</text>
<circle cx="910.00" cy="326.00" r="12.4" fill="none" stroke="#2e2e2e" stroke-width="0.8" stroke-dasharray="64.93 100" transform="rotate(120 910.00 326.00)" opacity="0.6"/>
<path d="M905.50,333.79 A9,9 0 1 1 914.50,333.79" fill="none" stroke="#858585" stroke-width="6.4"/>
<path d="M905.50,333.79 A9,9 0 1 1 914.50,333.79" fill="none" stroke="#80f288" stroke-width="6.4"/>
<text transform="translate(910.00,349.83) scale(0.85,1)" font-size="10.5" fill="#cacaca" font-weight="bold" text-anchor="middle" letter-spacing="0.4" stroke="#cacaca" stroke-width="0.12">HOLD</text>
<circle cx="951.00" cy="326.00" r="12.4" fill="none" stroke="#2e2e2e" stroke-width="0.8" stroke-dasharray="64.93 100" transform="rotate(120 951.00 326.00)" opacity="0.6"/>
<path d="M946.50,333.79 A9,9 0 1 1 955.50,333.79" fill="none" stroke="#858585" stroke-width="6.4"/>
<path d="M946.50,333.79 A9,9 0 1 1 959.86,327.56" fill="none" stroke="#80f288" stroke-width="6.4"/>
<text transform="translate(951.00,349.83) scale(0.85,1)" font-size="10.5" fill="#cacaca" font-weight="bold" text-anchor="middle" letter-spacing="0.4" stroke="#cacaca" stroke-width="0.12">DECAY</text>
<circle cx="867.00" cy="384.00" r="12.4" fill="none" stroke="#2e2e2e" stroke-width="0.8" stroke-dasharray="64.93 100" transform="rotate(120 867.00 384.00)" opacity="0.6"/>
<path d="M862.50,391.79 A9,9 0 1 1 871.50,391.79" fill="none" stroke="#858585" stroke-width="6.4"/>
<text transform="translate(867.00,407.83) scale(0.85,1)" font-size="10.5" fill="#cacaca" font-weight="bold" text-anchor="middle" letter-spacing="0.4" stroke="#cacaca" stroke-width="0.12">AMNT</text>
<circle cx="910.00" cy="384.00" r="12.4" fill="none" stroke="#2e2e2e" stroke-width="0.8" stroke-dasharray="64.93 100" transform="rotate(120 910.00 384.00)" opacity="0.6"/>
<path d="M905.50,391.79 A9,9 0 1 1 914.50,391.79" fill="none" stroke="#858585" stroke-width="6.4"/>
<text transform="translate(910.00,407.83) scale(0.85,1)" font-size="10.5" fill="#cacaca" font-weight="bold" text-anchor="middle" letter-spacing="0.4" stroke="#cacaca" stroke-width="0.12">DECAY</text>
<circle cx="951.00" cy="384.00" r="12.4" fill="none" stroke="#2e2e2e" stroke-width="0.8" stroke-dasharray="64.93 100" transform="rotate(120 951.00 384.00)" opacity="0.6"/>
<path d="M946.50,391.79 A9,9 0 1 1 955.50,391.79" fill="none" stroke="#858585" stroke-width="6.4"/>
<text transform="translate(951.00,407.83) scale(0.85,1)" font-size="10.5" fill="#cacaca" font-weight="bold" text-anchor="middle" letter-spacing="0.4" stroke="#cacaca" stroke-width="0.12">CURVE</text>
<path d="M855,309.5 V303.5 H933.5" fill="none" stroke="#cfcfcf" stroke-width="1.3"/>
<text transform="translate(965.00,309.94) scale(0.92,1)" font-size="10" fill="#cfcfcf" font-weight="bold" text-anchor="end" font-style="italic" stroke="#cfcfcf" stroke-width="0.12">AMP</text>
<path d="M855,367.5 V361.5 H933.5" fill="none" stroke="#cfcfcf" stroke-width="1.3"/>
<text transform="translate(964.00,367.94) scale(0.92,1)" font-size="10" fill="#cfcfcf" font-weight="bold" text-anchor="end" font-style="italic" stroke="#cfcfcf" stroke-width="0.12">PITCH</text>
<rect x="847.00" y="230.20" width="124.00" height="18.00" fill="none" rx="1.5" stroke="#8a8a8a" stroke-width="1.6"/>
<rect x="936.60" y="230.20" width="1.50" height="18.00" fill="#8a8a8a"/>
<rect x="952.90" y="230.20" width="1.50" height="18.00" fill="#8a8a8a"/>
<path d="M942.3,239.2 L947.3,235.7 V242.7 Z" fill="#8a8a8a"/>
<path d="M963.9,239.2 L958.9,235.7 V242.7 Z" fill="#8a8a8a"/>
<text transform="translate(849.00,243.03) scale(0.92,1)" font-size="10.5" fill="#80f288" font-weight="bold" text-anchor="start" stroke="#80f288" stroke-width="0.12">909HT_1</text>
<text transform="translate(909.30,424.83) scale(0.88,1)" font-size="10.5" fill="#80f288" font-weight="bold" text-anchor="middle" stroke="#80f288" stroke-width="0.12">SAMPLER</text>
<rect x="840.00" y="494.00" width="138.00" height="1.00" fill="#4d4d4d"/>
<rect x="840.00" y="543.00" width="138.00" height="1.00" fill="#4d4d4d"/>
<rect x="850.20" y="444.80" width="13.00" height="13.00" fill="#2a2a2a" rx="2" opacity="0.45" filter="url(#blur05)"/>
<rect x="850.00" y="444.00" width="13.00" height="13.00" fill="#8cbaff" rx="2"/>
<text transform="translate(866.60,455.23) scale(0.85,1)" font-size="10.5" fill="#8cbaff" font-weight="bold" text-anchor="start" letter-spacing="0.4" stroke="#8cbaff" stroke-width="0.12">DSRT</text>
<rect x="850.20" y="460.80" width="13.00" height="13.00" fill="#2a2a2a" rx="2" opacity="0.45" filter="url(#blur05)"/>
<rect x="850.00" y="460.00" width="13.00" height="13.00" fill="#c4c4c4" rx="2"/>
<text transform="translate(866.60,471.23) scale(0.85,1)" font-size="10.5" fill="#e2e2e2" font-weight="bold" text-anchor="start" letter-spacing="0.4" stroke="#e2e2e2" stroke-width="0.12">BIT</text>
<rect x="850.20" y="476.80" width="13.00" height="13.00" fill="#2a2a2a" rx="2" opacity="0.45" filter="url(#blur05)"/>
<rect x="850.00" y="476.00" width="13.00" height="13.00" fill="#8cbaff" rx="2"/>
<text transform="translate(866.60,487.23) scale(0.85,1)" font-size="10.5" fill="#e2e2e2" font-weight="bold" text-anchor="start" letter-spacing="0.4" stroke="#e2e2e2" stroke-width="0.12">DECI</text>
<path d="M893.5,467 H906.8" fill="none" stroke="#8c8c8c" stroke-width="1.6"/>
<path d="M893.5,482 H901.6 L908.8,474.6" fill="none" stroke="#8c8c8c" stroke-width="1.6"/>
<path d="M893.5,452 H901.6 L908.8,459.3" fill="none" stroke="#7fb4ff" stroke-width="2"/>
<circle cx="922.30" cy="467.80" r="12.6" fill="#000" opacity="0.28" filter="url(#blur1)"/>
<circle cx="922.00" cy="467.00" r="12" fill="url(#wknob)"/>
<line x1="918.61" y1="463.61" x2="914.79" y2="459.79" stroke="#0c1a2c" stroke-width="2.4"/>
<text transform="translate(939.90,471.83) scale(0.85,1)" font-size="10.5" fill="#e4e4e4" font-weight="bold" text-anchor="start" letter-spacing="0.4" stroke="#e4e4e4" stroke-width="0.12">AMNT</text>
<rect x="849.70" y="500.30" width="24.60" height="24.60" fill="#000" rx="2" opacity="0.35" filter="url(#blur1)"/>
<rect x="850.00" y="500.00" width="24.00" height="24.00" fill="url(#lbtn)" rx="2"/>
<text transform="translate(862.00,515.83) scale(0.9,1)" font-size="10.5" fill="#111" font-weight="bold" text-anchor="middle" stroke="#111" stroke-width="0.12">HP</text>
<circle cx="922.30" cy="512.80" r="12.6" fill="#000" opacity="0.28" filter="url(#blur1)"/>
<circle cx="922.00" cy="512.00" r="12" fill="url(#wknob)"/>
<line x1="918.91" y1="508.32" x2="915.44" y2="504.19" stroke="#0c1a2c" stroke-width="2.4"/>
<circle cx="956.30" cy="512.80" r="12.6" fill="#000" opacity="0.28" filter="url(#blur1)"/>
<circle cx="956.00" cy="512.00" r="12" fill="url(#wknob)"/>
<line x1="951.20" y1="512.00" x2="945.80" y2="512.00" stroke="#0c1a2c" stroke-width="2.4"/>
<text transform="translate(862.60,538.83) scale(0.85,1)" font-size="10.5" fill="#e4e4e4" font-weight="bold" text-anchor="middle" letter-spacing="0.4" stroke="#e4e4e4" stroke-width="0.12">TYPE</text>
<text transform="translate(922.00,538.83) scale(0.85,1)" font-size="10.5" fill="#e4e4e4" font-weight="bold" text-anchor="middle" letter-spacing="0.4" stroke="#e4e4e4" stroke-width="0.12">CUT</text>
<text transform="translate(956.00,538.83) scale(0.85,1)" font-size="10.5" fill="#e4e4e4" font-weight="bold" text-anchor="middle" letter-spacing="0.4" stroke="#e4e4e4" stroke-width="0.12">RES</text>
<rect x="850.20" y="549.80" width="13.00" height="13.00" fill="#2a2a2a" rx="2" opacity="0.45" filter="url(#blur05)"/>
<rect x="850.00" y="549.00" width="13.00" height="13.00" fill="#8cbaff" rx="2"/>
<rect x="850.20" y="565.80" width="13.00" height="13.00" fill="#2a2a2a" rx="2" opacity="0.45" filter="url(#blur05)"/>
<rect x="850.00" y="565.00" width="13.00" height="13.00" fill="#c4c4c4" rx="2"/>
<text transform="translate(866.60,560.43) scale(0.85,1)" font-size="10.5" fill="#e4e4e4" font-weight="bold" text-anchor="start" letter-spacing="0.4" stroke="#e4e4e4" stroke-width="0.12">FAST</text>
<text transform="translate(866.60,576.43) scale(0.85,1)" font-size="10.5" fill="#e4e4e4" font-weight="bold" text-anchor="start" letter-spacing="0.4" stroke="#e4e4e4" stroke-width="0.12">PUNCH</text>
<circle cx="922.30" cy="564.80" r="12.6" fill="#000" opacity="0.28" filter="url(#blur1)"/>
<circle cx="922.00" cy="564.00" r="12" fill="url(#wknob)"/>
<line x1="919.60" y1="568.16" x2="916.90" y2="572.83" stroke="#0c1a2c" stroke-width="2.4"/>
<text transform="translate(939.40,568.83) scale(0.85,1)" font-size="10.5" fill="#e4e4e4" font-weight="bold" text-anchor="start" letter-spacing="0.4" stroke="#e4e4e4" stroke-width="0.12">COMP</text>
<path d="M840,778 V592.3 Q840,589.3 843,589.3 H975 Q978,589.3 978,592.3 V778 Z" fill="#c5c5c5"/>
<polygon points="847,589.3 970.5,589.3 950,610.7 868.3,610.7" fill="#b5b5b5"/>
<text transform="translate(909.00,603.99) scale(0.97,1)" font-size="11.5" fill="#585858" font-weight="bold" text-anchor="middle" letter-spacing="0.3" stroke="#585858" stroke-width="0.12">SAMPLER 1</text>
<circle cx="862.30" cy="633.80" r="12.6" fill="#000" opacity="0.28" filter="url(#blur1)"/>
<circle cx="862.00" cy="633.00" r="12" fill="url(#wknob)"/>
<line x1="862.00" y1="628.20" x2="862.00" y2="622.80" stroke="#0c1a2c" stroke-width="2.4"/>
<text transform="translate(862.00,658.83) scale(0.85,1)" font-size="10.5" fill="#1e1e1e" font-weight="bold" text-anchor="middle" letter-spacing="0.4" stroke="#1e1e1e" stroke-width="0.12">PAN</text>
<rect x="910.70" y="621.30" width="24.60" height="24.60" fill="#000" rx="2" opacity="0.35" filter="url(#blur1)"/>
<rect x="911.00" y="621.00" width="24.00" height="24.00" fill="url(#lbtn)" rx="2"/>
<rect x="940.70" y="621.30" width="24.60" height="24.60" fill="#000" rx="2" opacity="0.35" filter="url(#blur1)"/>
<rect x="941.00" y="621.00" width="24.00" height="24.00" fill="url(#lbtn)" rx="2"/>
<text x="923.00" y="637.01" font-size="11" fill="#222" font-weight="bold" text-anchor="middle" stroke="#222" stroke-width="0.12">M</text>
<text x="953.00" y="637.01" font-size="11" fill="#222" font-weight="bold" text-anchor="middle" stroke="#222" stroke-width="0.12">S</text>
<path d="M900,661.5 V654.5 H908" fill="none" stroke="#a8a8a8" stroke-width="1.6"/>
<path d="M900.5,760 V768.5 H909" fill="none" stroke="#a8a8a8" stroke-width="1.6"/>
<text x="901.30" y="678.04" font-size="10" fill="#a2a2a2" font-weight="bold" text-anchor="middle" stroke="#a2a2a2" stroke-width="0.12">S</text>
<text x="901.30" y="697.09" font-size="10" fill="#a2a2a2" font-weight="bold" text-anchor="middle" stroke="#a2a2a2" stroke-width="0.12">E</text>
<text x="901.30" y="716.14" font-size="10" fill="#a2a2a2" font-weight="bold" text-anchor="middle" stroke="#a2a2a2" stroke-width="0.12">N</text>
<text x="901.30" y="735.19" font-size="10" fill="#a2a2a2" font-weight="bold" text-anchor="middle" stroke="#a2a2a2" stroke-width="0.12">D</text>
<text x="901.30" y="754.25" font-size="10" fill="#a2a2a2" font-weight="bold" text-anchor="middle" stroke="#a2a2a2" stroke-width="0.12">S</text>
<circle cx="923.30" cy="667.80" r="12.6" fill="#000" opacity="0.28" filter="url(#blur1)"/>
<circle cx="923.00" cy="667.00" r="12" fill="url(#wknob)"/>
<line x1="920.60" y1="671.16" x2="917.90" y2="675.83" stroke="#0c1a2c" stroke-width="2.4"/>
<text transform="translate(940.60,670.83) scale(0.85,1)" font-size="10.5" fill="#1e1e1e" font-weight="bold" text-anchor="start" letter-spacing="0.4" stroke="#1e1e1e" stroke-width="0.12">REV A</text>
<circle cx="923.30" cy="697.80" r="12.6" fill="#000" opacity="0.28" filter="url(#blur1)"/>
<circle cx="923.00" cy="697.00" r="12" fill="url(#wknob)"/>
<line x1="918.36" y1="695.76" x2="913.15" y2="694.36" stroke="#0c1a2c" stroke-width="2.4"/>
<text transform="translate(940.60,700.83) scale(0.85,1)" font-size="10.5" fill="#1e1e1e" font-weight="bold" text-anchor="start" letter-spacing="0.4" stroke="#1e1e1e" stroke-width="0.12">REV B</text>
<circle cx="923.30" cy="727.80" r="12.6" fill="#000" opacity="0.28" filter="url(#blur1)"/>
<circle cx="923.00" cy="727.00" r="12" fill="url(#wknob)"/>
<line x1="920.60" y1="731.16" x2="917.90" y2="735.83" stroke="#0c1a2c" stroke-width="2.4"/>
<text transform="translate(940.60,730.83) scale(0.85,1)" font-size="10.5" fill="#1e1e1e" font-weight="bold" text-anchor="start" letter-spacing="0.4" stroke="#1e1e1e" stroke-width="0.12">DLY A</text>
<circle cx="921.30" cy="756.80" r="12.6" fill="#000" opacity="0.28" filter="url(#blur1)"/>
<circle cx="921.00" cy="756.00" r="12" fill="url(#wknob)"/>
<line x1="918.60" y1="760.16" x2="915.90" y2="764.83" stroke="#0c1a2c" stroke-width="2.4"/>
<text transform="translate(940.60,760.83) scale(0.85,1)" font-size="10.5" fill="#1e1e1e" font-weight="bold" text-anchor="start" letter-spacing="0.4" stroke="#1e1e1e" stroke-width="0.12">DLY B</text>
<rect x="850.30" y="669.20" width="18.60" height="98.80" fill="#5e5e5e" rx="2" stroke="#555" stroke-width="0.8"/>
<rect x="880.00" y="669.20" width="3.00" height="98.80" fill="#9e9e9e"/>
<rect x="874.00" y="705.70" width="15.00" height="27.00" fill="#000" rx="2" opacity="0.3" filter="url(#blur05)"/>
<rect x="874.00" y="704.70" width="15.00" height="27.00" fill="url(#fcap)" rx="2"/>
<rect x="876.00" y="717.70" width="11.00" height="1.00" fill="#8a8a8a"/>
<path d="M980,197 V74 Q980,71 983,71 H1115 Q1118,71 1118,74 V197 Z" fill="#c5c5c5"/>
<polygon points="987,71 1110.5,71 1090,92.5 1008.3,92.5" fill="#b5b5b5"/>
<text transform="translate(1049.00,85.89) scale(0.97,1)" font-size="11.5" fill="#585858" font-weight="bold" text-anchor="middle" letter-spacing="0.3" stroke="#585858" stroke-width="0.12">SAMPLER 2</text>
<rect x="990.00" y="103.00" width="56.00" height="24.00" fill="#585858" rx="2.5"/>
<rect x="990.00" y="103.00" width="56.00" height="1.00" fill="#4a4a4a"/>
<text transform="translate(1010.50,119.94) scale(0.95,1)" font-size="13" fill="#8cb8ff" font-weight="bold" text-anchor="middle" stroke="#8cb8ff" stroke-width="0.12">A#-1</text>
<circle cx="1036" cy="116" r="7.1" fill="#dedede"/>
<rect x="1034.8" cy="0" y="121.6" width="2.4" height="2" fill="#555"/>
<circle cx="1031.40" cy="116.00" r="1.05" fill="#555"/>
<circle cx="1032.75" cy="112.75" r="1.05" fill="#555"/>
<circle cx="1036.00" cy="111.40" r="1.05" fill="#555"/>
<circle cx="1039.25" cy="112.75" r="1.05" fill="#555"/>
<circle cx="1040.60" cy="116.00" r="1.05" fill="#555"/>
<rect x="1052.00" y="103.00" width="56.00" height="24.00" fill="#585858" rx="2.5"/>
<rect x="1052.00" y="103.00" width="56.00" height="1.00" fill="#4a4a4a"/>
<text transform="translate(1072.50,119.94) scale(0.95,1)" font-size="13" fill="#8cb8ff" font-weight="bold" text-anchor="middle" stroke="#8cb8ff" stroke-width="0.12">A#0</text>
<circle cx="1098" cy="116" r="7.1" fill="#dedede"/>
<rect x="1096.8" cy="0" y="121.6" width="2.4" height="2" fill="#555"/>
<circle cx="1093.40" cy="116.00" r="1.05" fill="#555"/>
<circle cx="1094.75" cy="112.75" r="1.05" fill="#555"/>
<circle cx="1098.00" cy="111.40" r="1.05" fill="#555"/>
<circle cx="1101.25" cy="112.75" r="1.05" fill="#555"/>
<circle cx="1102.60" cy="116.00" r="1.05" fill="#555"/>
<text transform="translate(1049.00,139.01) scale(0.85,1)" font-size="9.9" fill="#202020" font-weight="bold" text-anchor="middle" letter-spacing="0.6" stroke="#202020" stroke-width="0.12">NOTE RANGE</text>
<rect x="990.00" y="150.00" width="30.00" height="24.00" fill="#585858" rx="2.5"/>
<text transform="translate(1005.00,167.22) scale(0.95,1)" font-size="10.2" fill="#8cb8ff" font-weight="bold" text-anchor="middle" stroke="#8cb8ff" stroke-width="0.12">1/16</text>
<rect x="1027.20" y="161.60" width="5.60" height="2.40" fill="#202020"/>
<rect x="1045.70" y="150.30" width="30.60" height="24.60" fill="#000" rx="2" opacity="0.35" filter="url(#blur1)"/>
<rect x="1046.00" y="150.00" width="30.00" height="24.00" fill="url(#lbtn)" rx="2"/>
<rect x="1081.70" y="150.30" width="30.60" height="24.60" fill="#000" rx="2" opacity="0.35" filter="url(#blur1)"/>
<rect x="1082.00" y="150.00" width="30.00" height="24.00" fill="url(#lbtn)" rx="2"/>
<text transform="translate(1061.00,165.65) scale(0.79,1)" font-size="10" fill="#1e1e1e" font-weight="bold" text-anchor="middle" letter-spacing="0.7" stroke="#1e1e1e" stroke-width="0.12">REP</text>
<text transform="translate(1097.00,165.65) scale(0.81,1)" font-size="10" fill="#1e1e1e" font-weight="bold" text-anchor="middle" letter-spacing="0.7" stroke="#1e1e1e" stroke-width="0.12">FULL</text>
<text transform="translate(1005.00,187.11) scale(0.85,1)" font-size="9.9" fill="#202020" font-weight="bold" text-anchor="middle" letter-spacing="0.6" stroke="#202020" stroke-width="0.12">RATE</text>
<rect x="980.00" y="197.00" width="138.00" height="26.00" fill="#3a3a3a"/>
<rect x="980.00" y="198.00" width="16.00" height="11.00" fill="url(#pbar)"/>
<rect x="980.00" y="210.00" width="16.00" height="11.50" fill="url(#pbar)"/>
<rect x="997.00" y="198.00" width="81.00" height="24.00" fill="url(#pbar)"/>
<rect x="1079.00" y="198.00" width="19.00" height="24.00" fill="url(#pbar)"/>
<rect x="1099.00" y="198.00" width="19.00" height="24.00" fill="url(#pbar)"/>
<polygon points="983.1,206 990.8,206 986.95,201.2" fill="#f0f0f0"/>
<polygon points="983.1,213 990.8,213 986.95,217.8" fill="#f0f0f0"/>
<text transform="translate(1000.50,214.57) scale(0.96,1)" font-size="12" fill="#ececec" font-weight="bold" text-anchor="start" stroke="#ececec" stroke-width="0.12">Tremble</text>
<path d="M1082.2,206.5 L1088.2,203.7 L1094.2,206.5 V213.3 L1088.2,216 L1082.2,213.3 Z" fill="#f0f0f0"/>
<path d="M1082.2,206.5 L1088.2,209 L1094.2,206.5 M1088.2,209 V216" fill="none" stroke="#6a6a6a" stroke-width="0.8"/>
<text x="1085.2" y="213.2" font-size="5.5" font-weight="bold" fill="#777" text-anchor="middle">?</text>
<text x="1091.2" y="213.2" font-size="5.5" font-weight="bold" fill="#777" text-anchor="middle">?</text>
<path d="M1102.2,204.6 Q1102.2,204 1102.8,204 H1111.5 L1114.4,207 V215.4 Q1114.4,216 1113.8,216 H1102.8 Q1102.2,216 1102.2,215.4 Z" fill="#f0f0f0"/>
<rect x="1103.40" y="205.30" width="5.80" height="2.60" fill="#6e6e6e"/>
<circle cx="1110.3" cy="211.9" r="1.9" fill="#6e6e6e"/>
<rect x="980.00" y="223.00" width="138.00" height="365.00" fill="#5f5f5f"/>
<rect x="983.20" y="226.00" width="131.50" height="208.20" fill="#3f3f3f" rx="4"/>
<rect x="983.20" y="226.00" width="131.50" height="5.00" fill="url(#ishadow)" rx="4"/>
<circle cx="1007.00" cy="268.00" r="12.4" fill="none" stroke="#2e2e2e" stroke-width="0.8" stroke-dasharray="64.93 100" transform="rotate(120 1007.00 268.00)" opacity="0.6"/>
<path d="M1002.50,275.79 A9,9 0 1 1 1011.50,275.79" fill="none" stroke="#858585" stroke-width="6.4"/>
<text transform="translate(1009.00,291.83) scale(0.86,1)" font-size="10.5" fill="#80f288" font-weight="normal" text-anchor="middle">FORWARD</text>
<circle cx="1050.00" cy="268.00" r="12.4" fill="none" stroke="#2e2e2e" stroke-width="0.8" stroke-dasharray="64.93 100" transform="rotate(120 1050.00 268.00)" opacity="0.6"/>
<path d="M1045.50,275.79 A9,9 0 1 1 1054.50,275.79" fill="none" stroke="#858585" stroke-width="6.4"/>
<path d="M1048.13,259.20 A9,9 0 0 1 1050.00,259.00" fill="none" stroke="#80f288" stroke-width="6.4"/>
<text transform="translate(1050.00,291.83) scale(0.85,1)" font-size="10.5" fill="#cacaca" font-weight="bold" text-anchor="middle" letter-spacing="0.4" stroke="#cacaca" stroke-width="0.12">PITCH</text>
<circle cx="1091.00" cy="268.00" r="12.4" fill="none" stroke="#2e2e2e" stroke-width="0.8" stroke-dasharray="64.93 100" transform="rotate(120 1091.00 268.00)" opacity="0.6"/>
<path d="M1086.50,275.79 A9,9 0 1 1 1095.50,275.79" fill="none" stroke="#858585" stroke-width="6.4"/>
<text transform="translate(1091.00,291.83) scale(0.85,1)" font-size="10.5" fill="#cacaca" font-weight="bold" text-anchor="middle" letter-spacing="0.4" stroke="#cacaca" stroke-width="0.12">FINE</text>
<circle cx="1007.00" cy="326.00" r="12.4" fill="none" stroke="#2e2e2e" stroke-width="0.8" stroke-dasharray="64.93 100" transform="rotate(120 1007.00 326.00)" opacity="0.6"/>
<path d="M1002.50,333.79 A9,9 0 1 1 1011.50,333.79" fill="none" stroke="#858585" stroke-width="6.4"/>
<text transform="translate(1007.00,349.83) scale(0.85,1)" font-size="10.5" fill="#cacaca" font-weight="bold" text-anchor="middle" letter-spacing="0.4" stroke="#cacaca" stroke-width="0.12">ATTACK</text>
<circle cx="1050.00" cy="326.00" r="12.4" fill="none" stroke="#2e2e2e" stroke-width="0.8" stroke-dasharray="64.93 100" transform="rotate(120 1050.00 326.00)" opacity="0.6"/>
<path d="M1045.50,333.79 A9,9 0 1 1 1054.50,333.79" fill="none" stroke="#858585" stroke-width="6.4"/>
<path d="M1045.50,333.79 A9,9 0 1 1 1054.50,333.79" fill="none" stroke="#80f288" stroke-width="6.4"/>
<text transform="translate(1050.00,349.83) scale(0.85,1)" font-size="10.5" fill="#cacaca" font-weight="bold" text-anchor="middle" letter-spacing="0.4" stroke="#cacaca" stroke-width="0.12">HOLD</text>
<circle cx="1091.00" cy="326.00" r="12.4" fill="none" stroke="#2e2e2e" stroke-width="0.8" stroke-dasharray="64.93 100" transform="rotate(120 1091.00 326.00)" opacity="0.6"/>
<path d="M1086.50,333.79 A9,9 0 1 1 1095.50,333.79" fill="none" stroke="#858585" stroke-width="6.4"/>
<path d="M1086.50,333.79 A9,9 0 1 1 1099.86,327.56" fill="none" stroke="#80f288" stroke-width="6.4"/>
<text transform="translate(1091.00,349.83) scale(0.85,1)" font-size="10.5" fill="#cacaca" font-weight="bold" text-anchor="middle" letter-spacing="0.4" stroke="#cacaca" stroke-width="0.12">DECAY</text>
<circle cx="1007.00" cy="384.00" r="12.4" fill="none" stroke="#2e2e2e" stroke-width="0.8" stroke-dasharray="64.93 100" transform="rotate(120 1007.00 384.00)" opacity="0.6"/>
<path d="M1002.50,391.79 A9,9 0 1 1 1011.50,391.79" fill="none" stroke="#858585" stroke-width="6.4"/>
<text transform="translate(1007.00,407.83) scale(0.85,1)" font-size="10.5" fill="#cacaca" font-weight="bold" text-anchor="middle" letter-spacing="0.4" stroke="#cacaca" stroke-width="0.12">AMNT</text>
<circle cx="1050.00" cy="384.00" r="12.4" fill="none" stroke="#2e2e2e" stroke-width="0.8" stroke-dasharray="64.93 100" transform="rotate(120 1050.00 384.00)" opacity="0.6"/>
<path d="M1045.50,391.79 A9,9 0 1 1 1054.50,391.79" fill="none" stroke="#858585" stroke-width="6.4"/>
<text transform="translate(1050.00,407.83) scale(0.85,1)" font-size="10.5" fill="#cacaca" font-weight="bold" text-anchor="middle" letter-spacing="0.4" stroke="#cacaca" stroke-width="0.12">DECAY</text>
<circle cx="1091.00" cy="384.00" r="12.4" fill="none" stroke="#2e2e2e" stroke-width="0.8" stroke-dasharray="64.93 100" transform="rotate(120 1091.00 384.00)" opacity="0.6"/>
<path d="M1086.50,391.79 A9,9 0 1 1 1095.50,391.79" fill="none" stroke="#858585" stroke-width="6.4"/>
<text transform="translate(1091.00,407.83) scale(0.85,1)" font-size="10.5" fill="#cacaca" font-weight="bold" text-anchor="middle" letter-spacing="0.4" stroke="#cacaca" stroke-width="0.12">CURVE</text>
<path d="M995,309.5 V303.5 H1073.5" fill="none" stroke="#cfcfcf" stroke-width="1.3"/>
<text transform="translate(1105.00,309.94) scale(0.92,1)" font-size="10" fill="#cfcfcf" font-weight="bold" text-anchor="end" font-style="italic" stroke="#cfcfcf" stroke-width="0.12">AMP</text>
<path d="M995,367.5 V361.5 H1073.5" fill="none" stroke="#cfcfcf" stroke-width="1.3"/>
<text transform="translate(1104.00,367.94) scale(0.92,1)" font-size="10" fill="#cfcfcf" font-weight="bold" text-anchor="end" font-style="italic" stroke="#cfcfcf" stroke-width="0.12">PITCH</text>
<rect x="987.00" y="230.20" width="124.00" height="18.00" fill="none" rx="1.5" stroke="#8a8a8a" stroke-width="1.6"/>
<rect x="1076.60" y="230.20" width="1.50" height="18.00" fill="#8a8a8a"/>
<rect x="1092.90" y="230.20" width="1.50" height="18.00" fill="#8a8a8a"/>
<path d="M1082.3,239.2 L1087.3,235.7 V242.7 Z" fill="#8a8a8a"/>
<path d="M1103.9,239.2 L1098.9,235.7 V242.7 Z" fill="#8a8a8a"/>
<text transform="translate(989.00,243.03) scale(0.92,1)" font-size="10.5" fill="#80f288" font-weight="bold" text-anchor="start" stroke="#80f288" stroke-width="0.12">Tremble_Gm7</text>
<text transform="translate(1049.30,424.83) scale(0.88,1)" font-size="10.5" fill="#80f288" font-weight="bold" text-anchor="middle" stroke="#80f288" stroke-width="0.12">SAMPLER</text>
<rect x="980.00" y="494.00" width="138.00" height="1.00" fill="#4d4d4d"/>
<rect x="980.00" y="543.00" width="138.00" height="1.00" fill="#4d4d4d"/>
<rect x="990.20" y="444.80" width="13.00" height="13.00" fill="#2a2a2a" rx="2" opacity="0.45" filter="url(#blur05)"/>
<rect x="990.00" y="444.00" width="13.00" height="13.00" fill="#c4c4c4" rx="2"/>
<text transform="translate(1006.60,455.23) scale(0.85,1)" font-size="10.5" fill="#e2e2e2" font-weight="bold" text-anchor="start" letter-spacing="0.4" stroke="#e2e2e2" stroke-width="0.12">DSRT</text>
<rect x="990.20" y="460.80" width="13.00" height="13.00" fill="#2a2a2a" rx="2" opacity="0.45" filter="url(#blur05)"/>
<rect x="990.00" y="460.00" width="13.00" height="13.00" fill="#c4c4c4" rx="2"/>
<text transform="translate(1006.60,471.23) scale(0.85,1)" font-size="10.5" fill="#8cbaff" font-weight="bold" text-anchor="start" letter-spacing="0.4" stroke="#8cbaff" stroke-width="0.12">BIT</text>
<rect x="990.20" y="476.80" width="13.00" height="13.00" fill="#2a2a2a" rx="2" opacity="0.45" filter="url(#blur05)"/>
<rect x="990.00" y="476.00" width="13.00" height="13.00" fill="#c4c4c4" rx="2"/>
<text transform="translate(1006.60,487.23) scale(0.85,1)" font-size="10.5" fill="#e2e2e2" font-weight="bold" text-anchor="start" letter-spacing="0.4" stroke="#e2e2e2" stroke-width="0.12">DECI</text>
<path d="M1033.5,452 H1041.6 L1048.8,459.3" fill="none" stroke="#8c8c8c" stroke-width="1.6"/>
<path d="M1033.5,482 H1041.6 L1048.8,474.6" fill="none" stroke="#8c8c8c" stroke-width="1.6"/>
<path d="M1033.5,467 H1046.8" fill="none" stroke="#7fb4ff" stroke-width="2"/>
<circle cx="1062.30" cy="467.80" r="12.6" fill="#000" opacity="0.28" filter="url(#blur1)"/>
<circle cx="1062.00" cy="467.00" r="12" fill="url(#wknob)"/>
<line x1="1059.60" y1="471.16" x2="1056.90" y2="475.83" stroke="#0c1a2c" stroke-width="2.4"/>
<text transform="translate(1079.90,471.83) scale(0.85,1)" font-size="10.5" fill="#e4e4e4" font-weight="bold" text-anchor="start" letter-spacing="0.4" stroke="#e4e4e4" stroke-width="0.12">AMNT</text>
<rect x="989.70" y="500.30" width="24.60" height="24.60" fill="#000" rx="2" opacity="0.35" filter="url(#blur1)"/>
<rect x="990.00" y="500.00" width="24.00" height="24.00" fill="url(#lbtn)" rx="2"/>
<text transform="translate(1002.00,515.83) scale(0.9,1)" font-size="10.5" fill="#111" font-weight="bold" text-anchor="middle" stroke="#111" stroke-width="0.12">LP</text>
<circle cx="1062.30" cy="512.80" r="12.6" fill="#000" opacity="0.28" filter="url(#blur1)"/>
<circle cx="1062.00" cy="512.00" r="12" fill="url(#wknob)"/>
<line x1="1064.40" y1="516.16" x2="1067.10" y2="520.83" stroke="#0c1a2c" stroke-width="2.4"/>
<circle cx="1096.30" cy="512.80" r="12.6" fill="#000" opacity="0.28" filter="url(#blur1)"/>
<circle cx="1096.00" cy="512.00" r="12" fill="url(#wknob)"/>
<line x1="1093.60" y1="516.16" x2="1090.90" y2="520.83" stroke="#0c1a2c" stroke-width="2.4"/>
<text transform="translate(1002.60,538.83) scale(0.85,1)" font-size="10.5" fill="#e4e4e4" font-weight="bold" text-anchor="middle" letter-spacing="0.4" stroke="#e4e4e4" stroke-width="0.12">TYPE</text>
<text transform="translate(1062.00,538.83) scale(0.85,1)" font-size="10.5" fill="#e4e4e4" font-weight="bold" text-anchor="middle" letter-spacing="0.4" stroke="#e4e4e4" stroke-width="0.12">CUT</text>
<text transform="translate(1096.00,538.83) scale(0.85,1)" font-size="10.5" fill="#e4e4e4" font-weight="bold" text-anchor="middle" letter-spacing="0.4" stroke="#e4e4e4" stroke-width="0.12">RES</text>
<rect x="990.20" y="549.80" width="13.00" height="13.00" fill="#2a2a2a" rx="2" opacity="0.45" filter="url(#blur05)"/>
<rect x="990.00" y="549.00" width="13.00" height="13.00" fill="#8cbaff" rx="2"/>
<rect x="990.20" y="565.80" width="13.00" height="13.00" fill="#2a2a2a" rx="2" opacity="0.45" filter="url(#blur05)"/>
<rect x="990.00" y="565.00" width="13.00" height="13.00" fill="#c4c4c4" rx="2"/>
<text transform="translate(1006.60,560.43) scale(0.85,1)" font-size="10.5" fill="#e4e4e4" font-weight="bold" text-anchor="start" letter-spacing="0.4" stroke="#e4e4e4" stroke-width="0.12">FAST</text>
<text transform="translate(1006.60,576.43) scale(0.85,1)" font-size="10.5" fill="#e4e4e4" font-weight="bold" text-anchor="start" letter-spacing="0.4" stroke="#e4e4e4" stroke-width="0.12">PUNCH</text>
<circle cx="1062.30" cy="564.80" r="12.6" fill="#000" opacity="0.28" filter="url(#blur1)"/>
<circle cx="1062.00" cy="564.00" r="12" fill="url(#wknob)"/>
<line x1="1059.60" y1="568.16" x2="1056.90" y2="572.83" stroke="#0c1a2c" stroke-width="2.4"/>
<text transform="translate(1079.40,568.83) scale(0.85,1)" font-size="10.5" fill="#e4e4e4" font-weight="bold" text-anchor="start" letter-spacing="0.4" stroke="#e4e4e4" stroke-width="0.12">COMP</text>
<path d="M980,778 V592.3 Q980,589.3 983,589.3 H1115 Q1118,589.3 1118,592.3 V778 Z" fill="#c5c5c5"/>
<polygon points="987,589.3 1110.5,589.3 1090,610.7 1008.3,610.7" fill="#b5b5b5"/>
<text transform="translate(1049.00,603.99) scale(0.97,1)" font-size="11.5" fill="#585858" font-weight="bold" text-anchor="middle" letter-spacing="0.3" stroke="#585858" stroke-width="0.12">SAMPLER 2</text>
<circle cx="1002.30" cy="633.80" r="12.6" fill="#000" opacity="0.28" filter="url(#blur1)"/>
<circle cx="1002.00" cy="633.00" r="12" fill="url(#wknob)"/>
<line x1="1002.00" y1="628.20" x2="1002.00" y2="622.80" stroke="#0c1a2c" stroke-width="2.4"/>
<text transform="translate(1002.00,658.83) scale(0.85,1)" font-size="10.5" fill="#1e1e1e" font-weight="bold" text-anchor="middle" letter-spacing="0.4" stroke="#1e1e1e" stroke-width="0.12">PAN</text>
<rect x="1050.70" y="621.30" width="24.60" height="24.60" fill="#000" rx="2" opacity="0.35" filter="url(#blur1)"/>
<rect x="1051.00" y="621.00" width="24.00" height="24.00" fill="url(#lbtn)" rx="2"/>
<rect x="1080.70" y="621.30" width="24.60" height="24.60" fill="#000" rx="2" opacity="0.35" filter="url(#blur1)"/>
<rect x="1081.00" y="621.00" width="24.00" height="24.00" fill="url(#lbtn)" rx="2"/>
<text x="1063.00" y="637.01" font-size="11" fill="#222" font-weight="bold" text-anchor="middle" stroke="#222" stroke-width="0.12">M</text>
<text x="1093.00" y="637.01" font-size="11" fill="#222" font-weight="bold" text-anchor="middle" stroke="#222" stroke-width="0.12">S</text>
<path d="M1040,661.5 V654.5 H1048" fill="none" stroke="#a8a8a8" stroke-width="1.6"/>
<path d="M1040.5,760 V768.5 H1049" fill="none" stroke="#a8a8a8" stroke-width="1.6"/>
<text x="1041.30" y="678.04" font-size="10" fill="#a2a2a2" font-weight="bold" text-anchor="middle" stroke="#a2a2a2" stroke-width="0.12">S</text>
<text x="1041.30" y="697.09" font-size="10" fill="#a2a2a2" font-weight="bold" text-anchor="middle" stroke="#a2a2a2" stroke-width="0.12">E</text>
<text x="1041.30" y="716.14" font-size="10" fill="#a2a2a2" font-weight="bold" text-anchor="middle" stroke="#a2a2a2" stroke-width="0.12">N</text>
<text x="1041.30" y="735.19" font-size="10" fill="#a2a2a2" font-weight="bold" text-anchor="middle" stroke="#a2a2a2" stroke-width="0.12">D</text>
<text x="1041.30" y="754.25" font-size="10" fill="#a2a2a2" font-weight="bold" text-anchor="middle" stroke="#a2a2a2" stroke-width="0.12">S</text>
<circle cx="1063.30" cy="667.80" r="12.6" fill="#000" opacity="0.28" filter="url(#blur1)"/>
<circle cx="1063.00" cy="667.00" r="12" fill="url(#wknob)"/>
<line x1="1058.27" y1="666.17" x2="1052.95" y2="665.23" stroke="#0c1a2c" stroke-width="2.4"/>
<text transform="translate(1080.60,670.83) scale(0.85,1)" font-size="10.5" fill="#1e1e1e" font-weight="bold" text-anchor="start" letter-spacing="0.4" stroke="#1e1e1e" stroke-width="0.12">REV A</text>
<circle cx="1063.30" cy="697.80" r="12.6" fill="#000" opacity="0.28" filter="url(#blur1)"/>
<circle cx="1063.00" cy="697.00" r="12" fill="url(#wknob)"/>
<line x1="1060.60" y1="701.16" x2="1057.90" y2="705.83" stroke="#0c1a2c" stroke-width="2.4"/>
<text transform="translate(1080.60,700.83) scale(0.85,1)" font-size="10.5" fill="#1e1e1e" font-weight="bold" text-anchor="start" letter-spacing="0.4" stroke="#1e1e1e" stroke-width="0.12">REV B</text>
<circle cx="1063.30" cy="727.80" r="12.6" fill="#000" opacity="0.28" filter="url(#blur1)"/>
<circle cx="1063.00" cy="727.00" r="12" fill="url(#wknob)"/>
<line x1="1060.60" y1="731.16" x2="1057.90" y2="735.83" stroke="#0c1a2c" stroke-width="2.4"/>
<text transform="translate(1080.60,730.83) scale(0.85,1)" font-size="10.5" fill="#1e1e1e" font-weight="bold" text-anchor="start" letter-spacing="0.4" stroke="#1e1e1e" stroke-width="0.12">DLY A</text>
<circle cx="1061.30" cy="756.80" r="12.6" fill="#000" opacity="0.28" filter="url(#blur1)"/>
<circle cx="1061.00" cy="756.00" r="12" fill="url(#wknob)"/>
<line x1="1058.60" y1="760.16" x2="1055.90" y2="764.83" stroke="#0c1a2c" stroke-width="2.4"/>
<text transform="translate(1080.60,760.83) scale(0.85,1)" font-size="10.5" fill="#1e1e1e" font-weight="bold" text-anchor="start" letter-spacing="0.4" stroke="#1e1e1e" stroke-width="0.12">DLY B</text>
<rect x="990.30" y="669.20" width="18.60" height="98.80" fill="#5e5e5e" rx="2" stroke="#555" stroke-width="0.8"/>
<rect x="1020.00" y="669.20" width="3.00" height="98.80" fill="#9e9e9e"/>
<rect x="1014.00" y="670.60" width="15.00" height="27.00" fill="#000" rx="2" opacity="0.3" filter="url(#blur05)"/>
<rect x="1014.00" y="669.60" width="15.00" height="27.00" fill="url(#fcap)" rx="2"/>
<rect x="1016.00" y="682.60" width="11.00" height="1.00" fill="#8a8a8a"/>
<rect x="1120.00" y="71.00" width="157.00" height="707.00" fill="#383838"/>
<rect x="1120.00" y="188.00" width="157.00" height="1.00" fill="#2a2a2a"/>
<rect x="1120.00" y="588.30" width="157.00" height="1.00" fill="#2a2a2a"/>
<text transform="translate(1141.50,93.56) scale(0.85,1)" font-size="12.5" fill="#bdbdbd" font-weight="bold" text-anchor="start" stroke="#bdbdbd" stroke-width="0.12" textLength="136.8" lengthAdjust="spacing">INSERT EFFECTS</text>
<path d="M1130.5,118 V110 H1138.5" fill="none" stroke="#c4c4c4" stroke-width="2.4"/>
<path d="M1259.5,110 H1267.5 V118" fill="none" stroke="#c4c4c4" stroke-width="2.4"/>
<text transform="translate(1188.50,117.37) scale(0.87,1)" font-size="12" fill="#c6c6c6" font-weight="bold" text-anchor="middle" letter-spacing="0.3" stroke="#c6c6c6" stroke-width="0.12">SATURATE</text>
<path d="M1235.76,109.22 A6.2,6.2 0 1 1 1228.64,109.22" fill="none" stroke="#6fb0f8" stroke-width="2"/>
<line x1="1232.20" y1="106.70" x2="1232.20" y2="113.30" stroke="#6fb0f8" stroke-width="2"/>
<rect x="1130.20" y="129.80" width="13.00" height="13.00" fill="#2a2a2a" rx="2" opacity="0.45" filter="url(#blur05)"/>
<rect x="1130.00" y="129.00" width="13.00" height="13.00" fill="#8cbaff" rx="2"/>
<text transform="translate(1146.40,141.41) scale(0.9,1)" font-size="11" fill="#c6c6c6" font-weight="bold" text-anchor="start" stroke="#c6c6c6" stroke-width="0.12">Type1</text>
<rect x="1130.20" y="145.80" width="13.00" height="13.00" fill="#2a2a2a" rx="2" opacity="0.45" filter="url(#blur05)"/>
<rect x="1130.00" y="145.00" width="13.00" height="13.00" fill="#c4c4c4" rx="2"/>
<text transform="translate(1146.40,157.41) scale(0.9,1)" font-size="11" fill="#c6c6c6" font-weight="bold" text-anchor="start" stroke="#c6c6c6" stroke-width="0.12">Type2</text>
<rect x="1130.20" y="161.80" width="13.00" height="13.00" fill="#2a2a2a" rx="2" opacity="0.45" filter="url(#blur05)"/>
<rect x="1130.00" y="161.00" width="13.00" height="13.00" fill="#c4c4c4" rx="2"/>
<text transform="translate(1146.40,173.41) scale(0.9,1)" font-size="11" fill="#c6c6c6" font-weight="bold" text-anchor="start" stroke="#c6c6c6" stroke-width="0.12">Type3</text>
<circle cx="1218.00" cy="148.00" r="9.2" fill="none" stroke="#111" stroke-width="7.4" opacity="0.45" filter="url(#blur05)"/>
<circle cx="1218.00" cy="147.50" r="9" fill="none" stroke="url(#dknob)" stroke-width="6.2"/>
<line x1="1214.01" y1="152.25" x2="1211.57" y2="155.16" stroke="#e8e8e8" stroke-width="2"/>
<circle cx="1256.00" cy="148.00" r="9.2" fill="none" stroke="#111" stroke-width="7.4" opacity="0.45" filter="url(#blur05)"/>
<circle cx="1256.00" cy="147.50" r="9" fill="none" stroke="url(#dknob)" stroke-width="6.2"/>
<line x1="1250.01" y1="149.10" x2="1246.34" y2="150.09" stroke="#e8e8e8" stroke-width="2"/>
<text transform="translate(1219.00,174.83) scale(0.87,1)" font-size="10.5" fill="#c4c4c4" font-weight="bold" text-anchor="middle" stroke="#c4c4c4" stroke-width="0.12">DRIVE</text>
<text transform="translate(1256.00,174.83) scale(0.87,1)" font-size="10.5" fill="#c4c4c4" font-weight="bold" text-anchor="middle" stroke="#c4c4c4" stroke-width="0.12">MIX</text>
<text transform="translate(1147.60,210.06) scale(0.85,1)" font-size="12.5" fill="#bdbdbd" font-weight="bold" text-anchor="start" stroke="#bdbdbd" stroke-width="0.12" textLength="121" lengthAdjust="spacing">SEND EFFECTS</text>
<path d="M1130.5,235.8 V227.8 H1138.5" fill="none" stroke="#c4c4c4" stroke-width="2.4"/>
<path d="M1259.5,227.8 H1267.5 V235.8" fill="none" stroke="#c4c4c4" stroke-width="2.4"/>
<text transform="translate(1187.50,235.37) scale(0.87,1)" font-size="12" fill="#c6c6c6" font-weight="bold" text-anchor="middle" letter-spacing="0.3" stroke="#c6c6c6" stroke-width="0.12">REVERB A</text>
<path d="M1235.26,225.92 A6.2,6.2 0 1 1 1228.14,225.92" fill="none" stroke="#6fb0f8" stroke-width="2"/>
<line x1="1231.70" y1="223.40" x2="1231.70" y2="230.00" stroke="#6fb0f8" stroke-width="2"/>
<text transform="translate(1130.00,256.43) scale(0.87,1)" font-size="10.5" fill="#b4b4b4" font-weight="bold" text-anchor="start" stroke="#b4b4b4" stroke-width="0.12">IMPULSE</text>
<rect x="1130.00" y="262.00" width="138.00" height="20.00" fill="#000" rx="2" opacity="0.45" filter="url(#blur05)"/>
<rect x="1130.00" y="261.00" width="138.00" height="20.00" fill="url(#gbtn)" rx="2"/>
<text transform="translate(1200.00,275.37) scale(0.95,1)" font-size="12" fill="#f2f2f2" font-weight="bold" text-anchor="middle" stroke="#f2f2f2" stroke-width="0.12">Gated Reverb</text>
<path d="M1253.5,269 H1262.5 L1258,274 Z" fill="#eeeeee"/>
<path d="M1130.5,305.5 V297.5 H1138.5" fill="none" stroke="#c4c4c4" stroke-width="2.4"/>
<path d="M1259.5,297.5 H1267.5 V305.5" fill="none" stroke="#c4c4c4" stroke-width="2.4"/>
<text transform="translate(1187.50,304.97) scale(0.87,1)" font-size="12" fill="#c6c6c6" font-weight="bold" text-anchor="middle" letter-spacing="0.3" stroke="#c6c6c6" stroke-width="0.12">REVERB B</text>
<path d="M1235.26,295.72 A6.2,6.2 0 1 1 1228.14,295.72" fill="none" stroke="#6fb0f8" stroke-width="2"/>
<line x1="1231.70" y1="293.20" x2="1231.70" y2="299.80" stroke="#6fb0f8" stroke-width="2"/>
<circle cx="1161.00" cy="328.10" r="9.2" fill="none" stroke="#111" stroke-width="7.4" opacity="0.45" filter="url(#blur05)"/>
<circle cx="1161.00" cy="327.60" r="9" fill="none" stroke="url(#dknob)" stroke-width="6.2"/>
<line x1="1156.62" y1="331.98" x2="1153.93" y2="334.67" stroke="#e8e8e8" stroke-width="2"/>
<text transform="translate(1161.00,355.83) scale(0.87,1)" font-size="10.5" fill="#c4c4c4" font-weight="bold" text-anchor="middle" stroke="#c4c4c4" stroke-width="0.12">PRE</text>
<circle cx="1198.80" cy="328.10" r="9.2" fill="none" stroke="#111" stroke-width="7.4" opacity="0.45" filter="url(#blur05)"/>
<circle cx="1198.80" cy="327.60" r="9" fill="none" stroke="url(#dknob)" stroke-width="6.2"/>
<line x1="1192.69" y1="328.68" x2="1188.95" y2="329.34" stroke="#e8e8e8" stroke-width="2"/>
<text transform="translate(1198.80,355.83) scale(0.87,1)" font-size="10.5" fill="#c4c4c4" font-weight="bold" text-anchor="middle" stroke="#c4c4c4" stroke-width="0.12">SIZE</text>
<circle cx="1236.80" cy="328.10" r="9.2" fill="none" stroke="#111" stroke-width="7.4" opacity="0.45" filter="url(#blur05)"/>
<circle cx="1236.80" cy="327.60" r="9" fill="none" stroke="url(#dknob)" stroke-width="6.2"/>
<line x1="1231.43" y1="330.70" x2="1228.14" y2="332.60" stroke="#e8e8e8" stroke-width="2"/>
<text transform="translate(1236.80,355.83) scale(0.87,1)" font-size="10.5" fill="#c4c4c4" font-weight="bold" text-anchor="middle" stroke="#c4c4c4" stroke-width="0.12">DAMP</text>
<text transform="translate(1130.00,373.23) scale(0.87,1)" font-size="10.5" fill="#b4b4b4" font-weight="bold" text-anchor="start" stroke="#b4b4b4" stroke-width="0.12">ROOM TYPE</text>
<rect x="1130.00" y="379.00" width="138.00" height="20.00" fill="#000" rx="2" opacity="0.45" filter="url(#blur05)"/>
<rect x="1130.00" y="378.00" width="138.00" height="20.00" fill="url(#gbtn)" rx="2"/>
<text transform="translate(1200.00,392.37) scale(0.95,1)" font-size="12" fill="#f2f2f2" font-weight="bold" text-anchor="middle" stroke="#f2f2f2" stroke-width="0.12">Small Stage</text>
<path d="M1253.5,386 H1262.5 L1258,391 Z" fill="#eeeeee"/>
<path d="M1130.5,422.5 V414.5 H1138.5" fill="none" stroke="#c4c4c4" stroke-width="2.4"/>
<path d="M1259.5,414.5 H1267.5 V422.5" fill="none" stroke="#c4c4c4" stroke-width="2.4"/>
<text transform="translate(1183.50,422.67) scale(0.87,1)" font-size="12" fill="#c6c6c6" font-weight="bold" text-anchor="middle" letter-spacing="0.3" stroke="#c6c6c6" stroke-width="0.12">DELAY A</text>
<path d="M1235.36,413.42 A6.2,6.2 0 1 1 1228.24,413.42" fill="none" stroke="#6fb0f8" stroke-width="2"/>
<line x1="1231.80" y1="410.90" x2="1231.80" y2="417.50" stroke="#6fb0f8" stroke-width="2"/>
<circle cx="1141.90" cy="445.00" r="9.2" fill="none" stroke="#111" stroke-width="7.4" opacity="0.45" filter="url(#blur05)"/>
<circle cx="1141.90" cy="444.50" r="9" fill="none" stroke="url(#dknob)" stroke-width="6.2"/>
<line x1="1135.70" y1="444.50" x2="1131.90" y2="444.50" stroke="#e8e8e8" stroke-width="2"/>
<text transform="translate(1141.90,472.93) scale(0.87,1)" font-size="10.5" fill="#c4c4c4" font-weight="bold" text-anchor="middle" stroke="#c4c4c4" stroke-width="0.12">LEFT</text>
<circle cx="1180.00" cy="445.00" r="9.2" fill="none" stroke="#111" stroke-width="7.4" opacity="0.45" filter="url(#blur05)"/>
<circle cx="1180.00" cy="444.50" r="9" fill="none" stroke="url(#dknob)" stroke-width="6.2"/>
<line x1="1176.90" y1="439.13" x2="1175.00" y2="435.84" stroke="#e8e8e8" stroke-width="2"/>
<text transform="translate(1180.00,472.93) scale(0.87,1)" font-size="10.5" fill="#c4c4c4" font-weight="bold" text-anchor="middle" stroke="#c4c4c4" stroke-width="0.12">RIGHT</text>
<circle cx="1217.60" cy="445.00" r="9.2" fill="none" stroke="#111" stroke-width="7.4" opacity="0.45" filter="url(#blur05)"/>
<circle cx="1217.60" cy="444.50" r="9" fill="none" stroke="url(#dknob)" stroke-width="6.2"/>
<line x1="1214.50" y1="449.87" x2="1212.60" y2="453.16" stroke="#e8e8e8" stroke-width="2"/>
<text transform="translate(1217.60,472.93) scale(0.87,1)" font-size="10.5" fill="#c4c4c4" font-weight="bold" text-anchor="middle" stroke="#c4c4c4" stroke-width="0.12">FB</text>
<circle cx="1255.70" cy="445.00" r="9.2" fill="none" stroke="#111" stroke-width="7.4" opacity="0.45" filter="url(#blur05)"/>
<circle cx="1255.70" cy="444.50" r="9" fill="none" stroke="url(#dknob)" stroke-width="6.2"/>
<line x1="1252.60" y1="449.87" x2="1250.70" y2="453.16" stroke="#e8e8e8" stroke-width="2"/>
<text transform="translate(1255.70,472.93) scale(0.87,1)" font-size="10.5" fill="#c4c4c4" font-weight="bold" text-anchor="middle" stroke="#c4c4c4" stroke-width="0.12">CUT</text>
<rect x="1129.70" y="484.00" width="138.30" height="19.60" fill="#000" rx="2" opacity="0.45" filter="url(#blur05)"/>
<rect x="1129.70" y="483.00" width="138.30" height="19.60" fill="url(#gbtn)" rx="2"/>
<text transform="translate(1199.00,497.37) scale(0.95,1)" font-size="12" fill="#f2f2f2" font-weight="bold" text-anchor="middle" stroke="#f2f2f2" stroke-width="0.12">High Pass</text>
<path d="M1130.5,525.5 V517.5 H1138.5" fill="none" stroke="#c4c4c4" stroke-width="2.4"/>
<path d="M1259.5,517.5 H1267.5 V525.5" fill="none" stroke="#c4c4c4" stroke-width="2.4"/>
<text transform="translate(1183.50,525.77) scale(0.87,1)" font-size="12" fill="#c6c6c6" font-weight="bold" text-anchor="middle" letter-spacing="0.3" stroke="#c6c6c6" stroke-width="0.12">DELAY B</text>
<path d="M1235.36,516.52 A6.2,6.2 0 1 1 1228.24,516.52" fill="none" stroke="#6fb0f8" stroke-width="2"/>
<line x1="1231.80" y1="514.00" x2="1231.80" y2="520.60" stroke="#6fb0f8" stroke-width="2"/>
<circle cx="1161.00" cy="548.80" r="9.2" fill="none" stroke="#111" stroke-width="7.4" opacity="0.45" filter="url(#blur05)"/>
<circle cx="1161.00" cy="548.30" r="9" fill="none" stroke="url(#dknob)" stroke-width="6.2"/>
<line x1="1155.63" y1="551.40" x2="1152.34" y2="553.30" stroke="#e8e8e8" stroke-width="2"/>
<text transform="translate(1161.00,577.23) scale(0.87,1)" font-size="10.5" fill="#c4c4c4" font-weight="bold" text-anchor="middle" stroke="#c4c4c4" stroke-width="0.12">TIME</text>
<circle cx="1198.80" cy="548.80" r="9.2" fill="none" stroke="#111" stroke-width="7.4" opacity="0.45" filter="url(#blur05)"/>
<circle cx="1198.80" cy="548.30" r="9" fill="none" stroke="url(#dknob)" stroke-width="6.2"/>
<line x1="1195.70" y1="542.93" x2="1193.80" y2="539.64" stroke="#e8e8e8" stroke-width="2"/>
<text transform="translate(1198.80,577.23) scale(0.87,1)" font-size="10.5" fill="#c4c4c4" font-weight="bold" text-anchor="middle" stroke="#c4c4c4" stroke-width="0.12">FB</text>
<circle cx="1236.70" cy="548.80" r="9.2" fill="none" stroke="#111" stroke-width="7.4" opacity="0.45" filter="url(#blur05)"/>
<circle cx="1236.70" cy="548.30" r="9" fill="none" stroke="url(#dknob)" stroke-width="6.2"/>
<line x1="1231.62" y1="544.74" x2="1228.51" y2="542.56" stroke="#e8e8e8" stroke-width="2"/>
<text transform="translate(1236.70,577.23) scale(0.87,1)" font-size="10.5" fill="#c4c4c4" font-weight="bold" text-anchor="middle" stroke="#c4c4c4" stroke-width="0.12">DAMP</text>
<polygon points="1130,589.3 1268,589.3 1246,610.6 1152,610.6" fill="#252525"/>
<text transform="translate(1199.00,604.37) scale(0.92,1)" font-size="12" fill="#c6c6c6" font-weight="bold" text-anchor="middle" stroke="#c6c6c6" stroke-width="0.12">MASTER</text>
<circle cx="1141.8" cy="634.2" r="12.6" fill="#141414" opacity="0.5" filter="url(#blur1)"/>
<circle cx="1141.8" cy="633.4" r="12.1" fill="url(#gknob)"/>
<rect x="1140.80" y="623.50" width="2.00" height="5.50" fill="#f0f0f0"/>
<text transform="translate(1141.80,659.03) scale(0.87,1)" font-size="10.5" fill="#c4c4c4" font-weight="bold" text-anchor="middle" stroke="#c4c4c4" stroke-width="0.12">PAN</text>
<text transform="translate(1262.90,629.41) scale(0.92,1)" font-size="11" fill="#c8c8c8" font-weight="bold" text-anchor="end" stroke="#c8c8c8" stroke-width="0.12">Kill EQ</text>
<rect x="1184.00" y="637.40" width="25.30" height="19.30" fill="#000" rx="2" opacity="0.45" filter="url(#blur05)"/>
<rect x="1184.00" y="636.40" width="25.30" height="19.30" fill="url(#gbtn)" rx="2"/>
<text transform="translate(1196.65,650.19) scale(0.92,1)" font-size="11.5" fill="#f0f0f0" font-weight="bold" text-anchor="middle" stroke="#f0f0f0" stroke-width="0.12">Lo</text>
<rect x="1211.30" y="637.40" width="24.70" height="19.30" fill="#000" rx="2" opacity="0.45" filter="url(#blur05)"/>
<rect x="1211.30" y="636.40" width="24.70" height="19.30" fill="url(#gbtn)" rx="2"/>
<text transform="translate(1223.65,650.19) scale(0.92,1)" font-size="11.5" fill="#f0f0f0" font-weight="bold" text-anchor="middle" stroke="#f0f0f0" stroke-width="0.12">Mid</text>
<rect x="1238.00" y="637.40" width="24.90" height="19.30" fill="#000" rx="2" opacity="0.45" filter="url(#blur05)"/>
<rect x="1238.00" y="636.40" width="24.90" height="19.30" fill="url(#gbtn)" rx="2"/>
<text transform="translate(1250.45,650.19) scale(0.92,1)" font-size="11.5" fill="#f0f0f0" font-weight="bold" text-anchor="middle" stroke="#f0f0f0" stroke-width="0.12">Hi</text>
<path d="M1180,679 V671 H1188 M1259,671 H1267 V679" fill="none" stroke="#c4c4c4" stroke-width="2.2"/>
<text transform="translate(1223.50,677.31) scale(0.86,1)" font-size="11" fill="#c4c4c4" font-weight="bold" text-anchor="middle" stroke="#c4c4c4" stroke-width="0.12">COMPRESSOR</text>
<circle cx="1202.60" cy="694.70" r="9.2" fill="none" stroke="#111" stroke-width="7.4" opacity="0.45" filter="url(#blur05)"/>
<circle cx="1202.60" cy="694.20" r="9" fill="none" stroke="url(#dknob)" stroke-width="6.2"/>
<line x1="1207.97" y1="691.10" x2="1211.26" y2="689.20" stroke="#e8e8e8" stroke-width="2"/>
<text transform="translate(1202.60,721.03) scale(0.87,1)" font-size="10.5" fill="#c4c4c4" font-weight="bold" text-anchor="middle" stroke="#c4c4c4" stroke-width="0.12">THRESH</text>
<circle cx="1244.80" cy="694.70" r="9.2" fill="none" stroke="#111" stroke-width="7.4" opacity="0.45" filter="url(#blur05)"/>
<circle cx="1244.80" cy="694.20" r="9" fill="none" stroke="url(#dknob)" stroke-width="6.2"/>
<line x1="1238.81" y1="692.60" x2="1235.14" y2="691.61" stroke="#e8e8e8" stroke-width="2"/>
<text transform="translate(1244.80,721.03) scale(0.87,1)" font-size="10.5" fill="#c4c4c4" font-weight="bold" text-anchor="middle" stroke="#c4c4c4" stroke-width="0.12">RATIO</text>
<circle cx="1202.60" cy="741.80" r="9.2" fill="none" stroke="#111" stroke-width="7.4" opacity="0.45" filter="url(#blur05)"/>
<circle cx="1202.60" cy="741.30" r="9" fill="none" stroke="url(#dknob)" stroke-width="6.2"/>
<line x1="1199.50" y1="746.67" x2="1197.60" y2="749.96" stroke="#e8e8e8" stroke-width="2"/>
<text transform="translate(1202.60,768.13) scale(0.87,1)" font-size="10.5" fill="#c4c4c4" font-weight="bold" text-anchor="middle" stroke="#c4c4c4" stroke-width="0.12">ATK</text>
<circle cx="1244.80" cy="741.80" r="9.2" fill="none" stroke="#111" stroke-width="7.4" opacity="0.45" filter="url(#blur05)"/>
<circle cx="1244.80" cy="741.30" r="9" fill="none" stroke="url(#dknob)" stroke-width="6.2"/>
<line x1="1238.97" y1="743.42" x2="1235.40" y2="744.72" stroke="#e8e8e8" stroke-width="2"/>
<text transform="translate(1244.80,768.13) scale(0.87,1)" font-size="10.5" fill="#c4c4c4" font-weight="bold" text-anchor="middle" stroke="#c4c4c4" stroke-width="0.12">REL</text>
<rect x="1130.00" y="669.00" width="18.80" height="99.00" fill="#2d2d2d" rx="2"/>
<rect x="1159.80" y="669.00" width="3.00" height="99.00" fill="#222"/>
<rect x="1153.70" y="674.80" width="15.30" height="27.20" fill="#000" rx="2" opacity="0.4" filter="url(#blur05)"/>
<rect x="1153.70" y="673.80" width="15.30" height="27.20" fill="url(#mcap)" rx="2"/>
<rect x="1155.50" y="687.00" width="11.50" height="1.20" fill="#e8e8e8"/>
</svg></body></html>
